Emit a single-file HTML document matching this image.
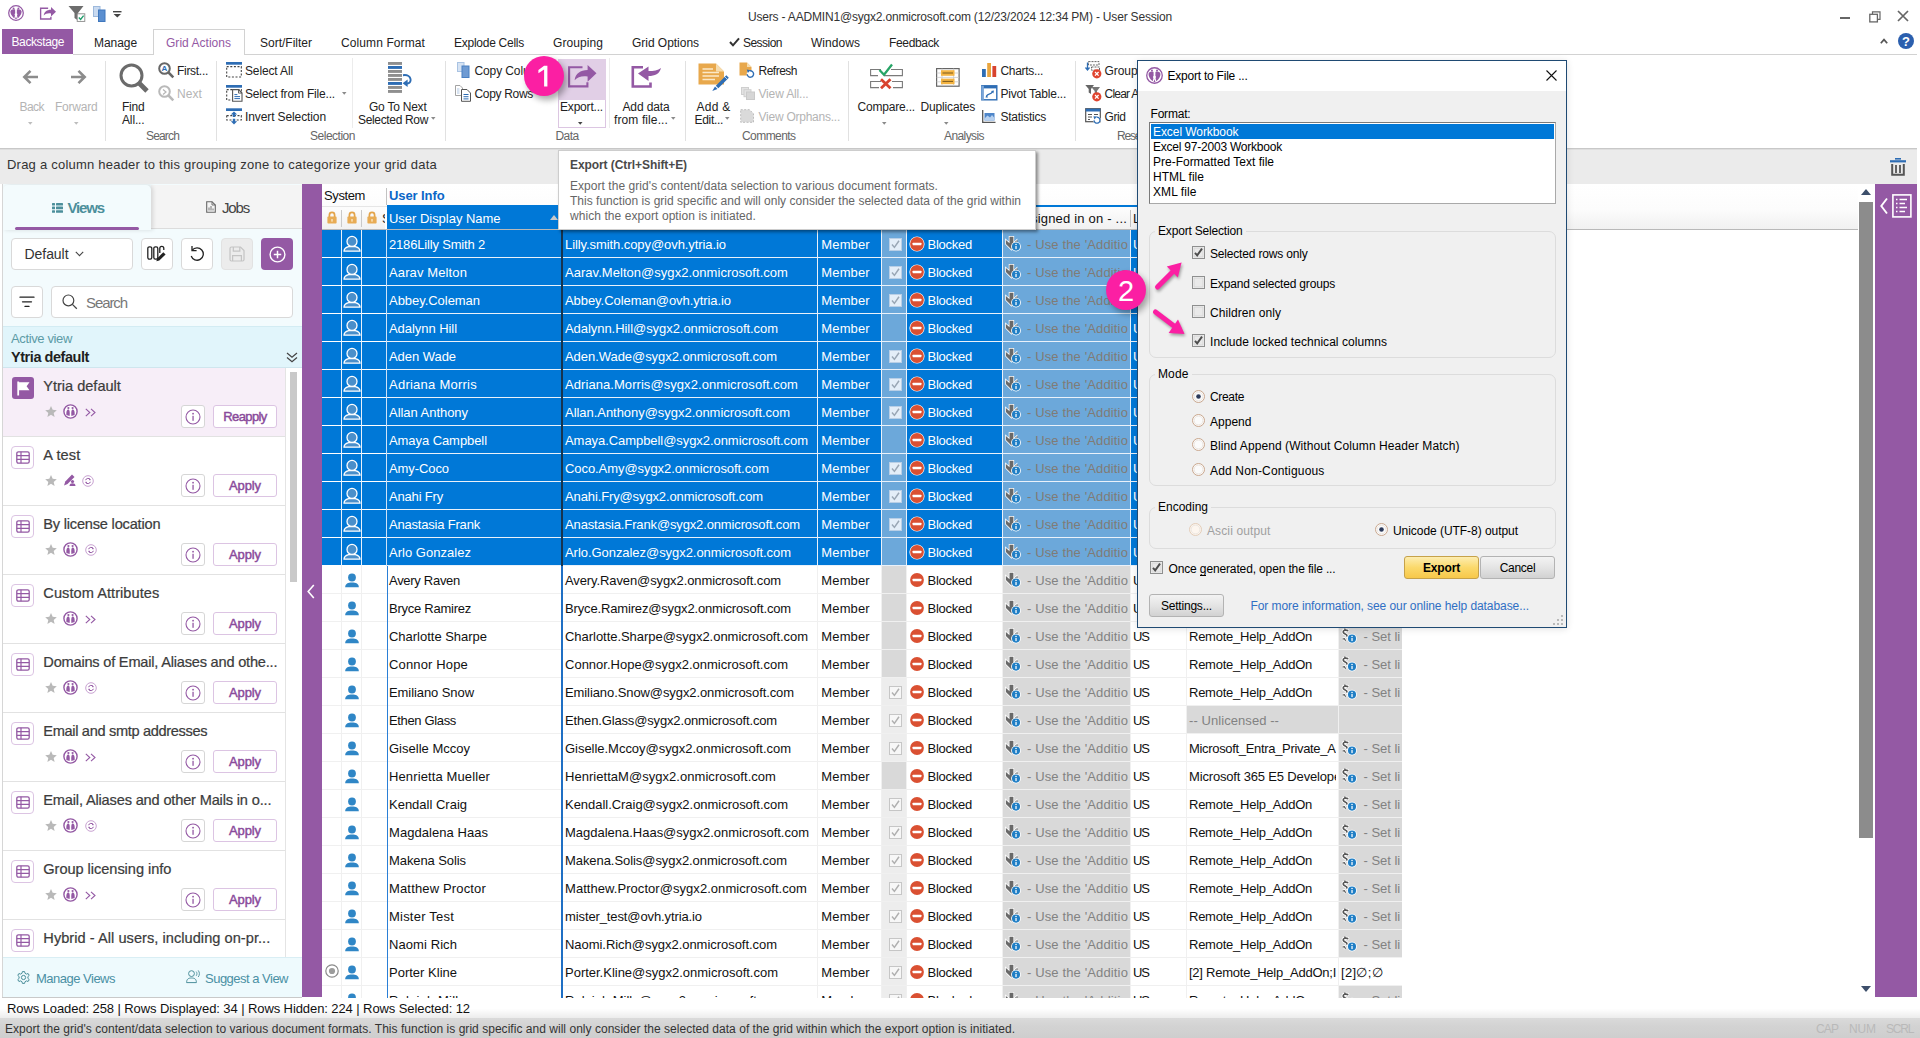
<!DOCTYPE html>
<html lang="en"><head><meta charset="utf-8"><title>Users - User Session</title>
<style>
*{box-sizing:border-box;margin:0;padding:0}
html,body{width:1920px;height:1038px;overflow:hidden;background:#fff}
body{font-family:"Liberation Sans",sans-serif;font-size:12px;color:#222;position:relative}
#root{position:absolute;left:0;top:0;width:1920px;height:1038px;overflow:hidden}
#root div,#root span,#root svg{position:absolute}
#root span{white-space:nowrap}
#root svg{overflow:visible}
.clip{overflow:hidden}
</style></head>
<body><div id="root">
<svg style="left:8px;top:5px;" width="16" height="16" viewBox="0 0 16 16"><circle cx="8" cy="8" r="7.3" fill="#fff" stroke="#9459a4" stroke-width="1.25"/><path d="M7.1 4.6C5.2 3.6 3 4.4 2.4 6.3C2.2 8.6 3.6 11 6.3 13.4L7 10.6C6.4 9.6 6.6 8.8 7.2 8.2Z" fill="#9459a4"/><path d="M8.9 4.6C10.8 3.6 13 4.4 13.6 6.3C13.8 8.6 12.4 11 9.7 13.4L9 10.6C9.6 9.6 9.4 8.8 8.8 8.2Z" fill="#9459a4"/><circle cx="5.6" cy="3.4" r="0.95" fill="#9459a4"/><circle cx="10.4" cy="3.4" r="0.95" fill="#9459a4"/><path d="M7.1 14L8 11.6L8.9 14Z" fill="#9459a4"/></svg>
<svg style="left:40.3px;top:7px;" width="16.0" height="13.2" viewBox="0 0 28.5 23.5"><path d="M14.5 2.3H1.1V21.4H19.4V17.3" fill="none" stroke="#9459a4" stroke-width="2.4"/><path d="M6.6 15.2C7.5 8.8 12.3 5.2 19.6 5.1V0L28.5 8.3L19.6 16.8V11.4C14.2 10.6 9.8 11.6 6.6 15.2Z" fill="#9459a4"/></svg>
<svg style="left:68px;top:5px;" width="18" height="17" viewBox="0 0 18 17"><path d="M0.5 1H15.5L10 8V15.5L6.5 13V8Z" fill="#6d6d6d"/><rect x="9.2" y="8.8" width="7.6" height="7.6" fill="#fff" stroke="#8a8a8a" stroke-width="0.9"/><path d="M10.8 12.6L12.6 14.4L15.6 10.6" fill="none" stroke="#1f9d6b" stroke-width="1.4"/></svg>
<svg style="left:93px;top:6px;" width="13" height="16" viewBox="0 0 13 16"><rect x="0.5" y="0.5" width="6.5" height="10" fill="#c9daf0" stroke="#9db9dc" stroke-width="1"/><rect x="5.5" y="4" width="6.5" height="11.5" fill="#5b8fd0" stroke="#3f77bd" stroke-width="1"/></svg>
<svg style="left:113px;top:11px;" width="9" height="7" viewBox="0 0 9 7"><rect x="0" y="0" width="8.5" height="1.4" fill="#444"/><path d="M0.6 3H8L4.3 6.6Z" fill="#444"/></svg>
<span style="top:8.5px;font-size:12px;line-height:16px;color:#333;left:960px;transform:translateX(-50%);letter-spacing:-0.185px;">Users - AADMIN1@sygx2.onmicrosoft.com (12/23/2024 12:34 PM) - User Session</span>
<div style="left:1840px;top:17px;width:10px;height:1.6px;background:#666;"></div>
<svg style="left:1869px;top:11px;" width="12" height="12" viewBox="0 0 12 12"><path d="M3.5 3V0.8H11V8.3H8.8" fill="none" stroke="#666" stroke-width="1.2"/><rect x="0.8" y="3.3" width="7.6" height="7.6" fill="#fff" stroke="#666" stroke-width="1.3"/></svg>
<svg style="left:1897px;top:10px;" width="12" height="12" viewBox="0 0 12 12"><path d="M1 1L11 11M11 1L1 11" stroke="#666" stroke-width="1.7" fill="none"/></svg>
<svg style="left:1880px;top:38px;" width="8" height="6" viewBox="0 0 8 6"><path d="M0.8 5.2L4 1.6L7.2 5.2" stroke="#555" stroke-width="1.7" fill="none"/></svg>
<div style="left:1898px;top:33px;width:16px;height:16px;background:#2b5fae;border-radius:50%;"></div>
<span style="top:32.8px;font-size:13px;line-height:17px;color:#fff;font-weight:700;left:1906px;transform:translateX(-50%);">?</span>
<div style="left:73px;top:54px;width:1844px;height:1px;background:#d2d2d2;"></div>
<div style="left:2px;top:29px;width:71px;height:25px;background:#9459a4;"></div>
<span style="top:33.5px;font-size:12px;line-height:16px;color:#fff;left:11.5px;letter-spacing:-0.394px;">Backstage</span>
<div style="left:153px;top:29px;width:92px;height:26px;background:#fff;border:1px solid #d2d2d2;border-bottom:none;"></div>
<span style="top:34.5px;font-size:12px;line-height:16px;color:#222;left:94px;letter-spacing:-0.062px;">Manage</span>
<span style="top:34.5px;font-size:12px;line-height:16px;color:#9459a4;left:166px;letter-spacing:0.025px;">Grid Actions</span>
<span style="top:34.5px;font-size:12px;line-height:16px;color:#222;left:260px;letter-spacing:-0.001px;">Sort/Filter</span>
<span style="top:34.5px;font-size:12px;line-height:16px;color:#222;left:341px;letter-spacing:0.101px;">Column Format</span>
<span style="top:34.5px;font-size:12px;line-height:16px;color:#222;left:454px;letter-spacing:-0.260px;">Explode Cells</span>
<span style="top:34.5px;font-size:12px;line-height:16px;color:#222;left:553px;letter-spacing:0.078px;">Grouping</span>
<span style="top:34.5px;font-size:12px;line-height:16px;color:#222;left:632px;letter-spacing:-0.030px;">Grid Options</span>
<span style="top:34.5px;font-size:12px;line-height:16px;color:#222;left:743px;letter-spacing:-0.529px;">Session</span>
<span style="top:34.5px;font-size:12px;line-height:16px;color:#222;left:811px;letter-spacing:0.045px;">Windows</span>
<span style="top:34.5px;font-size:12px;line-height:16px;color:#222;left:889px;letter-spacing:-0.338px;">Feedback</span>
<svg style="left:729px;top:37px;" width="11" height="10" viewBox="0 0 11 10"><path d="M1 5L4 8.3L10 1.3" stroke="#333" stroke-width="2" fill="none"/></svg>
<div style="left:0px;top:148px;width:1917px;height:1px;background:#c8c8c8;"></div>
<div style="left:0px;top:149px;width:1917px;height:1px;background:#dedede;"></div>
<div style="left:105px;top:61px;width:1px;height:80px;background:#e1e1e1;"></div>
<div style="left:216px;top:61px;width:1px;height:80px;background:#e1e1e1;"></div>
<div style="left:445px;top:61px;width:1px;height:80px;background:#e1e1e1;"></div>
<div style="left:685px;top:61px;width:1px;height:80px;background:#e1e1e1;"></div>
<div style="left:848px;top:61px;width:1px;height:80px;background:#e1e1e1;"></div>
<div style="left:1075px;top:61px;width:1px;height:80px;background:#e1e1e1;"></div>
<div style="left:352px;top:58px;width:1px;height:70px;background:#ececec;"></div>
<div style="left:609px;top:58px;width:1px;height:70px;background:#ececec;"></div>
<svg style="left:22px;top:69px;" width="17" height="16" viewBox="0 0 17 16"><path d="M16 8H3M8.5 1.8L2.3 8L8.5 14.2" stroke="#8c8c8c" stroke-width="2.6" fill="none"/></svg>
<svg style="left:70px;top:69px;" width="17" height="16" viewBox="0 0 17 16"><path d="M1 8H14M8.5 1.8L14.7 8L8.5 14.2" stroke="#8c8c8c" stroke-width="2.6" fill="none"/></svg>
<span style="top:99.0px;font-size:12px;line-height:16px;color:#b4b4b4;left:19.5px;letter-spacing:-0.547px;">Back</span>
<span style="top:99.0px;font-size:12px;line-height:16px;color:#b4b4b4;left:55px;letter-spacing:-0.217px;">Forward</span>
<svg style="left:27.75px;top:121.7px;" width="4.5" height="2.8" viewBox="0 0 4.5 2.8"><path d="M0 0H4.5L2.25 2.8Z" fill="#bdbdbd"/></svg>
<svg style="left:73.75px;top:121.7px;" width="4.5" height="2.8" viewBox="0 0 4.5 2.8"><path d="M0 0H4.5L2.25 2.8Z" fill="#bdbdbd"/></svg>
<svg style="left:118px;top:62px;" width="32" height="32" viewBox="0 0 32 32"><circle cx="13.5" cy="13.5" r="10.5" fill="none" stroke="#6b6b6b" stroke-width="3"/><path d="M21.5 21.5L29 29" stroke="#6b6b6b" stroke-width="4.8"/></svg>
<span style="top:99.0px;font-size:12px;line-height:16px;color:#222;left:122px;letter-spacing:-0.211px;">Find</span>
<span style="top:112.0px;font-size:12px;line-height:16px;color:#222;left:122px;letter-spacing:-0.141px;">All...</span>
<svg style="left:158px;top:62px;" width="17" height="17" viewBox="0 0 17 17"><circle cx="6.5" cy="6.5" r="5.3" fill="none" stroke="#676767" stroke-width="2"/><path d="M10.5 10.5L15.3 15.3" stroke="#676767" stroke-width="2.5"/></svg>
<span style="top:62.5px;font-size:12px;line-height:16px;color:#222;left:177px;letter-spacing:-0.291px;">First...</span>
<svg style="left:158px;top:85px;" width="17" height="17" viewBox="0 0 17 17"><circle cx="6.5" cy="6.5" r="5.3" fill="none" stroke="#b9b9b9" stroke-width="2"/><path d="M10.5 10.5L15.3 15.3" stroke="#b9b9b9" stroke-width="2.5"/></svg>
<span style="top:85.5px;font-size:12px;line-height:16px;color:#b4b4b4;left:177px;letter-spacing:0.078px;">Next</span>
<span style="top:64.6px;font-size:8px;line-height:8px;color:#2e6db4;font-weight:700;left:164.4px;transform:translateX(-50%);">A</span>
<svg style="left:162px;top:89px;" width="5" height="6" viewBox="0 0 5 6"><path d="M1 0.5L4 3L1 5.5" fill="none" stroke="#b5b5b5" stroke-width="1.2"/></svg>
<span style="top:128.0px;font-size:12px;line-height:16px;color:#666;left:146px;letter-spacing:-0.839px;">Search</span>
<svg style="left:226px;top:62px;" width="17" height="17" viewBox="0 0 17 17"><rect x="0" y="0" width="16" height="2.7" fill="#2e6db4"/><rect x="0.7" y="4.6" width="14.6" height="10.4" fill="none" stroke="#444" stroke-width="1.1" stroke-dasharray="2 1.6"/></svg>
<span style="top:62.5px;font-size:12px;line-height:16px;color:#222;left:245px;letter-spacing:-0.136px;">Select All</span>
<svg style="left:226px;top:85px;" width="17" height="17" viewBox="0 0 17 17"><rect x="0" y="0" width="16" height="2.7" fill="#2e6db4"/><rect x="0.7" y="4.6" width="14.6" height="10.4" fill="none" stroke="#444" stroke-width="1.1" stroke-dasharray="2 1.6"/></svg>
<span style="top:85.5px;font-size:12px;line-height:16px;color:#222;left:245px;letter-spacing:-0.177px;">Select from File...</span>
<svg style="left:226px;top:108px;" width="17" height="17" viewBox="0 0 17 17"><rect x="0" y="0.3" width="16" height="2.7" fill="#2e6db4"/><rect x="0.7" y="7.6" width="14.6" height="4.4" fill="#fff" stroke="#444" stroke-width="1.1" stroke-dasharray="2 1.6"/><path d="M8 3.4L11.2 6.6H9.2V9H6.8V6.6H4.8Z" fill="#2e6db4"/><path d="M8 16.4L11.2 13.2H9.2V10.8H6.8V13.2H4.8Z" fill="#2e6db4"/></svg>
<span style="top:108.5px;font-size:12px;line-height:16px;color:#222;left:245px;letter-spacing:-0.107px;">Invert Selection</span>
<svg style="left:232px;top:88.5px;" width="11" height="13" viewBox="0 0 11 13"><path d="M0.6 0.6H6.5L10 4.1V12.2H0.6Z" fill="#fff" stroke="#555" stroke-width="1.1"/><path d="M6.5 0.6V4.1H10" fill="none" stroke="#555" stroke-width="0.9"/><path d="M2.4 5.6H5.4M2.4 7.6H8M2.4 9.6H8" stroke="#2e6db4" stroke-width="1"/></svg>
<svg style="left:341.75px;top:91.7px;" width="4.5" height="2.8" viewBox="0 0 4.5 2.8"><path d="M0 0H4.5L2.25 2.8Z" fill="#8a8a8a"/></svg>
<span style="top:128.0px;font-size:12px;line-height:16px;color:#666;left:310px;letter-spacing:-0.486px;">Selection</span>
<svg style="left:388px;top:62px;" width="24" height="31" viewBox="0 0 24 31"><rect x="0" y="0.0" width="14" height="2.9" fill="#8f8f8f"/><rect x="0" y="4.0" width="14" height="2.9" fill="#2e6db4"/><rect x="0" y="8.0" width="14" height="2.9" fill="#8f8f8f"/><rect x="0" y="12.0" width="14" height="2.9" fill="#8f8f8f"/><rect x="0" y="16.0" width="14" height="2.9" fill="#8f8f8f"/><rect x="0" y="20.0" width="14" height="2.9" fill="#2e6db4"/><rect x="0" y="24.0" width="14" height="2.9" fill="#8f8f8f"/><rect x="0" y="28.0" width="14" height="2.9" fill="#8f8f8f"/><path d="M15 13.2C24.5 11.8 24.5 22.5 18.5 21.4" fill="none" stroke="#2e6db4" stroke-width="1.9"/><path d="M14.6 21.3L19.6 17.6V25Z" fill="#2e6db4"/></svg>
<span style="top:99.0px;font-size:12px;line-height:16px;color:#222;left:369px;letter-spacing:-0.231px;">Go To Next</span>
<span style="top:112.0px;font-size:12px;line-height:16px;color:#222;left:358px;letter-spacing:-0.337px;">Selected Row</span>
<svg style="left:430.75px;top:116.7px;" width="4.5" height="2.8" viewBox="0 0 4.5 2.8"><path d="M0 0H4.5L2.25 2.8Z" fill="#8a8a8a"/></svg>
<svg style="left:457px;top:62px;" width="13" height="16" viewBox="0 0 13 16"><rect x="0.5" y="0.5" width="6.5" height="9" fill="#d6e3f3" stroke="#a9c3e3" stroke-width="1"/><rect x="5" y="4" width="7" height="11.5" fill="#6f9bd3" stroke="#4a80c2" stroke-width="1"/></svg>
<svg style="left:455px;top:85px;" width="17" height="17" viewBox="0 0 17 17"><path d="M0.5 0.5H5L7.5 3V10.5H0.5Z" fill="#fff" stroke="#9a9a9a" stroke-width="0.9"/><path d="M6.5 4.5H12L15.5 8V16.3H6.5Z" fill="#fff" stroke="#555" stroke-width="1"/><path d="M8.5 9.5H13.5M8.5 11.7H13.5M8.5 13.9H13.5" stroke="#2e6db4" stroke-width="1"/><path d="M2 4H4.5M2 6H4.5M2 8H4.5" stroke="#9db9dc" stroke-width="0.8"/></svg>
<span style="top:62.5px;font-size:12px;line-height:16px;color:#222;left:474.5px;letter-spacing:-0.115px;">Copy Colu</span>
<span style="top:85.5px;font-size:12px;line-height:16px;color:#222;left:474.5px;letter-spacing:-0.318px;">Copy Rows</span>
<div style="left:558px;top:59px;width:48px;height:69px;background:#fff;border:1px solid #dcc6e2;"></div>
<div style="left:558px;top:59px;width:48px;height:41px;background:#e1cfe6;"></div>
<svg style="left:568.3px;top:64.6px;" width="28.5" height="23.5" viewBox="0 0 28.5 23.5"><path d="M14.5 2.3H1.1V21.4H19.4V17.3" fill="none" stroke="#9459a4" stroke-width="2.1"/><path d="M6.6 15.2C7.5 8.8 12.3 5.2 19.6 5.1V0L28.5 8.3L19.6 16.8V11.4C14.2 10.6 9.8 11.6 6.6 15.2Z" fill="#9459a4"/></svg>
<span style="top:99.0px;font-size:12px;line-height:16px;color:#222;left:560px;letter-spacing:-0.188px;">Export...</span>
<svg style="left:578.25px;top:121.7px;" width="4.5" height="2.8" viewBox="0 0 4.5 2.8"><path d="M0 0H4.5L2.25 2.8Z" fill="#444"/></svg>
<span style="top:128.0px;font-size:12px;line-height:16px;color:#666;left:555.5px;letter-spacing:-0.590px;">Data</span>
<svg style="left:631px;top:65px;" width="31" height="24" viewBox="0 0 31 24"><path d="M12 2.3H1.8V21.5H19.5V17.5" fill="none" stroke="#9459a4" stroke-width="2.6"/><path d="M30 3C28.5 9 24 11 17.5 11V16L7 8.6L17.5 1.5V6C22.5 6 27 5.5 30 3Z" fill="#9459a4"/></svg>
<span style="top:99.0px;font-size:12px;line-height:16px;color:#222;left:622.5px;letter-spacing:-0.131px;">Add data</span>
<span style="top:112.0px;font-size:12px;line-height:16px;color:#222;left:614px;letter-spacing:0.109px;">from file...</span>
<svg style="left:670.75px;top:116.7px;" width="4.5" height="2.8" viewBox="0 0 4.5 2.8"><path d="M0 0H4.5L2.25 2.8Z" fill="#8a8a8a"/></svg>
<svg style="left:698px;top:63px;" width="32" height="29" viewBox="0 0 32 29"><path d="M0.5 0.5H18L26 8.5V21.5H0.5Z" fill="#e8a84c"/><path d="M18 0.5V8.5H26Z" fill="#f6dcae"/><path d="M4.5 6H15M4.5 9.5H21M4.5 13H21M4.5 16.5H17" stroke="#fbe9c9" stroke-width="1.5"/><path d="M28.3 12.3L30.8 14.8L20.3 25.3L17.8 22.8Z" fill="#2e6db4"/><path d="M17 23.6L19.5 26.1L14.3 28Z" fill="#2e6db4"/><path d="M26.8 13.8L29.3 16.3" stroke="#fff" stroke-width="0.7"/></svg>
<span style="top:99.0px;font-size:12px;line-height:16px;color:#222;left:696.5px;letter-spacing:0.259px;">Add &amp;</span>
<span style="top:112.0px;font-size:12px;line-height:16px;color:#222;left:694.5px;letter-spacing:-0.312px;">Edit...</span>
<svg style="left:725.25px;top:116.7px;" width="4.5" height="2.8" viewBox="0 0 4.5 2.8"><path d="M0 0H4.5L2.25 2.8Z" fill="#8a8a8a"/></svg>
<svg style="left:739px;top:62px;" width="17" height="17" viewBox="0 0 17 17"><path d="M0.5 0.5H8L12.5 5V13.5H0.5Z" fill="#e8a84c"/><path d="M8 0.5V5H12.5Z" fill="#f6dcae"/><circle cx="11.3" cy="12" r="3.6" fill="#fff"/><path d="M8.2 12.3A3.2 3.2 0 1 0 11 8.8" fill="none" stroke="#2e6db4" stroke-width="1.4"/><path d="M7.8 7.6L11.6 8.2L8.8 11Z" fill="#2e6db4"/></svg>
<span style="top:62.5px;font-size:12px;line-height:16px;color:#222;left:758.5px;letter-spacing:-0.504px;">Refresh</span>
<svg style="left:741px;top:87px;" width="14" height="13" viewBox="0 0 14 13"><rect x="0.5" y="0.5" width="7" height="7" fill="#e3e3e3" stroke="#cfcfcf"/><rect x="3" y="2.7" width="7" height="7" fill="#e3e3e3" stroke="#cfcfcf"/><rect x="5.5" y="5" width="8" height="7.5" fill="#d6d6d6" stroke="#c9c9c9"/></svg>
<span style="top:85.5px;font-size:12px;line-height:16px;color:#b4b4b4;left:758.5px;letter-spacing:-0.165px;">View All...</span>
<svg style="left:740px;top:109px;" width="15" height="14" viewBox="0 0 15 14"><path d="M0.7 0.7H9.5L13.5 4.7V13.3H0.7Z" fill="#dadada" stroke="#bdbdbd" stroke-width="1" stroke-dasharray="2 1.5"/></svg>
<span style="top:108.5px;font-size:12px;line-height:16px;color:#b4b4b4;left:758.5px;letter-spacing:-0.244px;">View Orphans...</span>
<span style="top:128.0px;font-size:12px;line-height:16px;color:#666;left:742px;letter-spacing:-0.564px;">Comments</span>
<svg style="left:870px;top:63px;" width="33" height="26" viewBox="0 0 33 26"><path d="M11 6.5H0.6V12.6H8M21 6.5H32.4V12.6H14" fill="none" stroke="#7a7a7a" stroke-width="1.1"/><path d="M11 18.5H0.6V24.6H9M22 18.5H32.4V24.6H23" fill="none" stroke="#7a7a7a" stroke-width="1.1"/><path d="M9.5 7L14 11.8L22 1.5" fill="none" stroke="#27a567" stroke-width="2.3"/><path d="M11 16.2L20.5 25.2M20.5 16.2L11 25.2" stroke="#d8432e" stroke-width="2.8"/></svg>
<span style="top:99.0px;font-size:12px;line-height:16px;color:#222;left:857.5px;letter-spacing:-0.186px;">Compare...</span>
<svg style="left:882.25px;top:121.7px;" width="4.5" height="2.8" viewBox="0 0 4.5 2.8"><path d="M0 0H4.5L2.25 2.8Z" fill="#8a8a8a"/></svg>
<svg style="left:936px;top:68px;" width="24" height="19" viewBox="0 0 24 19"><rect x="0.6" y="0.6" width="22.5" height="17.6" fill="#fff" stroke="#666" stroke-width="1.2"/><path d="M0.6 5H23M0.6 9.4H23M0.6 13.8H23M6 0.6V18M17.6 0.6V18" stroke="#c9c9c9" stroke-width="0.8"/><rect x="5" y="2.2" width="13.5" height="5.6" fill="#f4b544"/><rect x="5" y="10.6" width="13.5" height="5.6" fill="#f4b544"/><path d="M6.5 5H17M6.5 13.4H17" stroke="#7a5a1e" stroke-width="1"/></svg>
<span style="top:99.0px;font-size:12px;line-height:16px;color:#222;left:920.5px;letter-spacing:-0.153px;">Duplicates</span>
<svg style="left:944.25px;top:121.7px;" width="4.5" height="2.8" viewBox="0 0 4.5 2.8"><path d="M0 0H4.5L2.25 2.8Z" fill="#8a8a8a"/></svg>
<svg style="left:982px;top:62px;" width="15" height="15" viewBox="0 0 15 15"><rect x="0" y="7" width="3.8" height="8" fill="#2e6db4"/><rect x="5.2" y="1" width="3.8" height="14" fill="#e9a53e"/><rect x="10.4" y="4" width="3.8" height="11" fill="#d8432e"/></svg>
<span style="top:62.5px;font-size:12px;line-height:16px;color:#222;left:1000.5px;letter-spacing:-0.318px;">Charts...</span>
<svg style="left:981px;top:85px;" width="17" height="16" viewBox="0 0 17 16"><rect x="0.8" y="0.8" width="15" height="14" fill="#fff" stroke="#2e6db4" stroke-width="1.4"/><rect x="0.8" y="0.8" width="15" height="2.6" fill="#2e6db4"/><rect x="0.3" y="0.8" width="2.6" height="14" fill="#7ba6d8"/><path d="M5.5 11.5C6.5 8 9.5 10.5 11.5 6.8" fill="none" stroke="#2e6db4" stroke-width="1.3"/><path d="M10 6L13 5.5L12.3 8.5Z" fill="#2e6db4"/><path d="M7 12.6L4.5 12.5L5.3 10Z" fill="#2e6db4"/></svg>
<span style="top:85.5px;font-size:12px;line-height:16px;color:#222;left:1000.5px;letter-spacing:-0.213px;">Pivot Table...</span>
<svg style="left:982px;top:110px;" width="14" height="13" viewBox="0 0 14 13"><path d="M0.7 0V12.3H13.5" fill="none" stroke="#555" stroke-width="1.3"/><rect x="2.5" y="3" width="10" height="7.5" fill="#4f86c9"/><path d="M2.5 8.5L5.5 5.5L8 7.5L10 5L12.5 8V10.5H2.5Z" fill="#b7d0ee"/></svg>
<span style="top:108.5px;font-size:12px;line-height:16px;color:#222;left:1000.5px;letter-spacing:-0.252px;">Statistics</span>
<span style="top:128.0px;font-size:12px;line-height:16px;color:#666;left:944px;letter-spacing:-0.586px;">Analysis</span>
<svg style="left:1085px;top:61px;" width="18" height="18" viewBox="0 0 18 18"><rect x="3.5" y="0.6" width="10.5" height="3.4" fill="none" stroke="#555" stroke-width="0.9" stroke-dasharray="2 1"/><rect x="6.5" y="6" width="8" height="3.2" fill="none" stroke="#555" stroke-width="0.9" stroke-dasharray="2 1"/><path d="M2.5 1.5V9M0.5 6.5L2.5 9L4.5 6.5" fill="none" stroke="#2e6db4" stroke-width="1.3"/><circle cx="11.8" cy="12.8" r="4.6" fill="#e0442f"/><path d="M10.0 11.0L13.600000000000001 14.600000000000001M13.600000000000001 11.0L10.0 14.600000000000001" stroke="#fff" stroke-width="1.3"/></svg>
<span style="top:62.5px;font-size:12px;line-height:16px;color:#222;left:1104.5px;letter-spacing:-0.072px;">Group</span>
<svg style="left:1085px;top:84px;" width="18" height="18" viewBox="0 0 18 18"><path d="M0.3 1H9L6 5V10L3.7 8.5V5Z" fill="#666"/><path d="M6.3 3H15L12 7V12L9.7 10.5V7Z" fill="#777"/><circle cx="11.8" cy="12.8" r="4.6" fill="#e0442f"/><path d="M10.0 11.0L13.600000000000001 14.600000000000001M13.600000000000001 11.0L10.0 14.600000000000001" stroke="#fff" stroke-width="1.3"/></svg>
<span style="top:85.5px;font-size:12px;line-height:16px;color:#222;left:1104.5px;letter-spacing:-0.766px;">Clear A</span>
<svg style="left:1085px;top:108px;" width="18" height="17" viewBox="0 0 18 17"><rect x="0.7" y="0.7" width="14.6" height="13" fill="#fff" stroke="#555" stroke-width="1.2"/><rect x="0.7" y="0.7" width="14.6" height="2.8" fill="#2e6db4"/><path d="M3 6.5H7M3 9H7M3 11.5H5M9 6.5H13" stroke="#555" stroke-width="1"/><circle cx="12" cy="12" r="3.8" fill="#fff"/><path d="M9 12.4A3 3 0 1 0 11.6 9.2" fill="none" stroke="#2e6db4" stroke-width="1.3"/><path d="M8.4 8.3L12 8.6L9.4 11.4Z" fill="#2e6db4"/></svg>
<span style="top:108.5px;font-size:12px;line-height:16px;color:#222;left:1104.5px;letter-spacing:-0.418px;">Grid</span>
<span style="top:128.0px;font-size:12px;line-height:16px;color:#666;left:1117px;letter-spacing:-1.200px;">Rese</span>
<div style="left:0px;top:150px;width:1917px;height:34px;background:#ebebeb;"></div>
<span style="top:156.0px;font-size:13px;line-height:17px;color:#333;left:7px;letter-spacing:0.224px;">Drag a column header to this grouping zone to categorize your grid data</span>
<svg style="left:1890px;top:158px;" width="16" height="18" viewBox="0 0 16 18"><rect x="0" y="2.2" width="16" height="2.2" fill="#2e6db4"/><rect x="5" y="0" width="6" height="1.6" fill="#2e6db4"/><path d="M2.2 6V16.8H13.8V6" fill="none" stroke="#555" stroke-width="2"/><path d="M6 7V15M10 7V15" stroke="#555" stroke-width="1.8"/></svg>
<div style="left:0px;top:997px;width:1920px;height:21px;background:linear-gradient(#ffffff 0%,#ffffff 55%,#ececec 100%);"></div>
<span style="top:999.5px;font-size:13px;line-height:17px;color:#111;left:7px;letter-spacing:-0.089px;">Rows Loaded: 258 | Rows Displayed: 34 | Rows Hidden: 224 | Rows Selected: 12</span>
<div style="left:0px;top:1018px;width:1920px;height:20px;background:linear-gradient(#dadada 0%,#d3d3d3 40%,#cecece 100%);"></div>
<span style="top:1020.5px;font-size:12px;line-height:16px;color:#333;left:5px;letter-spacing:0.031px;">Export the grid's content/data selection to various document formats. This function is grid specific and will only consider the selected data of the grid within which the export option is initiated.</span>
<span style="top:1020.5px;font-size:12px;line-height:16px;color:#b9b9b9;left:1816px;letter-spacing:-0.896px;">CAP</span>
<span style="top:1020.5px;font-size:12px;line-height:16px;color:#b9b9b9;left:1849px;letter-spacing:-0.109px;">NUM</span>
<span style="top:1020.5px;font-size:12px;line-height:16px;color:#b9b9b9;left:1886px;letter-spacing:-1.200px;">SCRL</span>
<div style="left:302px;top:184px;width:19.5px;height:813px;background:#9459a4;"></div>
<svg style="left:307px;top:584px;" width="8" height="15" viewBox="0 0 8 15"><path d="M6.8 1L1.2 7.5L6.8 14" fill="none" stroke="#fff" stroke-width="1.6"/></svg>
<div style="left:1875px;top:184px;width:42px;height:813px;background:#9459a4;"></div>
<svg style="left:1880px;top:197px;" width="8" height="18" viewBox="0 0 8 18"><path d="M7 1.5L1.3 9L7 16.5" fill="none" stroke="#fff" stroke-width="1.9"/></svg>
<svg style="left:1892px;top:194px;" width="20" height="24" viewBox="0 0 20 24"><rect x="0.9" y="0.9" width="18" height="22" fill="none" stroke="#fff" stroke-width="1.6"/><path d="M4 5.5H5.5M7.5 5.5H15M4 9.5H5.5M7.5 9.5H13M4 13.5H5.5M7.5 13.5H15M4 17.5H5.5M7.5 17.5H13" stroke="#fff" stroke-width="1.5"/></svg>
<div style="left:322px;top:184px;width:1536px;height:814px;overflow:hidden;background:#fff;">
<div style="left:0px;top:1px;width:1536px;height:44px;background:linear-gradient(#ffffff 0%,#fcfcfc 55%,#f1f1f1 100%);"></div>
<div style="left:0px;top:45px;width:1536px;height:1px;background:#b9b9b9;"></div>
<div style="left:0px;top:22px;width:65px;height:1px;background:#e6e6e6;"></div>
<div style="left:65px;top:21px;width:752px;height:1.6px;background:#0078d7;"></div>
<span style="top:3.0px;font-size:13px;line-height:17px;color:#111;left:2px;letter-spacing:-0.391px;">System</span>
<div style="left:64px;top:4px;width:1px;height:17px;background:#c2c2c2;"></div>
<span style="top:3.0px;font-size:13px;line-height:17px;color:#0a66c8;font-weight:700;left:67px;letter-spacing:-0.094px;">User Info</span>
<svg style="left:5px;top:27px;" width="10" height="13" viewBox="0 0 10 13"><path d="M2.4 6V4A2.6 2.6 0 0 1 7.6 4V6" fill="none" stroke="#e3a44a" stroke-width="1.7"/><rect x="0.4" y="5.6" width="9.2" height="7" rx="0.8" fill="#e8ac55"/><rect x="4.3" y="8" width="1.4" height="2.6" fill="#fbe6c2"/></svg>
<svg style="left:25px;top:27px;" width="10" height="13" viewBox="0 0 10 13"><path d="M2.4 6V4A2.6 2.6 0 0 1 7.6 4V6" fill="none" stroke="#e3a44a" stroke-width="1.7"/><rect x="0.4" y="5.6" width="9.2" height="7" rx="0.8" fill="#e8ac55"/><rect x="4.3" y="8" width="1.4" height="2.6" fill="#fbe6c2"/></svg>
<svg style="left:45px;top:27px;" width="10" height="13" viewBox="0 0 10 13"><path d="M2.4 6V4A2.6 2.6 0 0 1 7.6 4V6" fill="none" stroke="#e3a44a" stroke-width="1.7"/><rect x="0.4" y="5.6" width="9.2" height="7" rx="0.8" fill="#e8ac55"/><rect x="4.3" y="8" width="1.4" height="2.6" fill="#fbe6c2"/></svg>
<div style="left:19px;top:26px;width:1px;height:17px;background:#c9c9c9;"></div>
<div style="left:39px;top:26px;width:1px;height:17px;background:#c9c9c9;"></div>
<span style="top:26.0px;font-size:13px;line-height:17px;color:#222;left:60px;">S</span>
<div style="left:65px;top:23px;width:172px;height:22px;background:#0078d7;"></div>
<div style="left:63px;top:23px;width:2px;height:22px;background:#fff;"></div>
<span style="top:26.0px;font-size:13px;line-height:17px;color:#fff;left:67px;letter-spacing:-0.028px;">User Display Name</span>
<svg style="left:228px;top:31px;" width="8" height="5" viewBox="0 0 8 5"><path d="M0 5L4 0L8 5Z" fill="#c9c9c9"/></svg>
<span style="top:26.0px;font-size:13px;line-height:17px;color:#111;left:709px;letter-spacing:0.194px;">signed in on - ...</span>
<div style="left:808px;top:26px;width:1px;height:17px;background:#c2c2c2;"></div>
<span style="top:26.0px;font-size:13px;line-height:17px;color:#111;left:811px;">L</span>
<div style="left:0px;top:46px;width:1080px;height:27px;background:#0078d7;"></div>
<div style="left:65px;top:73px;width:1015px;height:1px;background:#e9f1fa;"></div>
<div style="left:560px;top:46px;width:25px;height:27px;background:#6ca8da;"></div>
<div style="left:681px;top:46px;width:128px;height:27px;background:#6ca8da;"></div>
<div style="left:1017px;top:46px;width:63px;height:27px;background:#6ca8da;"></div>
<div style="left:19px;top:46px;width:1px;height:28px;background:#e9f1fa;"></div>
<div style="left:39px;top:46px;width:1px;height:28px;background:#e9f1fa;"></div>
<div style="left:495px;top:46px;width:1px;height:28px;background:#e9f1fa;"></div>
<div style="left:559px;top:46px;width:1px;height:28px;background:#e9f1fa;"></div>
<div style="left:584px;top:46px;width:1px;height:28px;background:#e9f1fa;"></div>
<div style="left:680px;top:46px;width:1px;height:28px;background:#e9f1fa;"></div>
<div style="left:808px;top:46px;width:1px;height:28px;background:#e9f1fa;"></div>
<div style="left:864px;top:46px;width:1px;height:28px;background:#e9f1fa;"></div>
<div style="left:1016px;top:46px;width:1px;height:28px;background:#e9f1fa;"></div>
<svg style="left:21px;top:51.19999999999999px;" width="18" height="18" viewBox="0 0 18 18"><path d="M1 16.2C1 13.6 3 12.3 5.6 11.6H12.4C15 12.3 17 13.6 17 16.2Z" fill="#4a8fca" stroke="#fff" stroke-width="1.3"/><circle cx="9" cy="6.4" r="5" fill="#4a8fca" stroke="#fff" stroke-width="1.3"/></svg>
<span style="top:52.2px;font-size:13px;line-height:17px;color:#fff;left:67px;letter-spacing:-0.176px;">2186Lilly Smith 2</span>
<span style="top:52.2px;font-size:13px;line-height:17px;color:#fff;left:243px;letter-spacing:-0.077px;">Lilly.smith.copy@ovh.ytria.io</span>
<span style="top:52.2px;font-size:13px;line-height:17px;color:#fff;left:499.29999999999995px;letter-spacing:0.135px;">Member</span>
<svg style="left:566.5px;top:53.89999999999998px;" width="13" height="13" viewBox="0 0 13 13"><rect x="0.5" y="0.5" width="12" height="12" fill="#e4eef8" stroke="#b9cfe6"/><path d="M3 6.6L5.4 9.4L10 2.8" fill="none" stroke="#9aa7b5" stroke-width="1.5"/></svg>
<svg style="left:587px;top:52.19999999999999px;" width="16" height="16" viewBox="0 0 16 16"><circle cx="8" cy="8" r="7.6" fill="#fff"/><circle cx="8" cy="8" r="6.9" fill="#da5032"/><rect x="3.6" y="6.8" width="8.8" height="2.4" rx="0.4" fill="#fff"/></svg>
<span style="top:52.2px;font-size:13px;line-height:17px;color:#fff;left:605.5px;letter-spacing:-0.250px;">Blocked</span>
<svg style="left:682px;top:50.5px;" width="18" height="18" viewBox="0 0 18 18"><path d="M5.5 1.8H9.4V8.2L12.6 5.3V9.6L7.5 14.6L1.9 9V4.9L5.5 8.2Z" fill="#696969" stroke="#fff" stroke-width="1.5" paint-order="stroke"/><circle cx="13.2" cy="6" r="0.6" fill="#222"/><circle cx="12" cy="11.6" r="4.9" fill="#fff"/><circle cx="12" cy="11.6" r="4.05" fill="#1f7ec5"/><rect x="11.4" y="11" width="1.25" height="3.1" fill="#fff"/><circle cx="12.02" cy="9.5" r="0.8" fill="#fff"/></svg>
<div style="left:681px;top:46px;width:127px;height:27px;overflow:hidden;">
<span style="top:6.2px;font-size:13px;line-height:17px;color:#807b76;left:24px;letter-spacing:0.134px;">- Use the 'Additio</span>
</div>
<span style="top:52.2px;font-size:13px;line-height:17px;color:#fff;left:811px;letter-spacing:-1.031px;">US</span>
<div style="left:865px;top:46px;width:149px;height:27px;overflow:hidden;">
<span style="top:6.2px;font-size:13px;line-height:17px;color:#fff;left:2px;letter-spacing:-0.247px;">Remote_Help_AddOn</span>
</div>
<svg style="left:1017.5999999999999px;top:50.5px;" width="18" height="18" viewBox="0 0 18 18"><path d="M7.6 3.6C5.6 2.6 3.2 3.2 3.2 5C3.2 7.4 7.3 6.6 7 9" fill="none" stroke="#fff" stroke-width="3.4" stroke-linecap="round"/><path d="M7.6 3.6C5.6 2.6 3.2 3.2 3.2 5C3.2 7.4 7.3 6.6 7 9" fill="none" stroke="#575757" stroke-width="1.7" stroke-linecap="round"/><path d="M4.6 1.4L5.2 3" stroke="#575757" stroke-width="1.3"/><path d="M2.6 12L4.4 11.6L5.6 13.8" fill="none" stroke="#fff" stroke-width="2.6"/><path d="M2.6 12L4.4 11.6L5.6 13.8" fill="none" stroke="#575757" stroke-width="1.2"/><circle cx="12" cy="11.6" r="4.9" fill="#fff"/><circle cx="12" cy="11.6" r="4.05" fill="#1f7ec5"/><rect x="11.4" y="11" width="1.25" height="3.1" fill="#fff"/><circle cx="12.02" cy="9.5" r="0.8" fill="#fff"/></svg>
<div style="left:1017px;top:46px;width:62px;height:27px;overflow:hidden;">
<span style="top:6.2px;font-size:13px;line-height:17px;color:#807b76;left:24.5px;letter-spacing:-0.018px;">- Set li</span>
</div>
<div style="left:0px;top:74px;width:1080px;height:27px;background:#0078d7;"></div>
<div style="left:65px;top:101px;width:1015px;height:1px;background:#e9f1fa;"></div>
<div style="left:560px;top:74px;width:25px;height:27px;background:#6ca8da;"></div>
<div style="left:681px;top:74px;width:128px;height:27px;background:#6ca8da;"></div>
<div style="left:1017px;top:74px;width:63px;height:27px;background:#6ca8da;"></div>
<div style="left:19px;top:74px;width:1px;height:28px;background:#e9f1fa;"></div>
<div style="left:39px;top:74px;width:1px;height:28px;background:#e9f1fa;"></div>
<div style="left:495px;top:74px;width:1px;height:28px;background:#e9f1fa;"></div>
<div style="left:559px;top:74px;width:1px;height:28px;background:#e9f1fa;"></div>
<div style="left:584px;top:74px;width:1px;height:28px;background:#e9f1fa;"></div>
<div style="left:680px;top:74px;width:1px;height:28px;background:#e9f1fa;"></div>
<div style="left:808px;top:74px;width:1px;height:28px;background:#e9f1fa;"></div>
<div style="left:864px;top:74px;width:1px;height:28px;background:#e9f1fa;"></div>
<div style="left:1016px;top:74px;width:1px;height:28px;background:#e9f1fa;"></div>
<svg style="left:21px;top:79.19999999999999px;" width="18" height="18" viewBox="0 0 18 18"><path d="M1 16.2C1 13.6 3 12.3 5.6 11.6H12.4C15 12.3 17 13.6 17 16.2Z" fill="#4a8fca" stroke="#fff" stroke-width="1.3"/><circle cx="9" cy="6.4" r="5" fill="#4a8fca" stroke="#fff" stroke-width="1.3"/></svg>
<span style="top:80.2px;font-size:13px;line-height:17px;color:#fff;left:67px;letter-spacing:0.117px;">Aarav Melton</span>
<span style="top:80.2px;font-size:13px;line-height:17px;color:#fff;left:243px;letter-spacing:0.036px;">Aarav.Melton@sygx2.onmicrosoft.com</span>
<span style="top:80.2px;font-size:13px;line-height:17px;color:#fff;left:499.29999999999995px;letter-spacing:0.135px;">Member</span>
<svg style="left:566.5px;top:81.89999999999998px;" width="13" height="13" viewBox="0 0 13 13"><rect x="0.5" y="0.5" width="12" height="12" fill="#e4eef8" stroke="#b9cfe6"/><path d="M3 6.6L5.4 9.4L10 2.8" fill="none" stroke="#9aa7b5" stroke-width="1.5"/></svg>
<svg style="left:587px;top:80.19999999999999px;" width="16" height="16" viewBox="0 0 16 16"><circle cx="8" cy="8" r="7.6" fill="#fff"/><circle cx="8" cy="8" r="6.9" fill="#da5032"/><rect x="3.6" y="6.8" width="8.8" height="2.4" rx="0.4" fill="#fff"/></svg>
<span style="top:80.2px;font-size:13px;line-height:17px;color:#fff;left:605.5px;letter-spacing:-0.250px;">Blocked</span>
<svg style="left:682px;top:78.5px;" width="18" height="18" viewBox="0 0 18 18"><path d="M5.5 1.8H9.4V8.2L12.6 5.3V9.6L7.5 14.6L1.9 9V4.9L5.5 8.2Z" fill="#696969" stroke="#fff" stroke-width="1.5" paint-order="stroke"/><circle cx="13.2" cy="6" r="0.6" fill="#222"/><circle cx="12" cy="11.6" r="4.9" fill="#fff"/><circle cx="12" cy="11.6" r="4.05" fill="#1f7ec5"/><rect x="11.4" y="11" width="1.25" height="3.1" fill="#fff"/><circle cx="12.02" cy="9.5" r="0.8" fill="#fff"/></svg>
<div style="left:681px;top:74px;width:127px;height:27px;overflow:hidden;">
<span style="top:6.2px;font-size:13px;line-height:17px;color:#807b76;left:24px;letter-spacing:0.134px;">- Use the 'Additio</span>
</div>
<span style="top:80.2px;font-size:13px;line-height:17px;color:#fff;left:811px;letter-spacing:-1.031px;">US</span>
<div style="left:865px;top:74px;width:149px;height:27px;overflow:hidden;">
<span style="top:6.2px;font-size:13px;line-height:17px;color:#fff;left:2px;letter-spacing:-0.247px;">Remote_Help_AddOn</span>
</div>
<svg style="left:1017.5999999999999px;top:78.5px;" width="18" height="18" viewBox="0 0 18 18"><path d="M7.6 3.6C5.6 2.6 3.2 3.2 3.2 5C3.2 7.4 7.3 6.6 7 9" fill="none" stroke="#fff" stroke-width="3.4" stroke-linecap="round"/><path d="M7.6 3.6C5.6 2.6 3.2 3.2 3.2 5C3.2 7.4 7.3 6.6 7 9" fill="none" stroke="#575757" stroke-width="1.7" stroke-linecap="round"/><path d="M4.6 1.4L5.2 3" stroke="#575757" stroke-width="1.3"/><path d="M2.6 12L4.4 11.6L5.6 13.8" fill="none" stroke="#fff" stroke-width="2.6"/><path d="M2.6 12L4.4 11.6L5.6 13.8" fill="none" stroke="#575757" stroke-width="1.2"/><circle cx="12" cy="11.6" r="4.9" fill="#fff"/><circle cx="12" cy="11.6" r="4.05" fill="#1f7ec5"/><rect x="11.4" y="11" width="1.25" height="3.1" fill="#fff"/><circle cx="12.02" cy="9.5" r="0.8" fill="#fff"/></svg>
<div style="left:1017px;top:74px;width:62px;height:27px;overflow:hidden;">
<span style="top:6.2px;font-size:13px;line-height:17px;color:#807b76;left:24.5px;letter-spacing:-0.018px;">- Set li</span>
</div>
<div style="left:0px;top:102px;width:1080px;height:27px;background:#0078d7;"></div>
<div style="left:65px;top:129px;width:1015px;height:1px;background:#e9f1fa;"></div>
<div style="left:560px;top:102px;width:25px;height:27px;background:#6ca8da;"></div>
<div style="left:681px;top:102px;width:128px;height:27px;background:#6ca8da;"></div>
<div style="left:1017px;top:102px;width:63px;height:27px;background:#6ca8da;"></div>
<div style="left:19px;top:102px;width:1px;height:28px;background:#e9f1fa;"></div>
<div style="left:39px;top:102px;width:1px;height:28px;background:#e9f1fa;"></div>
<div style="left:495px;top:102px;width:1px;height:28px;background:#e9f1fa;"></div>
<div style="left:559px;top:102px;width:1px;height:28px;background:#e9f1fa;"></div>
<div style="left:584px;top:102px;width:1px;height:28px;background:#e9f1fa;"></div>
<div style="left:680px;top:102px;width:1px;height:28px;background:#e9f1fa;"></div>
<div style="left:808px;top:102px;width:1px;height:28px;background:#e9f1fa;"></div>
<div style="left:864px;top:102px;width:1px;height:28px;background:#e9f1fa;"></div>
<div style="left:1016px;top:102px;width:1px;height:28px;background:#e9f1fa;"></div>
<svg style="left:21px;top:107.19999999999999px;" width="18" height="18" viewBox="0 0 18 18"><path d="M1 16.2C1 13.6 3 12.3 5.6 11.6H12.4C15 12.3 17 13.6 17 16.2Z" fill="#4a8fca" stroke="#fff" stroke-width="1.3"/><circle cx="9" cy="6.4" r="5" fill="#4a8fca" stroke="#fff" stroke-width="1.3"/></svg>
<span style="top:108.2px;font-size:13px;line-height:17px;color:#fff;left:67px;letter-spacing:-0.042px;">Abbey.Coleman</span>
<span style="top:108.2px;font-size:13px;line-height:17px;color:#fff;left:243px;letter-spacing:-0.061px;">Abbey.Coleman@ovh.ytria.io</span>
<span style="top:108.2px;font-size:13px;line-height:17px;color:#fff;left:499.29999999999995px;letter-spacing:0.135px;">Member</span>
<svg style="left:566.5px;top:109.89999999999998px;" width="13" height="13" viewBox="0 0 13 13"><rect x="0.5" y="0.5" width="12" height="12" fill="#e4eef8" stroke="#b9cfe6"/><path d="M3 6.6L5.4 9.4L10 2.8" fill="none" stroke="#9aa7b5" stroke-width="1.5"/></svg>
<svg style="left:587px;top:108.19999999999999px;" width="16" height="16" viewBox="0 0 16 16"><circle cx="8" cy="8" r="7.6" fill="#fff"/><circle cx="8" cy="8" r="6.9" fill="#da5032"/><rect x="3.6" y="6.8" width="8.8" height="2.4" rx="0.4" fill="#fff"/></svg>
<span style="top:108.2px;font-size:13px;line-height:17px;color:#fff;left:605.5px;letter-spacing:-0.250px;">Blocked</span>
<svg style="left:682px;top:106.5px;" width="18" height="18" viewBox="0 0 18 18"><path d="M5.5 1.8H9.4V8.2L12.6 5.3V9.6L7.5 14.6L1.9 9V4.9L5.5 8.2Z" fill="#696969" stroke="#fff" stroke-width="1.5" paint-order="stroke"/><circle cx="13.2" cy="6" r="0.6" fill="#222"/><circle cx="12" cy="11.6" r="4.9" fill="#fff"/><circle cx="12" cy="11.6" r="4.05" fill="#1f7ec5"/><rect x="11.4" y="11" width="1.25" height="3.1" fill="#fff"/><circle cx="12.02" cy="9.5" r="0.8" fill="#fff"/></svg>
<div style="left:681px;top:102px;width:127px;height:27px;overflow:hidden;">
<span style="top:6.2px;font-size:13px;line-height:17px;color:#807b76;left:24px;letter-spacing:0.134px;">- Use the 'Additio</span>
</div>
<span style="top:108.2px;font-size:13px;line-height:17px;color:#fff;left:811px;letter-spacing:-1.031px;">US</span>
<div style="left:865px;top:102px;width:149px;height:27px;overflow:hidden;">
<span style="top:6.2px;font-size:13px;line-height:17px;color:#fff;left:2px;letter-spacing:-0.247px;">Remote_Help_AddOn</span>
</div>
<svg style="left:1017.5999999999999px;top:106.5px;" width="18" height="18" viewBox="0 0 18 18"><path d="M7.6 3.6C5.6 2.6 3.2 3.2 3.2 5C3.2 7.4 7.3 6.6 7 9" fill="none" stroke="#fff" stroke-width="3.4" stroke-linecap="round"/><path d="M7.6 3.6C5.6 2.6 3.2 3.2 3.2 5C3.2 7.4 7.3 6.6 7 9" fill="none" stroke="#575757" stroke-width="1.7" stroke-linecap="round"/><path d="M4.6 1.4L5.2 3" stroke="#575757" stroke-width="1.3"/><path d="M2.6 12L4.4 11.6L5.6 13.8" fill="none" stroke="#fff" stroke-width="2.6"/><path d="M2.6 12L4.4 11.6L5.6 13.8" fill="none" stroke="#575757" stroke-width="1.2"/><circle cx="12" cy="11.6" r="4.9" fill="#fff"/><circle cx="12" cy="11.6" r="4.05" fill="#1f7ec5"/><rect x="11.4" y="11" width="1.25" height="3.1" fill="#fff"/><circle cx="12.02" cy="9.5" r="0.8" fill="#fff"/></svg>
<div style="left:1017px;top:102px;width:62px;height:27px;overflow:hidden;">
<span style="top:6.2px;font-size:13px;line-height:17px;color:#807b76;left:24.5px;letter-spacing:-0.018px;">- Set li</span>
</div>
<div style="left:0px;top:130px;width:1080px;height:27px;background:#0078d7;"></div>
<div style="left:65px;top:157px;width:1015px;height:1px;background:#e9f1fa;"></div>
<div style="left:560px;top:130px;width:25px;height:27px;background:#6ca8da;"></div>
<div style="left:681px;top:130px;width:128px;height:27px;background:#6ca8da;"></div>
<div style="left:1017px;top:130px;width:63px;height:27px;background:#6ca8da;"></div>
<div style="left:19px;top:130px;width:1px;height:28px;background:#e9f1fa;"></div>
<div style="left:39px;top:130px;width:1px;height:28px;background:#e9f1fa;"></div>
<div style="left:495px;top:130px;width:1px;height:28px;background:#e9f1fa;"></div>
<div style="left:559px;top:130px;width:1px;height:28px;background:#e9f1fa;"></div>
<div style="left:584px;top:130px;width:1px;height:28px;background:#e9f1fa;"></div>
<div style="left:680px;top:130px;width:1px;height:28px;background:#e9f1fa;"></div>
<div style="left:808px;top:130px;width:1px;height:28px;background:#e9f1fa;"></div>
<div style="left:864px;top:130px;width:1px;height:28px;background:#e9f1fa;"></div>
<div style="left:1016px;top:130px;width:1px;height:28px;background:#e9f1fa;"></div>
<svg style="left:21px;top:135.2px;" width="18" height="18" viewBox="0 0 18 18"><path d="M1 16.2C1 13.6 3 12.3 5.6 11.6H12.4C15 12.3 17 13.6 17 16.2Z" fill="#4a8fca" stroke="#fff" stroke-width="1.3"/><circle cx="9" cy="6.4" r="5" fill="#4a8fca" stroke="#fff" stroke-width="1.3"/></svg>
<span style="top:136.2px;font-size:13px;line-height:17px;color:#fff;left:67px;letter-spacing:-0.055px;">Adalynn Hill</span>
<span style="top:136.2px;font-size:13px;line-height:17px;color:#fff;left:243px;letter-spacing:-0.052px;">Adalynn.Hill@sygx2.onmicrosoft.com</span>
<span style="top:136.2px;font-size:13px;line-height:17px;color:#fff;left:499.29999999999995px;letter-spacing:0.135px;">Member</span>
<svg style="left:587px;top:136.2px;" width="16" height="16" viewBox="0 0 16 16"><circle cx="8" cy="8" r="7.6" fill="#fff"/><circle cx="8" cy="8" r="6.9" fill="#da5032"/><rect x="3.6" y="6.8" width="8.8" height="2.4" rx="0.4" fill="#fff"/></svg>
<span style="top:136.2px;font-size:13px;line-height:17px;color:#fff;left:605.5px;letter-spacing:-0.250px;">Blocked</span>
<svg style="left:682px;top:134.5px;" width="18" height="18" viewBox="0 0 18 18"><path d="M5.5 1.8H9.4V8.2L12.6 5.3V9.6L7.5 14.6L1.9 9V4.9L5.5 8.2Z" fill="#696969" stroke="#fff" stroke-width="1.5" paint-order="stroke"/><circle cx="13.2" cy="6" r="0.6" fill="#222"/><circle cx="12" cy="11.6" r="4.9" fill="#fff"/><circle cx="12" cy="11.6" r="4.05" fill="#1f7ec5"/><rect x="11.4" y="11" width="1.25" height="3.1" fill="#fff"/><circle cx="12.02" cy="9.5" r="0.8" fill="#fff"/></svg>
<div style="left:681px;top:130px;width:127px;height:27px;overflow:hidden;">
<span style="top:6.2px;font-size:13px;line-height:17px;color:#807b76;left:24px;letter-spacing:0.134px;">- Use the 'Additio</span>
</div>
<span style="top:136.2px;font-size:13px;line-height:17px;color:#fff;left:811px;letter-spacing:-1.031px;">US</span>
<div style="left:865px;top:130px;width:149px;height:27px;overflow:hidden;">
<span style="top:6.2px;font-size:13px;line-height:17px;color:#fff;left:2px;letter-spacing:-0.247px;">Remote_Help_AddOn</span>
</div>
<svg style="left:1017.5999999999999px;top:134.5px;" width="18" height="18" viewBox="0 0 18 18"><path d="M7.6 3.6C5.6 2.6 3.2 3.2 3.2 5C3.2 7.4 7.3 6.6 7 9" fill="none" stroke="#fff" stroke-width="3.4" stroke-linecap="round"/><path d="M7.6 3.6C5.6 2.6 3.2 3.2 3.2 5C3.2 7.4 7.3 6.6 7 9" fill="none" stroke="#575757" stroke-width="1.7" stroke-linecap="round"/><path d="M4.6 1.4L5.2 3" stroke="#575757" stroke-width="1.3"/><path d="M2.6 12L4.4 11.6L5.6 13.8" fill="none" stroke="#fff" stroke-width="2.6"/><path d="M2.6 12L4.4 11.6L5.6 13.8" fill="none" stroke="#575757" stroke-width="1.2"/><circle cx="12" cy="11.6" r="4.9" fill="#fff"/><circle cx="12" cy="11.6" r="4.05" fill="#1f7ec5"/><rect x="11.4" y="11" width="1.25" height="3.1" fill="#fff"/><circle cx="12.02" cy="9.5" r="0.8" fill="#fff"/></svg>
<div style="left:1017px;top:130px;width:62px;height:27px;overflow:hidden;">
<span style="top:6.2px;font-size:13px;line-height:17px;color:#807b76;left:24.5px;letter-spacing:-0.018px;">- Set li</span>
</div>
<div style="left:0px;top:158px;width:1080px;height:27px;background:#0078d7;"></div>
<div style="left:65px;top:185px;width:1015px;height:1px;background:#e9f1fa;"></div>
<div style="left:560px;top:158px;width:25px;height:27px;background:#6ca8da;"></div>
<div style="left:681px;top:158px;width:128px;height:27px;background:#6ca8da;"></div>
<div style="left:1017px;top:158px;width:63px;height:27px;background:#6ca8da;"></div>
<div style="left:19px;top:158px;width:1px;height:28px;background:#e9f1fa;"></div>
<div style="left:39px;top:158px;width:1px;height:28px;background:#e9f1fa;"></div>
<div style="left:495px;top:158px;width:1px;height:28px;background:#e9f1fa;"></div>
<div style="left:559px;top:158px;width:1px;height:28px;background:#e9f1fa;"></div>
<div style="left:584px;top:158px;width:1px;height:28px;background:#e9f1fa;"></div>
<div style="left:680px;top:158px;width:1px;height:28px;background:#e9f1fa;"></div>
<div style="left:808px;top:158px;width:1px;height:28px;background:#e9f1fa;"></div>
<div style="left:864px;top:158px;width:1px;height:28px;background:#e9f1fa;"></div>
<div style="left:1016px;top:158px;width:1px;height:28px;background:#e9f1fa;"></div>
<svg style="left:21px;top:163.2px;" width="18" height="18" viewBox="0 0 18 18"><path d="M1 16.2C1 13.6 3 12.3 5.6 11.6H12.4C15 12.3 17 13.6 17 16.2Z" fill="#4a8fca" stroke="#fff" stroke-width="1.3"/><circle cx="9" cy="6.4" r="5" fill="#4a8fca" stroke="#fff" stroke-width="1.3"/></svg>
<span style="top:164.2px;font-size:13px;line-height:17px;color:#fff;left:67px;letter-spacing:-0.050px;">Aden Wade</span>
<span style="top:164.2px;font-size:13px;line-height:17px;color:#fff;left:243px;letter-spacing:-0.051px;">Aden.Wade@sygx2.onmicrosoft.com</span>
<span style="top:164.2px;font-size:13px;line-height:17px;color:#fff;left:499.29999999999995px;letter-spacing:0.135px;">Member</span>
<svg style="left:566.5px;top:165.89999999999998px;" width="13" height="13" viewBox="0 0 13 13"><rect x="0.5" y="0.5" width="12" height="12" fill="#e4eef8" stroke="#b9cfe6"/><path d="M3 6.6L5.4 9.4L10 2.8" fill="none" stroke="#9aa7b5" stroke-width="1.5"/></svg>
<svg style="left:587px;top:164.2px;" width="16" height="16" viewBox="0 0 16 16"><circle cx="8" cy="8" r="7.6" fill="#fff"/><circle cx="8" cy="8" r="6.9" fill="#da5032"/><rect x="3.6" y="6.8" width="8.8" height="2.4" rx="0.4" fill="#fff"/></svg>
<span style="top:164.2px;font-size:13px;line-height:17px;color:#fff;left:605.5px;letter-spacing:-0.250px;">Blocked</span>
<svg style="left:682px;top:162.5px;" width="18" height="18" viewBox="0 0 18 18"><path d="M5.5 1.8H9.4V8.2L12.6 5.3V9.6L7.5 14.6L1.9 9V4.9L5.5 8.2Z" fill="#696969" stroke="#fff" stroke-width="1.5" paint-order="stroke"/><circle cx="13.2" cy="6" r="0.6" fill="#222"/><circle cx="12" cy="11.6" r="4.9" fill="#fff"/><circle cx="12" cy="11.6" r="4.05" fill="#1f7ec5"/><rect x="11.4" y="11" width="1.25" height="3.1" fill="#fff"/><circle cx="12.02" cy="9.5" r="0.8" fill="#fff"/></svg>
<div style="left:681px;top:158px;width:127px;height:27px;overflow:hidden;">
<span style="top:6.2px;font-size:13px;line-height:17px;color:#807b76;left:24px;letter-spacing:0.134px;">- Use the 'Additio</span>
</div>
<span style="top:164.2px;font-size:13px;line-height:17px;color:#fff;left:811px;letter-spacing:-1.031px;">US</span>
<div style="left:865px;top:158px;width:149px;height:27px;overflow:hidden;">
<span style="top:6.2px;font-size:13px;line-height:17px;color:#fff;left:2px;letter-spacing:-0.247px;">Remote_Help_AddOn</span>
</div>
<svg style="left:1017.5999999999999px;top:162.5px;" width="18" height="18" viewBox="0 0 18 18"><path d="M7.6 3.6C5.6 2.6 3.2 3.2 3.2 5C3.2 7.4 7.3 6.6 7 9" fill="none" stroke="#fff" stroke-width="3.4" stroke-linecap="round"/><path d="M7.6 3.6C5.6 2.6 3.2 3.2 3.2 5C3.2 7.4 7.3 6.6 7 9" fill="none" stroke="#575757" stroke-width="1.7" stroke-linecap="round"/><path d="M4.6 1.4L5.2 3" stroke="#575757" stroke-width="1.3"/><path d="M2.6 12L4.4 11.6L5.6 13.8" fill="none" stroke="#fff" stroke-width="2.6"/><path d="M2.6 12L4.4 11.6L5.6 13.8" fill="none" stroke="#575757" stroke-width="1.2"/><circle cx="12" cy="11.6" r="4.9" fill="#fff"/><circle cx="12" cy="11.6" r="4.05" fill="#1f7ec5"/><rect x="11.4" y="11" width="1.25" height="3.1" fill="#fff"/><circle cx="12.02" cy="9.5" r="0.8" fill="#fff"/></svg>
<div style="left:1017px;top:158px;width:62px;height:27px;overflow:hidden;">
<span style="top:6.2px;font-size:13px;line-height:17px;color:#807b76;left:24.5px;letter-spacing:-0.018px;">- Set li</span>
</div>
<div style="left:0px;top:186px;width:1080px;height:27px;background:#0078d7;"></div>
<div style="left:65px;top:213px;width:1015px;height:1px;background:#e9f1fa;"></div>
<div style="left:560px;top:186px;width:25px;height:27px;background:#6ca8da;"></div>
<div style="left:681px;top:186px;width:128px;height:27px;background:#6ca8da;"></div>
<div style="left:1017px;top:186px;width:63px;height:27px;background:#6ca8da;"></div>
<div style="left:19px;top:186px;width:1px;height:28px;background:#e9f1fa;"></div>
<div style="left:39px;top:186px;width:1px;height:28px;background:#e9f1fa;"></div>
<div style="left:495px;top:186px;width:1px;height:28px;background:#e9f1fa;"></div>
<div style="left:559px;top:186px;width:1px;height:28px;background:#e9f1fa;"></div>
<div style="left:584px;top:186px;width:1px;height:28px;background:#e9f1fa;"></div>
<div style="left:680px;top:186px;width:1px;height:28px;background:#e9f1fa;"></div>
<div style="left:808px;top:186px;width:1px;height:28px;background:#e9f1fa;"></div>
<div style="left:864px;top:186px;width:1px;height:28px;background:#e9f1fa;"></div>
<div style="left:1016px;top:186px;width:1px;height:28px;background:#e9f1fa;"></div>
<svg style="left:21px;top:191.2px;" width="18" height="18" viewBox="0 0 18 18"><path d="M1 16.2C1 13.6 3 12.3 5.6 11.6H12.4C15 12.3 17 13.6 17 16.2Z" fill="#4a8fca" stroke="#fff" stroke-width="1.3"/><circle cx="9" cy="6.4" r="5" fill="#4a8fca" stroke="#fff" stroke-width="1.3"/></svg>
<span style="top:192.2px;font-size:13px;line-height:17px;color:#fff;left:67px;letter-spacing:0.248px;">Adriana Morris</span>
<span style="top:192.2px;font-size:13px;line-height:17px;color:#fff;left:243px;letter-spacing:0.065px;">Adriana.Morris@sygx2.onmicrosoft.com</span>
<span style="top:192.2px;font-size:13px;line-height:17px;color:#fff;left:499.29999999999995px;letter-spacing:0.135px;">Member</span>
<svg style="left:566.5px;top:193.89999999999998px;" width="13" height="13" viewBox="0 0 13 13"><rect x="0.5" y="0.5" width="12" height="12" fill="#e4eef8" stroke="#b9cfe6"/><path d="M3 6.6L5.4 9.4L10 2.8" fill="none" stroke="#9aa7b5" stroke-width="1.5"/></svg>
<svg style="left:587px;top:192.2px;" width="16" height="16" viewBox="0 0 16 16"><circle cx="8" cy="8" r="7.6" fill="#fff"/><circle cx="8" cy="8" r="6.9" fill="#da5032"/><rect x="3.6" y="6.8" width="8.8" height="2.4" rx="0.4" fill="#fff"/></svg>
<span style="top:192.2px;font-size:13px;line-height:17px;color:#fff;left:605.5px;letter-spacing:-0.250px;">Blocked</span>
<svg style="left:682px;top:190.5px;" width="18" height="18" viewBox="0 0 18 18"><path d="M5.5 1.8H9.4V8.2L12.6 5.3V9.6L7.5 14.6L1.9 9V4.9L5.5 8.2Z" fill="#696969" stroke="#fff" stroke-width="1.5" paint-order="stroke"/><circle cx="13.2" cy="6" r="0.6" fill="#222"/><circle cx="12" cy="11.6" r="4.9" fill="#fff"/><circle cx="12" cy="11.6" r="4.05" fill="#1f7ec5"/><rect x="11.4" y="11" width="1.25" height="3.1" fill="#fff"/><circle cx="12.02" cy="9.5" r="0.8" fill="#fff"/></svg>
<div style="left:681px;top:186px;width:127px;height:27px;overflow:hidden;">
<span style="top:6.2px;font-size:13px;line-height:17px;color:#807b76;left:24px;letter-spacing:0.134px;">- Use the 'Additio</span>
</div>
<span style="top:192.2px;font-size:13px;line-height:17px;color:#fff;left:811px;letter-spacing:-1.031px;">US</span>
<div style="left:865px;top:186px;width:149px;height:27px;overflow:hidden;">
<span style="top:6.2px;font-size:13px;line-height:17px;color:#fff;left:2px;letter-spacing:-0.247px;">Remote_Help_AddOn</span>
</div>
<svg style="left:1017.5999999999999px;top:190.5px;" width="18" height="18" viewBox="0 0 18 18"><path d="M7.6 3.6C5.6 2.6 3.2 3.2 3.2 5C3.2 7.4 7.3 6.6 7 9" fill="none" stroke="#fff" stroke-width="3.4" stroke-linecap="round"/><path d="M7.6 3.6C5.6 2.6 3.2 3.2 3.2 5C3.2 7.4 7.3 6.6 7 9" fill="none" stroke="#575757" stroke-width="1.7" stroke-linecap="round"/><path d="M4.6 1.4L5.2 3" stroke="#575757" stroke-width="1.3"/><path d="M2.6 12L4.4 11.6L5.6 13.8" fill="none" stroke="#fff" stroke-width="2.6"/><path d="M2.6 12L4.4 11.6L5.6 13.8" fill="none" stroke="#575757" stroke-width="1.2"/><circle cx="12" cy="11.6" r="4.9" fill="#fff"/><circle cx="12" cy="11.6" r="4.05" fill="#1f7ec5"/><rect x="11.4" y="11" width="1.25" height="3.1" fill="#fff"/><circle cx="12.02" cy="9.5" r="0.8" fill="#fff"/></svg>
<div style="left:1017px;top:186px;width:62px;height:27px;overflow:hidden;">
<span style="top:6.2px;font-size:13px;line-height:17px;color:#807b76;left:24.5px;letter-spacing:-0.018px;">- Set li</span>
</div>
<div style="left:0px;top:214px;width:1080px;height:27px;background:#0078d7;"></div>
<div style="left:65px;top:241px;width:1015px;height:1px;background:#e9f1fa;"></div>
<div style="left:560px;top:214px;width:25px;height:27px;background:#6ca8da;"></div>
<div style="left:681px;top:214px;width:128px;height:27px;background:#6ca8da;"></div>
<div style="left:1017px;top:214px;width:63px;height:27px;background:#6ca8da;"></div>
<div style="left:19px;top:214px;width:1px;height:28px;background:#e9f1fa;"></div>
<div style="left:39px;top:214px;width:1px;height:28px;background:#e9f1fa;"></div>
<div style="left:495px;top:214px;width:1px;height:28px;background:#e9f1fa;"></div>
<div style="left:559px;top:214px;width:1px;height:28px;background:#e9f1fa;"></div>
<div style="left:584px;top:214px;width:1px;height:28px;background:#e9f1fa;"></div>
<div style="left:680px;top:214px;width:1px;height:28px;background:#e9f1fa;"></div>
<div style="left:808px;top:214px;width:1px;height:28px;background:#e9f1fa;"></div>
<div style="left:864px;top:214px;width:1px;height:28px;background:#e9f1fa;"></div>
<div style="left:1016px;top:214px;width:1px;height:28px;background:#e9f1fa;"></div>
<svg style="left:21px;top:219.2px;" width="18" height="18" viewBox="0 0 18 18"><path d="M1 16.2C1 13.6 3 12.3 5.6 11.6H12.4C15 12.3 17 13.6 17 16.2Z" fill="#4a8fca" stroke="#fff" stroke-width="1.3"/><circle cx="9" cy="6.4" r="5" fill="#4a8fca" stroke="#fff" stroke-width="1.3"/></svg>
<span style="top:220.2px;font-size:13px;line-height:17px;color:#fff;left:67px;letter-spacing:-0.040px;">Allan Anthony</span>
<span style="top:220.2px;font-size:13px;line-height:17px;color:#fff;left:243px;letter-spacing:-0.039px;">Allan.Anthony@sygx2.onmicrosoft.com</span>
<span style="top:220.2px;font-size:13px;line-height:17px;color:#fff;left:499.29999999999995px;letter-spacing:0.135px;">Member</span>
<svg style="left:566.5px;top:221.89999999999998px;" width="13" height="13" viewBox="0 0 13 13"><rect x="0.5" y="0.5" width="12" height="12" fill="#e4eef8" stroke="#b9cfe6"/><path d="M3 6.6L5.4 9.4L10 2.8" fill="none" stroke="#9aa7b5" stroke-width="1.5"/></svg>
<svg style="left:587px;top:220.2px;" width="16" height="16" viewBox="0 0 16 16"><circle cx="8" cy="8" r="7.6" fill="#fff"/><circle cx="8" cy="8" r="6.9" fill="#da5032"/><rect x="3.6" y="6.8" width="8.8" height="2.4" rx="0.4" fill="#fff"/></svg>
<span style="top:220.2px;font-size:13px;line-height:17px;color:#fff;left:605.5px;letter-spacing:-0.250px;">Blocked</span>
<svg style="left:682px;top:218.5px;" width="18" height="18" viewBox="0 0 18 18"><path d="M5.5 1.8H9.4V8.2L12.6 5.3V9.6L7.5 14.6L1.9 9V4.9L5.5 8.2Z" fill="#696969" stroke="#fff" stroke-width="1.5" paint-order="stroke"/><circle cx="13.2" cy="6" r="0.6" fill="#222"/><circle cx="12" cy="11.6" r="4.9" fill="#fff"/><circle cx="12" cy="11.6" r="4.05" fill="#1f7ec5"/><rect x="11.4" y="11" width="1.25" height="3.1" fill="#fff"/><circle cx="12.02" cy="9.5" r="0.8" fill="#fff"/></svg>
<div style="left:681px;top:214px;width:127px;height:27px;overflow:hidden;">
<span style="top:6.2px;font-size:13px;line-height:17px;color:#807b76;left:24px;letter-spacing:0.134px;">- Use the 'Additio</span>
</div>
<span style="top:220.2px;font-size:13px;line-height:17px;color:#fff;left:811px;letter-spacing:-1.031px;">US</span>
<div style="left:865px;top:214px;width:149px;height:27px;overflow:hidden;">
<span style="top:6.2px;font-size:13px;line-height:17px;color:#fff;left:2px;letter-spacing:-0.247px;">Remote_Help_AddOn</span>
</div>
<svg style="left:1017.5999999999999px;top:218.5px;" width="18" height="18" viewBox="0 0 18 18"><path d="M7.6 3.6C5.6 2.6 3.2 3.2 3.2 5C3.2 7.4 7.3 6.6 7 9" fill="none" stroke="#fff" stroke-width="3.4" stroke-linecap="round"/><path d="M7.6 3.6C5.6 2.6 3.2 3.2 3.2 5C3.2 7.4 7.3 6.6 7 9" fill="none" stroke="#575757" stroke-width="1.7" stroke-linecap="round"/><path d="M4.6 1.4L5.2 3" stroke="#575757" stroke-width="1.3"/><path d="M2.6 12L4.4 11.6L5.6 13.8" fill="none" stroke="#fff" stroke-width="2.6"/><path d="M2.6 12L4.4 11.6L5.6 13.8" fill="none" stroke="#575757" stroke-width="1.2"/><circle cx="12" cy="11.6" r="4.9" fill="#fff"/><circle cx="12" cy="11.6" r="4.05" fill="#1f7ec5"/><rect x="11.4" y="11" width="1.25" height="3.1" fill="#fff"/><circle cx="12.02" cy="9.5" r="0.8" fill="#fff"/></svg>
<div style="left:1017px;top:214px;width:62px;height:27px;overflow:hidden;">
<span style="top:6.2px;font-size:13px;line-height:17px;color:#807b76;left:24.5px;letter-spacing:-0.018px;">- Set li</span>
</div>
<div style="left:0px;top:242px;width:1080px;height:27px;background:#0078d7;"></div>
<div style="left:65px;top:269px;width:1015px;height:1px;background:#e9f1fa;"></div>
<div style="left:560px;top:242px;width:25px;height:27px;background:#6ca8da;"></div>
<div style="left:681px;top:242px;width:128px;height:27px;background:#6ca8da;"></div>
<div style="left:1017px;top:242px;width:63px;height:27px;background:#6ca8da;"></div>
<div style="left:19px;top:242px;width:1px;height:28px;background:#e9f1fa;"></div>
<div style="left:39px;top:242px;width:1px;height:28px;background:#e9f1fa;"></div>
<div style="left:495px;top:242px;width:1px;height:28px;background:#e9f1fa;"></div>
<div style="left:559px;top:242px;width:1px;height:28px;background:#e9f1fa;"></div>
<div style="left:584px;top:242px;width:1px;height:28px;background:#e9f1fa;"></div>
<div style="left:680px;top:242px;width:1px;height:28px;background:#e9f1fa;"></div>
<div style="left:808px;top:242px;width:1px;height:28px;background:#e9f1fa;"></div>
<div style="left:864px;top:242px;width:1px;height:28px;background:#e9f1fa;"></div>
<div style="left:1016px;top:242px;width:1px;height:28px;background:#e9f1fa;"></div>
<svg style="left:21px;top:247.2px;" width="18" height="18" viewBox="0 0 18 18"><path d="M1 16.2C1 13.6 3 12.3 5.6 11.6H12.4C15 12.3 17 13.6 17 16.2Z" fill="#4a8fca" stroke="#fff" stroke-width="1.3"/><circle cx="9" cy="6.4" r="5" fill="#4a8fca" stroke="#fff" stroke-width="1.3"/></svg>
<span style="top:248.2px;font-size:13px;line-height:17px;color:#fff;left:67px;letter-spacing:-0.071px;">Amaya Campbell</span>
<span style="top:248.2px;font-size:13px;line-height:17px;color:#fff;left:243px;letter-spacing:-0.059px;">Amaya.Campbell@sygx2.onmicrosoft.com</span>
<span style="top:248.2px;font-size:13px;line-height:17px;color:#fff;left:499.29999999999995px;letter-spacing:0.135px;">Member</span>
<svg style="left:587px;top:248.2px;" width="16" height="16" viewBox="0 0 16 16"><circle cx="8" cy="8" r="7.6" fill="#fff"/><circle cx="8" cy="8" r="6.9" fill="#da5032"/><rect x="3.6" y="6.8" width="8.8" height="2.4" rx="0.4" fill="#fff"/></svg>
<span style="top:248.2px;font-size:13px;line-height:17px;color:#fff;left:605.5px;letter-spacing:-0.250px;">Blocked</span>
<svg style="left:682px;top:246.5px;" width="18" height="18" viewBox="0 0 18 18"><path d="M5.5 1.8H9.4V8.2L12.6 5.3V9.6L7.5 14.6L1.9 9V4.9L5.5 8.2Z" fill="#696969" stroke="#fff" stroke-width="1.5" paint-order="stroke"/><circle cx="13.2" cy="6" r="0.6" fill="#222"/><circle cx="12" cy="11.6" r="4.9" fill="#fff"/><circle cx="12" cy="11.6" r="4.05" fill="#1f7ec5"/><rect x="11.4" y="11" width="1.25" height="3.1" fill="#fff"/><circle cx="12.02" cy="9.5" r="0.8" fill="#fff"/></svg>
<div style="left:681px;top:242px;width:127px;height:27px;overflow:hidden;">
<span style="top:6.2px;font-size:13px;line-height:17px;color:#807b76;left:24px;letter-spacing:0.134px;">- Use the 'Additio</span>
</div>
<span style="top:248.2px;font-size:13px;line-height:17px;color:#fff;left:811px;letter-spacing:-1.031px;">US</span>
<div style="left:865px;top:242px;width:149px;height:27px;overflow:hidden;">
<span style="top:6.2px;font-size:13px;line-height:17px;color:#fff;left:2px;letter-spacing:-0.247px;">Remote_Help_AddOn</span>
</div>
<svg style="left:1017.5999999999999px;top:246.5px;" width="18" height="18" viewBox="0 0 18 18"><path d="M7.6 3.6C5.6 2.6 3.2 3.2 3.2 5C3.2 7.4 7.3 6.6 7 9" fill="none" stroke="#fff" stroke-width="3.4" stroke-linecap="round"/><path d="M7.6 3.6C5.6 2.6 3.2 3.2 3.2 5C3.2 7.4 7.3 6.6 7 9" fill="none" stroke="#575757" stroke-width="1.7" stroke-linecap="round"/><path d="M4.6 1.4L5.2 3" stroke="#575757" stroke-width="1.3"/><path d="M2.6 12L4.4 11.6L5.6 13.8" fill="none" stroke="#fff" stroke-width="2.6"/><path d="M2.6 12L4.4 11.6L5.6 13.8" fill="none" stroke="#575757" stroke-width="1.2"/><circle cx="12" cy="11.6" r="4.9" fill="#fff"/><circle cx="12" cy="11.6" r="4.05" fill="#1f7ec5"/><rect x="11.4" y="11" width="1.25" height="3.1" fill="#fff"/><circle cx="12.02" cy="9.5" r="0.8" fill="#fff"/></svg>
<div style="left:1017px;top:242px;width:62px;height:27px;overflow:hidden;">
<span style="top:6.2px;font-size:13px;line-height:17px;color:#807b76;left:24.5px;letter-spacing:-0.018px;">- Set li</span>
</div>
<div style="left:0px;top:270px;width:1080px;height:27px;background:#0078d7;"></div>
<div style="left:65px;top:297px;width:1015px;height:1px;background:#e9f1fa;"></div>
<div style="left:560px;top:270px;width:25px;height:27px;background:#6ca8da;"></div>
<div style="left:681px;top:270px;width:128px;height:27px;background:#6ca8da;"></div>
<div style="left:1017px;top:270px;width:63px;height:27px;background:#6ca8da;"></div>
<div style="left:19px;top:270px;width:1px;height:28px;background:#e9f1fa;"></div>
<div style="left:39px;top:270px;width:1px;height:28px;background:#e9f1fa;"></div>
<div style="left:495px;top:270px;width:1px;height:28px;background:#e9f1fa;"></div>
<div style="left:559px;top:270px;width:1px;height:28px;background:#e9f1fa;"></div>
<div style="left:584px;top:270px;width:1px;height:28px;background:#e9f1fa;"></div>
<div style="left:680px;top:270px;width:1px;height:28px;background:#e9f1fa;"></div>
<div style="left:808px;top:270px;width:1px;height:28px;background:#e9f1fa;"></div>
<div style="left:864px;top:270px;width:1px;height:28px;background:#e9f1fa;"></div>
<div style="left:1016px;top:270px;width:1px;height:28px;background:#e9f1fa;"></div>
<svg style="left:21px;top:275.2px;" width="18" height="18" viewBox="0 0 18 18"><path d="M1 16.2C1 13.6 3 12.3 5.6 11.6H12.4C15 12.3 17 13.6 17 16.2Z" fill="#4a8fca" stroke="#fff" stroke-width="1.3"/><circle cx="9" cy="6.4" r="5" fill="#4a8fca" stroke="#fff" stroke-width="1.3"/></svg>
<span style="top:276.2px;font-size:13px;line-height:17px;color:#fff;left:67px;letter-spacing:-0.086px;">Amy-Coco</span>
<span style="top:276.2px;font-size:13px;line-height:17px;color:#fff;left:243px;letter-spacing:-0.070px;">Coco.Amy@sygx2.onmicrosoft.com</span>
<span style="top:276.2px;font-size:13px;line-height:17px;color:#fff;left:499.29999999999995px;letter-spacing:0.135px;">Member</span>
<svg style="left:566.5px;top:277.9px;" width="13" height="13" viewBox="0 0 13 13"><rect x="0.5" y="0.5" width="12" height="12" fill="#e4eef8" stroke="#b9cfe6"/><path d="M3 6.6L5.4 9.4L10 2.8" fill="none" stroke="#9aa7b5" stroke-width="1.5"/></svg>
<svg style="left:587px;top:276.2px;" width="16" height="16" viewBox="0 0 16 16"><circle cx="8" cy="8" r="7.6" fill="#fff"/><circle cx="8" cy="8" r="6.9" fill="#da5032"/><rect x="3.6" y="6.8" width="8.8" height="2.4" rx="0.4" fill="#fff"/></svg>
<span style="top:276.2px;font-size:13px;line-height:17px;color:#fff;left:605.5px;letter-spacing:-0.250px;">Blocked</span>
<svg style="left:682px;top:274.5px;" width="18" height="18" viewBox="0 0 18 18"><path d="M5.5 1.8H9.4V8.2L12.6 5.3V9.6L7.5 14.6L1.9 9V4.9L5.5 8.2Z" fill="#696969" stroke="#fff" stroke-width="1.5" paint-order="stroke"/><circle cx="13.2" cy="6" r="0.6" fill="#222"/><circle cx="12" cy="11.6" r="4.9" fill="#fff"/><circle cx="12" cy="11.6" r="4.05" fill="#1f7ec5"/><rect x="11.4" y="11" width="1.25" height="3.1" fill="#fff"/><circle cx="12.02" cy="9.5" r="0.8" fill="#fff"/></svg>
<div style="left:681px;top:270px;width:127px;height:27px;overflow:hidden;">
<span style="top:6.2px;font-size:13px;line-height:17px;color:#807b76;left:24px;letter-spacing:0.134px;">- Use the 'Additio</span>
</div>
<span style="top:276.2px;font-size:13px;line-height:17px;color:#fff;left:811px;letter-spacing:-1.031px;">US</span>
<div style="left:865px;top:270px;width:149px;height:27px;overflow:hidden;">
<span style="top:6.2px;font-size:13px;line-height:17px;color:#fff;left:2px;letter-spacing:-0.247px;">Remote_Help_AddOn</span>
</div>
<svg style="left:1017.5999999999999px;top:274.5px;" width="18" height="18" viewBox="0 0 18 18"><path d="M7.6 3.6C5.6 2.6 3.2 3.2 3.2 5C3.2 7.4 7.3 6.6 7 9" fill="none" stroke="#fff" stroke-width="3.4" stroke-linecap="round"/><path d="M7.6 3.6C5.6 2.6 3.2 3.2 3.2 5C3.2 7.4 7.3 6.6 7 9" fill="none" stroke="#575757" stroke-width="1.7" stroke-linecap="round"/><path d="M4.6 1.4L5.2 3" stroke="#575757" stroke-width="1.3"/><path d="M2.6 12L4.4 11.6L5.6 13.8" fill="none" stroke="#fff" stroke-width="2.6"/><path d="M2.6 12L4.4 11.6L5.6 13.8" fill="none" stroke="#575757" stroke-width="1.2"/><circle cx="12" cy="11.6" r="4.9" fill="#fff"/><circle cx="12" cy="11.6" r="4.05" fill="#1f7ec5"/><rect x="11.4" y="11" width="1.25" height="3.1" fill="#fff"/><circle cx="12.02" cy="9.5" r="0.8" fill="#fff"/></svg>
<div style="left:1017px;top:270px;width:62px;height:27px;overflow:hidden;">
<span style="top:6.2px;font-size:13px;line-height:17px;color:#807b76;left:24.5px;letter-spacing:-0.018px;">- Set li</span>
</div>
<div style="left:0px;top:298px;width:1080px;height:27px;background:#0078d7;"></div>
<div style="left:65px;top:325px;width:1015px;height:1px;background:#e9f1fa;"></div>
<div style="left:560px;top:298px;width:25px;height:27px;background:#6ca8da;"></div>
<div style="left:681px;top:298px;width:128px;height:27px;background:#6ca8da;"></div>
<div style="left:1017px;top:298px;width:63px;height:27px;background:#6ca8da;"></div>
<div style="left:19px;top:298px;width:1px;height:28px;background:#e9f1fa;"></div>
<div style="left:39px;top:298px;width:1px;height:28px;background:#e9f1fa;"></div>
<div style="left:495px;top:298px;width:1px;height:28px;background:#e9f1fa;"></div>
<div style="left:559px;top:298px;width:1px;height:28px;background:#e9f1fa;"></div>
<div style="left:584px;top:298px;width:1px;height:28px;background:#e9f1fa;"></div>
<div style="left:680px;top:298px;width:1px;height:28px;background:#e9f1fa;"></div>
<div style="left:808px;top:298px;width:1px;height:28px;background:#e9f1fa;"></div>
<div style="left:864px;top:298px;width:1px;height:28px;background:#e9f1fa;"></div>
<div style="left:1016px;top:298px;width:1px;height:28px;background:#e9f1fa;"></div>
<svg style="left:21px;top:303.2px;" width="18" height="18" viewBox="0 0 18 18"><path d="M1 16.2C1 13.6 3 12.3 5.6 11.6H12.4C15 12.3 17 13.6 17 16.2Z" fill="#4a8fca" stroke="#fff" stroke-width="1.3"/><circle cx="9" cy="6.4" r="5" fill="#4a8fca" stroke="#fff" stroke-width="1.3"/></svg>
<span style="top:304.2px;font-size:13px;line-height:17px;color:#fff;left:67px;letter-spacing:-0.182px;">Anahi Fry</span>
<span style="top:304.2px;font-size:13px;line-height:17px;color:#fff;left:243px;letter-spacing:-0.121px;">Anahi.Fry@sygx2.onmicrosoft.com</span>
<span style="top:304.2px;font-size:13px;line-height:17px;color:#fff;left:499.29999999999995px;letter-spacing:0.135px;">Member</span>
<svg style="left:566.5px;top:305.9px;" width="13" height="13" viewBox="0 0 13 13"><rect x="0.5" y="0.5" width="12" height="12" fill="#e4eef8" stroke="#b9cfe6"/><path d="M3 6.6L5.4 9.4L10 2.8" fill="none" stroke="#9aa7b5" stroke-width="1.5"/></svg>
<svg style="left:587px;top:304.2px;" width="16" height="16" viewBox="0 0 16 16"><circle cx="8" cy="8" r="7.6" fill="#fff"/><circle cx="8" cy="8" r="6.9" fill="#da5032"/><rect x="3.6" y="6.8" width="8.8" height="2.4" rx="0.4" fill="#fff"/></svg>
<span style="top:304.2px;font-size:13px;line-height:17px;color:#fff;left:605.5px;letter-spacing:-0.250px;">Blocked</span>
<svg style="left:682px;top:302.5px;" width="18" height="18" viewBox="0 0 18 18"><path d="M5.5 1.8H9.4V8.2L12.6 5.3V9.6L7.5 14.6L1.9 9V4.9L5.5 8.2Z" fill="#696969" stroke="#fff" stroke-width="1.5" paint-order="stroke"/><circle cx="13.2" cy="6" r="0.6" fill="#222"/><circle cx="12" cy="11.6" r="4.9" fill="#fff"/><circle cx="12" cy="11.6" r="4.05" fill="#1f7ec5"/><rect x="11.4" y="11" width="1.25" height="3.1" fill="#fff"/><circle cx="12.02" cy="9.5" r="0.8" fill="#fff"/></svg>
<div style="left:681px;top:298px;width:127px;height:27px;overflow:hidden;">
<span style="top:6.2px;font-size:13px;line-height:17px;color:#807b76;left:24px;letter-spacing:0.134px;">- Use the 'Additio</span>
</div>
<span style="top:304.2px;font-size:13px;line-height:17px;color:#fff;left:811px;letter-spacing:-1.031px;">US</span>
<div style="left:865px;top:298px;width:149px;height:27px;overflow:hidden;">
<span style="top:6.2px;font-size:13px;line-height:17px;color:#fff;left:2px;letter-spacing:-0.247px;">Remote_Help_AddOn</span>
</div>
<svg style="left:1017.5999999999999px;top:302.5px;" width="18" height="18" viewBox="0 0 18 18"><path d="M7.6 3.6C5.6 2.6 3.2 3.2 3.2 5C3.2 7.4 7.3 6.6 7 9" fill="none" stroke="#fff" stroke-width="3.4" stroke-linecap="round"/><path d="M7.6 3.6C5.6 2.6 3.2 3.2 3.2 5C3.2 7.4 7.3 6.6 7 9" fill="none" stroke="#575757" stroke-width="1.7" stroke-linecap="round"/><path d="M4.6 1.4L5.2 3" stroke="#575757" stroke-width="1.3"/><path d="M2.6 12L4.4 11.6L5.6 13.8" fill="none" stroke="#fff" stroke-width="2.6"/><path d="M2.6 12L4.4 11.6L5.6 13.8" fill="none" stroke="#575757" stroke-width="1.2"/><circle cx="12" cy="11.6" r="4.9" fill="#fff"/><circle cx="12" cy="11.6" r="4.05" fill="#1f7ec5"/><rect x="11.4" y="11" width="1.25" height="3.1" fill="#fff"/><circle cx="12.02" cy="9.5" r="0.8" fill="#fff"/></svg>
<div style="left:1017px;top:298px;width:62px;height:27px;overflow:hidden;">
<span style="top:6.2px;font-size:13px;line-height:17px;color:#807b76;left:24.5px;letter-spacing:-0.018px;">- Set li</span>
</div>
<div style="left:0px;top:326px;width:1080px;height:27px;background:#0078d7;"></div>
<div style="left:65px;top:353px;width:1015px;height:1px;background:#e9f1fa;"></div>
<div style="left:560px;top:326px;width:25px;height:27px;background:#6ca8da;"></div>
<div style="left:681px;top:326px;width:128px;height:27px;background:#6ca8da;"></div>
<div style="left:1017px;top:326px;width:63px;height:27px;background:#6ca8da;"></div>
<div style="left:19px;top:326px;width:1px;height:28px;background:#e9f1fa;"></div>
<div style="left:39px;top:326px;width:1px;height:28px;background:#e9f1fa;"></div>
<div style="left:495px;top:326px;width:1px;height:28px;background:#e9f1fa;"></div>
<div style="left:559px;top:326px;width:1px;height:28px;background:#e9f1fa;"></div>
<div style="left:584px;top:326px;width:1px;height:28px;background:#e9f1fa;"></div>
<div style="left:680px;top:326px;width:1px;height:28px;background:#e9f1fa;"></div>
<div style="left:808px;top:326px;width:1px;height:28px;background:#e9f1fa;"></div>
<div style="left:864px;top:326px;width:1px;height:28px;background:#e9f1fa;"></div>
<div style="left:1016px;top:326px;width:1px;height:28px;background:#e9f1fa;"></div>
<svg style="left:21px;top:331.20000000000005px;" width="18" height="18" viewBox="0 0 18 18"><path d="M1 16.2C1 13.6 3 12.3 5.6 11.6H12.4C15 12.3 17 13.6 17 16.2Z" fill="#4a8fca" stroke="#fff" stroke-width="1.3"/><circle cx="9" cy="6.4" r="5" fill="#4a8fca" stroke="#fff" stroke-width="1.3"/></svg>
<span style="top:332.2px;font-size:13px;line-height:17px;color:#fff;left:67px;letter-spacing:-0.196px;">Anastasia Frank</span>
<span style="top:332.2px;font-size:13px;line-height:17px;color:#fff;left:243px;letter-spacing:-0.137px;">Anastasia.Frank@sygx2.onmicrosoft.com</span>
<span style="top:332.2px;font-size:13px;line-height:17px;color:#fff;left:499.29999999999995px;letter-spacing:0.135px;">Member</span>
<svg style="left:566.5px;top:333.9000000000001px;" width="13" height="13" viewBox="0 0 13 13"><rect x="0.5" y="0.5" width="12" height="12" fill="#e4eef8" stroke="#b9cfe6"/><path d="M3 6.6L5.4 9.4L10 2.8" fill="none" stroke="#9aa7b5" stroke-width="1.5"/></svg>
<svg style="left:587px;top:332.20000000000005px;" width="16" height="16" viewBox="0 0 16 16"><circle cx="8" cy="8" r="7.6" fill="#fff"/><circle cx="8" cy="8" r="6.9" fill="#da5032"/><rect x="3.6" y="6.8" width="8.8" height="2.4" rx="0.4" fill="#fff"/></svg>
<span style="top:332.2px;font-size:13px;line-height:17px;color:#fff;left:605.5px;letter-spacing:-0.250px;">Blocked</span>
<svg style="left:682px;top:330.5px;" width="18" height="18" viewBox="0 0 18 18"><path d="M5.5 1.8H9.4V8.2L12.6 5.3V9.6L7.5 14.6L1.9 9V4.9L5.5 8.2Z" fill="#696969" stroke="#fff" stroke-width="1.5" paint-order="stroke"/><circle cx="13.2" cy="6" r="0.6" fill="#222"/><circle cx="12" cy="11.6" r="4.9" fill="#fff"/><circle cx="12" cy="11.6" r="4.05" fill="#1f7ec5"/><rect x="11.4" y="11" width="1.25" height="3.1" fill="#fff"/><circle cx="12.02" cy="9.5" r="0.8" fill="#fff"/></svg>
<div style="left:681px;top:326px;width:127px;height:27px;overflow:hidden;">
<span style="top:6.2px;font-size:13px;line-height:17px;color:#807b76;left:24px;letter-spacing:0.134px;">- Use the 'Additio</span>
</div>
<span style="top:332.2px;font-size:13px;line-height:17px;color:#fff;left:811px;letter-spacing:-1.031px;">US</span>
<div style="left:865px;top:326px;width:149px;height:27px;overflow:hidden;">
<span style="top:6.2px;font-size:13px;line-height:17px;color:#fff;left:2px;letter-spacing:-0.247px;">Remote_Help_AddOn</span>
</div>
<svg style="left:1017.5999999999999px;top:330.5px;" width="18" height="18" viewBox="0 0 18 18"><path d="M7.6 3.6C5.6 2.6 3.2 3.2 3.2 5C3.2 7.4 7.3 6.6 7 9" fill="none" stroke="#fff" stroke-width="3.4" stroke-linecap="round"/><path d="M7.6 3.6C5.6 2.6 3.2 3.2 3.2 5C3.2 7.4 7.3 6.6 7 9" fill="none" stroke="#575757" stroke-width="1.7" stroke-linecap="round"/><path d="M4.6 1.4L5.2 3" stroke="#575757" stroke-width="1.3"/><path d="M2.6 12L4.4 11.6L5.6 13.8" fill="none" stroke="#fff" stroke-width="2.6"/><path d="M2.6 12L4.4 11.6L5.6 13.8" fill="none" stroke="#575757" stroke-width="1.2"/><circle cx="12" cy="11.6" r="4.9" fill="#fff"/><circle cx="12" cy="11.6" r="4.05" fill="#1f7ec5"/><rect x="11.4" y="11" width="1.25" height="3.1" fill="#fff"/><circle cx="12.02" cy="9.5" r="0.8" fill="#fff"/></svg>
<div style="left:1017px;top:326px;width:62px;height:27px;overflow:hidden;">
<span style="top:6.2px;font-size:13px;line-height:17px;color:#807b76;left:24.5px;letter-spacing:-0.018px;">- Set li</span>
</div>
<div style="left:0px;top:354px;width:1080px;height:27px;background:#0078d7;"></div>
<div style="left:65px;top:381px;width:1015px;height:1px;background:#e9f1fa;"></div>
<div style="left:560px;top:354px;width:25px;height:27px;background:#6ca8da;"></div>
<div style="left:681px;top:354px;width:128px;height:27px;background:#6ca8da;"></div>
<div style="left:1017px;top:354px;width:63px;height:27px;background:#6ca8da;"></div>
<div style="left:19px;top:354px;width:1px;height:28px;background:#e9f1fa;"></div>
<div style="left:39px;top:354px;width:1px;height:28px;background:#e9f1fa;"></div>
<div style="left:495px;top:354px;width:1px;height:28px;background:#e9f1fa;"></div>
<div style="left:559px;top:354px;width:1px;height:28px;background:#e9f1fa;"></div>
<div style="left:584px;top:354px;width:1px;height:28px;background:#e9f1fa;"></div>
<div style="left:680px;top:354px;width:1px;height:28px;background:#e9f1fa;"></div>
<div style="left:808px;top:354px;width:1px;height:28px;background:#e9f1fa;"></div>
<div style="left:864px;top:354px;width:1px;height:28px;background:#e9f1fa;"></div>
<div style="left:1016px;top:354px;width:1px;height:28px;background:#e9f1fa;"></div>
<svg style="left:21px;top:359.20000000000005px;" width="18" height="18" viewBox="0 0 18 18"><path d="M1 16.2C1 13.6 3 12.3 5.6 11.6H12.4C15 12.3 17 13.6 17 16.2Z" fill="#4a8fca" stroke="#fff" stroke-width="1.3"/><circle cx="9" cy="6.4" r="5" fill="#4a8fca" stroke="#fff" stroke-width="1.3"/></svg>
<span style="top:360.2px;font-size:13px;line-height:17px;color:#fff;left:67px;letter-spacing:0.026px;">Arlo Gonzalez</span>
<span style="top:360.2px;font-size:13px;line-height:17px;color:#fff;left:243px;letter-spacing:-0.051px;">Arlo.Gonzalez@sygx2.onmicrosoft.com</span>
<span style="top:360.2px;font-size:13px;line-height:17px;color:#fff;left:499.29999999999995px;letter-spacing:0.135px;">Member</span>
<svg style="left:587px;top:360.20000000000005px;" width="16" height="16" viewBox="0 0 16 16"><circle cx="8" cy="8" r="7.6" fill="#fff"/><circle cx="8" cy="8" r="6.9" fill="#da5032"/><rect x="3.6" y="6.8" width="8.8" height="2.4" rx="0.4" fill="#fff"/></svg>
<span style="top:360.2px;font-size:13px;line-height:17px;color:#fff;left:605.5px;letter-spacing:-0.250px;">Blocked</span>
<svg style="left:682px;top:358.5px;" width="18" height="18" viewBox="0 0 18 18"><path d="M5.5 1.8H9.4V8.2L12.6 5.3V9.6L7.5 14.6L1.9 9V4.9L5.5 8.2Z" fill="#696969" stroke="#fff" stroke-width="1.5" paint-order="stroke"/><circle cx="13.2" cy="6" r="0.6" fill="#222"/><circle cx="12" cy="11.6" r="4.9" fill="#fff"/><circle cx="12" cy="11.6" r="4.05" fill="#1f7ec5"/><rect x="11.4" y="11" width="1.25" height="3.1" fill="#fff"/><circle cx="12.02" cy="9.5" r="0.8" fill="#fff"/></svg>
<div style="left:681px;top:354px;width:127px;height:27px;overflow:hidden;">
<span style="top:6.2px;font-size:13px;line-height:17px;color:#807b76;left:24px;letter-spacing:0.134px;">- Use the 'Additio</span>
</div>
<span style="top:360.2px;font-size:13px;line-height:17px;color:#fff;left:811px;letter-spacing:-1.031px;">US</span>
<div style="left:865px;top:354px;width:149px;height:27px;overflow:hidden;">
<span style="top:6.2px;font-size:13px;line-height:17px;color:#fff;left:2px;letter-spacing:-0.247px;">Remote_Help_AddOn</span>
</div>
<svg style="left:1017.5999999999999px;top:358.5px;" width="18" height="18" viewBox="0 0 18 18"><path d="M7.6 3.6C5.6 2.6 3.2 3.2 3.2 5C3.2 7.4 7.3 6.6 7 9" fill="none" stroke="#fff" stroke-width="3.4" stroke-linecap="round"/><path d="M7.6 3.6C5.6 2.6 3.2 3.2 3.2 5C3.2 7.4 7.3 6.6 7 9" fill="none" stroke="#575757" stroke-width="1.7" stroke-linecap="round"/><path d="M4.6 1.4L5.2 3" stroke="#575757" stroke-width="1.3"/><path d="M2.6 12L4.4 11.6L5.6 13.8" fill="none" stroke="#fff" stroke-width="2.6"/><path d="M2.6 12L4.4 11.6L5.6 13.8" fill="none" stroke="#575757" stroke-width="1.2"/><circle cx="12" cy="11.6" r="4.9" fill="#fff"/><circle cx="12" cy="11.6" r="4.05" fill="#1f7ec5"/><rect x="11.4" y="11" width="1.25" height="3.1" fill="#fff"/><circle cx="12.02" cy="9.5" r="0.8" fill="#fff"/></svg>
<div style="left:1017px;top:354px;width:62px;height:27px;overflow:hidden;">
<span style="top:6.2px;font-size:13px;line-height:17px;color:#807b76;left:24.5px;letter-spacing:-0.018px;">- Set li</span>
</div>
<div style="left:0px;top:409px;width:1080px;height:1px;background:#f0f0f0;"></div>
<div style="left:560px;top:382px;width:25px;height:27px;background:#d9d9d9;"></div>
<div style="left:681px;top:382px;width:128px;height:27px;background:#d9d9d9;"></div>
<div style="left:1017px;top:382px;width:63px;height:27px;background:#d9d9d9;"></div>
<div style="left:19px;top:382px;width:1px;height:28px;background:#f0f0f0;"></div>
<div style="left:39px;top:382px;width:1px;height:28px;background:#f0f0f0;"></div>
<div style="left:495px;top:382px;width:1px;height:28px;background:#f0f0f0;"></div>
<div style="left:559px;top:382px;width:1px;height:28px;background:#f0f0f0;"></div>
<div style="left:584px;top:382px;width:1px;height:28px;background:#f0f0f0;"></div>
<div style="left:680px;top:382px;width:1px;height:28px;background:#f0f0f0;"></div>
<div style="left:808px;top:382px;width:1px;height:28px;background:#f0f0f0;"></div>
<div style="left:864px;top:382px;width:1px;height:28px;background:#f0f0f0;"></div>
<div style="left:1016px;top:382px;width:1px;height:28px;background:#f0f0f0;"></div>
<svg style="left:21px;top:387.20000000000005px;" width="18" height="18" viewBox="0 0 18 18"><path d="M2.2 16.2C2.2 12.8 5 11.4 9 11.4C13 11.4 15.8 12.8 15.8 16.2Z" fill="#2f86c6"/><circle cx="9" cy="6.5" r="3.9" fill="#2f86c6"/></svg>
<span style="top:388.2px;font-size:13px;line-height:17px;color:#111;left:67px;letter-spacing:-0.290px;">Avery Raven</span>
<span style="top:388.2px;font-size:13px;line-height:17px;color:#111;left:243px;letter-spacing:-0.102px;">Avery.Raven@sygx2.onmicrosoft.com</span>
<span style="top:388.2px;font-size:13px;line-height:17px;color:#111;left:499.29999999999995px;letter-spacing:0.135px;">Member</span>
<svg style="left:587px;top:388.20000000000005px;" width="16" height="16" viewBox="0 0 16 16"><circle cx="8" cy="8" r="6.9" fill="#da5032"/><rect x="3.6" y="6.8" width="8.8" height="2.4" rx="0.4" fill="#fff"/></svg>
<span style="top:388.2px;font-size:13px;line-height:17px;color:#111;left:605.5px;letter-spacing:-0.250px;">Blocked</span>
<svg style="left:682px;top:386.5px;" width="18" height="18" viewBox="0 0 18 18"><path d="M5.5 1.8H9.4V8.2L12.6 5.3V9.6L7.5 14.6L1.9 9V4.9L5.5 8.2Z" fill="#696969" stroke="#fff" stroke-width="1.5" paint-order="stroke"/><circle cx="13.2" cy="6" r="0.6" fill="#222"/><circle cx="12" cy="11.6" r="4.9" fill="#fff"/><circle cx="12" cy="11.6" r="4.05" fill="#1f7ec5"/><rect x="11.4" y="11" width="1.25" height="3.1" fill="#fff"/><circle cx="12.02" cy="9.5" r="0.8" fill="#fff"/></svg>
<div style="left:681px;top:382px;width:127px;height:27px;overflow:hidden;">
<span style="top:6.2px;font-size:13px;line-height:17px;color:#828282;left:24px;letter-spacing:0.134px;">- Use the 'Additio</span>
</div>
<span style="top:388.2px;font-size:13px;line-height:17px;color:#111;left:811px;letter-spacing:-1.031px;">US</span>
<div style="left:865px;top:382px;width:149px;height:27px;overflow:hidden;">
<span style="top:6.2px;font-size:13px;line-height:17px;color:#111;left:2px;letter-spacing:-0.247px;">Remote_Help_AddOn</span>
</div>
<svg style="left:1017.5999999999999px;top:386.5px;" width="18" height="18" viewBox="0 0 18 18"><path d="M7.6 3.6C5.6 2.6 3.2 3.2 3.2 5C3.2 7.4 7.3 6.6 7 9" fill="none" stroke="#fff" stroke-width="3.4" stroke-linecap="round"/><path d="M7.6 3.6C5.6 2.6 3.2 3.2 3.2 5C3.2 7.4 7.3 6.6 7 9" fill="none" stroke="#575757" stroke-width="1.7" stroke-linecap="round"/><path d="M4.6 1.4L5.2 3" stroke="#575757" stroke-width="1.3"/><path d="M2.6 12L4.4 11.6L5.6 13.8" fill="none" stroke="#fff" stroke-width="2.6"/><path d="M2.6 12L4.4 11.6L5.6 13.8" fill="none" stroke="#575757" stroke-width="1.2"/><circle cx="12" cy="11.6" r="4.9" fill="#fff"/><circle cx="12" cy="11.6" r="4.05" fill="#1f7ec5"/><rect x="11.4" y="11" width="1.25" height="3.1" fill="#fff"/><circle cx="12.02" cy="9.5" r="0.8" fill="#fff"/></svg>
<div style="left:1017px;top:382px;width:62px;height:27px;overflow:hidden;">
<span style="top:6.2px;font-size:13px;line-height:17px;color:#828282;left:24.5px;letter-spacing:-0.018px;">- Set li</span>
</div>
<div style="left:0px;top:437px;width:1080px;height:1px;background:#f0f0f0;"></div>
<div style="left:560px;top:410px;width:25px;height:27px;background:#d9d9d9;"></div>
<div style="left:681px;top:410px;width:128px;height:27px;background:#d9d9d9;"></div>
<div style="left:1017px;top:410px;width:63px;height:27px;background:#d9d9d9;"></div>
<div style="left:19px;top:410px;width:1px;height:28px;background:#f0f0f0;"></div>
<div style="left:39px;top:410px;width:1px;height:28px;background:#f0f0f0;"></div>
<div style="left:495px;top:410px;width:1px;height:28px;background:#f0f0f0;"></div>
<div style="left:559px;top:410px;width:1px;height:28px;background:#f0f0f0;"></div>
<div style="left:584px;top:410px;width:1px;height:28px;background:#f0f0f0;"></div>
<div style="left:680px;top:410px;width:1px;height:28px;background:#f0f0f0;"></div>
<div style="left:808px;top:410px;width:1px;height:28px;background:#f0f0f0;"></div>
<div style="left:864px;top:410px;width:1px;height:28px;background:#f0f0f0;"></div>
<div style="left:1016px;top:410px;width:1px;height:28px;background:#f0f0f0;"></div>
<svg style="left:21px;top:415.20000000000005px;" width="18" height="18" viewBox="0 0 18 18"><path d="M2.2 16.2C2.2 12.8 5 11.4 9 11.4C13 11.4 15.8 12.8 15.8 16.2Z" fill="#2f86c6"/><circle cx="9" cy="6.5" r="3.9" fill="#2f86c6"/></svg>
<span style="top:416.2px;font-size:13px;line-height:17px;color:#111;left:67px;letter-spacing:-0.250px;">Bryce Ramirez</span>
<span style="top:416.2px;font-size:13px;line-height:17px;color:#111;left:243px;letter-spacing:-0.154px;">Bryce.Ramirez@sygx2.onmicrosoft.com</span>
<span style="top:416.2px;font-size:13px;line-height:17px;color:#111;left:499.29999999999995px;letter-spacing:0.135px;">Member</span>
<svg style="left:587px;top:416.20000000000005px;" width="16" height="16" viewBox="0 0 16 16"><circle cx="8" cy="8" r="6.9" fill="#da5032"/><rect x="3.6" y="6.8" width="8.8" height="2.4" rx="0.4" fill="#fff"/></svg>
<span style="top:416.2px;font-size:13px;line-height:17px;color:#111;left:605.5px;letter-spacing:-0.250px;">Blocked</span>
<svg style="left:682px;top:414.5px;" width="18" height="18" viewBox="0 0 18 18"><path d="M5.5 1.8H9.4V8.2L12.6 5.3V9.6L7.5 14.6L1.9 9V4.9L5.5 8.2Z" fill="#696969" stroke="#fff" stroke-width="1.5" paint-order="stroke"/><circle cx="13.2" cy="6" r="0.6" fill="#222"/><circle cx="12" cy="11.6" r="4.9" fill="#fff"/><circle cx="12" cy="11.6" r="4.05" fill="#1f7ec5"/><rect x="11.4" y="11" width="1.25" height="3.1" fill="#fff"/><circle cx="12.02" cy="9.5" r="0.8" fill="#fff"/></svg>
<div style="left:681px;top:410px;width:127px;height:27px;overflow:hidden;">
<span style="top:6.2px;font-size:13px;line-height:17px;color:#828282;left:24px;letter-spacing:0.134px;">- Use the 'Additio</span>
</div>
<span style="top:416.2px;font-size:13px;line-height:17px;color:#111;left:811px;letter-spacing:-1.031px;">US</span>
<div style="left:865px;top:410px;width:149px;height:27px;overflow:hidden;">
<span style="top:6.2px;font-size:13px;line-height:17px;color:#111;left:2px;letter-spacing:-0.247px;">Remote_Help_AddOn</span>
</div>
<svg style="left:1017.5999999999999px;top:414.5px;" width="18" height="18" viewBox="0 0 18 18"><path d="M7.6 3.6C5.6 2.6 3.2 3.2 3.2 5C3.2 7.4 7.3 6.6 7 9" fill="none" stroke="#fff" stroke-width="3.4" stroke-linecap="round"/><path d="M7.6 3.6C5.6 2.6 3.2 3.2 3.2 5C3.2 7.4 7.3 6.6 7 9" fill="none" stroke="#575757" stroke-width="1.7" stroke-linecap="round"/><path d="M4.6 1.4L5.2 3" stroke="#575757" stroke-width="1.3"/><path d="M2.6 12L4.4 11.6L5.6 13.8" fill="none" stroke="#fff" stroke-width="2.6"/><path d="M2.6 12L4.4 11.6L5.6 13.8" fill="none" stroke="#575757" stroke-width="1.2"/><circle cx="12" cy="11.6" r="4.9" fill="#fff"/><circle cx="12" cy="11.6" r="4.05" fill="#1f7ec5"/><rect x="11.4" y="11" width="1.25" height="3.1" fill="#fff"/><circle cx="12.02" cy="9.5" r="0.8" fill="#fff"/></svg>
<div style="left:1017px;top:410px;width:62px;height:27px;overflow:hidden;">
<span style="top:6.2px;font-size:13px;line-height:17px;color:#828282;left:24.5px;letter-spacing:-0.018px;">- Set li</span>
</div>
<div style="left:0px;top:465px;width:1080px;height:1px;background:#f0f0f0;"></div>
<div style="left:560px;top:438px;width:25px;height:27px;background:#d9d9d9;"></div>
<div style="left:681px;top:438px;width:128px;height:27px;background:#d9d9d9;"></div>
<div style="left:1017px;top:438px;width:63px;height:27px;background:#d9d9d9;"></div>
<div style="left:19px;top:438px;width:1px;height:28px;background:#f0f0f0;"></div>
<div style="left:39px;top:438px;width:1px;height:28px;background:#f0f0f0;"></div>
<div style="left:495px;top:438px;width:1px;height:28px;background:#f0f0f0;"></div>
<div style="left:559px;top:438px;width:1px;height:28px;background:#f0f0f0;"></div>
<div style="left:584px;top:438px;width:1px;height:28px;background:#f0f0f0;"></div>
<div style="left:680px;top:438px;width:1px;height:28px;background:#f0f0f0;"></div>
<div style="left:808px;top:438px;width:1px;height:28px;background:#f0f0f0;"></div>
<div style="left:864px;top:438px;width:1px;height:28px;background:#f0f0f0;"></div>
<div style="left:1016px;top:438px;width:1px;height:28px;background:#f0f0f0;"></div>
<svg style="left:21px;top:443.20000000000005px;" width="18" height="18" viewBox="0 0 18 18"><path d="M2.2 16.2C2.2 12.8 5 11.4 9 11.4C13 11.4 15.8 12.8 15.8 16.2Z" fill="#2f86c6"/><circle cx="9" cy="6.5" r="3.9" fill="#2f86c6"/></svg>
<span style="top:444.2px;font-size:13px;line-height:17px;color:#111;left:67px;letter-spacing:-0.018px;">Charlotte Sharpe</span>
<span style="top:444.2px;font-size:13px;line-height:17px;color:#111;left:243px;letter-spacing:-0.037px;">Charlotte.Sharpe@sygx2.onmicrosoft.com</span>
<span style="top:444.2px;font-size:13px;line-height:17px;color:#111;left:499.29999999999995px;letter-spacing:0.135px;">Member</span>
<svg style="left:587px;top:444.20000000000005px;" width="16" height="16" viewBox="0 0 16 16"><circle cx="8" cy="8" r="6.9" fill="#da5032"/><rect x="3.6" y="6.8" width="8.8" height="2.4" rx="0.4" fill="#fff"/></svg>
<span style="top:444.2px;font-size:13px;line-height:17px;color:#111;left:605.5px;letter-spacing:-0.250px;">Blocked</span>
<svg style="left:682px;top:442.5px;" width="18" height="18" viewBox="0 0 18 18"><path d="M5.5 1.8H9.4V8.2L12.6 5.3V9.6L7.5 14.6L1.9 9V4.9L5.5 8.2Z" fill="#696969" stroke="#fff" stroke-width="1.5" paint-order="stroke"/><circle cx="13.2" cy="6" r="0.6" fill="#222"/><circle cx="12" cy="11.6" r="4.9" fill="#fff"/><circle cx="12" cy="11.6" r="4.05" fill="#1f7ec5"/><rect x="11.4" y="11" width="1.25" height="3.1" fill="#fff"/><circle cx="12.02" cy="9.5" r="0.8" fill="#fff"/></svg>
<div style="left:681px;top:438px;width:127px;height:27px;overflow:hidden;">
<span style="top:6.2px;font-size:13px;line-height:17px;color:#828282;left:24px;letter-spacing:0.134px;">- Use the 'Additio</span>
</div>
<span style="top:444.2px;font-size:13px;line-height:17px;color:#111;left:811px;letter-spacing:-1.031px;">US</span>
<div style="left:865px;top:438px;width:149px;height:27px;overflow:hidden;">
<span style="top:6.2px;font-size:13px;line-height:17px;color:#111;left:2px;letter-spacing:-0.247px;">Remote_Help_AddOn</span>
</div>
<svg style="left:1017.5999999999999px;top:442.5px;" width="18" height="18" viewBox="0 0 18 18"><path d="M7.6 3.6C5.6 2.6 3.2 3.2 3.2 5C3.2 7.4 7.3 6.6 7 9" fill="none" stroke="#fff" stroke-width="3.4" stroke-linecap="round"/><path d="M7.6 3.6C5.6 2.6 3.2 3.2 3.2 5C3.2 7.4 7.3 6.6 7 9" fill="none" stroke="#575757" stroke-width="1.7" stroke-linecap="round"/><path d="M4.6 1.4L5.2 3" stroke="#575757" stroke-width="1.3"/><path d="M2.6 12L4.4 11.6L5.6 13.8" fill="none" stroke="#fff" stroke-width="2.6"/><path d="M2.6 12L4.4 11.6L5.6 13.8" fill="none" stroke="#575757" stroke-width="1.2"/><circle cx="12" cy="11.6" r="4.9" fill="#fff"/><circle cx="12" cy="11.6" r="4.05" fill="#1f7ec5"/><rect x="11.4" y="11" width="1.25" height="3.1" fill="#fff"/><circle cx="12.02" cy="9.5" r="0.8" fill="#fff"/></svg>
<div style="left:1017px;top:438px;width:62px;height:27px;overflow:hidden;">
<span style="top:6.2px;font-size:13px;line-height:17px;color:#828282;left:24.5px;letter-spacing:-0.018px;">- Set li</span>
</div>
<div style="left:0px;top:493px;width:1080px;height:1px;background:#f0f0f0;"></div>
<div style="left:560px;top:466px;width:25px;height:27px;background:#d9d9d9;"></div>
<div style="left:681px;top:466px;width:128px;height:27px;background:#d9d9d9;"></div>
<div style="left:1017px;top:466px;width:63px;height:27px;background:#d9d9d9;"></div>
<div style="left:19px;top:466px;width:1px;height:28px;background:#f0f0f0;"></div>
<div style="left:39px;top:466px;width:1px;height:28px;background:#f0f0f0;"></div>
<div style="left:495px;top:466px;width:1px;height:28px;background:#f0f0f0;"></div>
<div style="left:559px;top:466px;width:1px;height:28px;background:#f0f0f0;"></div>
<div style="left:584px;top:466px;width:1px;height:28px;background:#f0f0f0;"></div>
<div style="left:680px;top:466px;width:1px;height:28px;background:#f0f0f0;"></div>
<div style="left:808px;top:466px;width:1px;height:28px;background:#f0f0f0;"></div>
<div style="left:864px;top:466px;width:1px;height:28px;background:#f0f0f0;"></div>
<div style="left:1016px;top:466px;width:1px;height:28px;background:#f0f0f0;"></div>
<svg style="left:21px;top:471.20000000000005px;" width="18" height="18" viewBox="0 0 18 18"><path d="M2.2 16.2C2.2 12.8 5 11.4 9 11.4C13 11.4 15.8 12.8 15.8 16.2Z" fill="#2f86c6"/><circle cx="9" cy="6.5" r="3.9" fill="#2f86c6"/></svg>
<span style="top:472.2px;font-size:13px;line-height:17px;color:#111;left:67px;letter-spacing:0.152px;">Connor Hope</span>
<span style="top:472.2px;font-size:13px;line-height:17px;color:#111;left:243px;letter-spacing:0.008px;">Connor.Hope@sygx2.onmicrosoft.com</span>
<span style="top:472.2px;font-size:13px;line-height:17px;color:#111;left:499.29999999999995px;letter-spacing:0.135px;">Member</span>
<svg style="left:587px;top:472.20000000000005px;" width="16" height="16" viewBox="0 0 16 16"><circle cx="8" cy="8" r="6.9" fill="#da5032"/><rect x="3.6" y="6.8" width="8.8" height="2.4" rx="0.4" fill="#fff"/></svg>
<span style="top:472.2px;font-size:13px;line-height:17px;color:#111;left:605.5px;letter-spacing:-0.250px;">Blocked</span>
<svg style="left:682px;top:470.5px;" width="18" height="18" viewBox="0 0 18 18"><path d="M5.5 1.8H9.4V8.2L12.6 5.3V9.6L7.5 14.6L1.9 9V4.9L5.5 8.2Z" fill="#696969" stroke="#fff" stroke-width="1.5" paint-order="stroke"/><circle cx="13.2" cy="6" r="0.6" fill="#222"/><circle cx="12" cy="11.6" r="4.9" fill="#fff"/><circle cx="12" cy="11.6" r="4.05" fill="#1f7ec5"/><rect x="11.4" y="11" width="1.25" height="3.1" fill="#fff"/><circle cx="12.02" cy="9.5" r="0.8" fill="#fff"/></svg>
<div style="left:681px;top:466px;width:127px;height:27px;overflow:hidden;">
<span style="top:6.2px;font-size:13px;line-height:17px;color:#828282;left:24px;letter-spacing:0.134px;">- Use the 'Additio</span>
</div>
<span style="top:472.2px;font-size:13px;line-height:17px;color:#111;left:811px;letter-spacing:-1.031px;">US</span>
<div style="left:865px;top:466px;width:149px;height:27px;overflow:hidden;">
<span style="top:6.2px;font-size:13px;line-height:17px;color:#111;left:2px;letter-spacing:-0.247px;">Remote_Help_AddOn</span>
</div>
<svg style="left:1017.5999999999999px;top:470.5px;" width="18" height="18" viewBox="0 0 18 18"><path d="M7.6 3.6C5.6 2.6 3.2 3.2 3.2 5C3.2 7.4 7.3 6.6 7 9" fill="none" stroke="#fff" stroke-width="3.4" stroke-linecap="round"/><path d="M7.6 3.6C5.6 2.6 3.2 3.2 3.2 5C3.2 7.4 7.3 6.6 7 9" fill="none" stroke="#575757" stroke-width="1.7" stroke-linecap="round"/><path d="M4.6 1.4L5.2 3" stroke="#575757" stroke-width="1.3"/><path d="M2.6 12L4.4 11.6L5.6 13.8" fill="none" stroke="#fff" stroke-width="2.6"/><path d="M2.6 12L4.4 11.6L5.6 13.8" fill="none" stroke="#575757" stroke-width="1.2"/><circle cx="12" cy="11.6" r="4.9" fill="#fff"/><circle cx="12" cy="11.6" r="4.05" fill="#1f7ec5"/><rect x="11.4" y="11" width="1.25" height="3.1" fill="#fff"/><circle cx="12.02" cy="9.5" r="0.8" fill="#fff"/></svg>
<div style="left:1017px;top:466px;width:62px;height:27px;overflow:hidden;">
<span style="top:6.2px;font-size:13px;line-height:17px;color:#828282;left:24.5px;letter-spacing:-0.018px;">- Set li</span>
</div>
<div style="left:0px;top:521px;width:1080px;height:1px;background:#f0f0f0;"></div>
<div style="left:560px;top:494px;width:25px;height:27px;background:#ededed;"></div>
<div style="left:681px;top:494px;width:128px;height:27px;background:#d9d9d9;"></div>
<div style="left:1017px;top:494px;width:63px;height:27px;background:#d9d9d9;"></div>
<div style="left:19px;top:494px;width:1px;height:28px;background:#f0f0f0;"></div>
<div style="left:39px;top:494px;width:1px;height:28px;background:#f0f0f0;"></div>
<div style="left:495px;top:494px;width:1px;height:28px;background:#f0f0f0;"></div>
<div style="left:559px;top:494px;width:1px;height:28px;background:#f0f0f0;"></div>
<div style="left:584px;top:494px;width:1px;height:28px;background:#f0f0f0;"></div>
<div style="left:680px;top:494px;width:1px;height:28px;background:#f0f0f0;"></div>
<div style="left:808px;top:494px;width:1px;height:28px;background:#f0f0f0;"></div>
<div style="left:864px;top:494px;width:1px;height:28px;background:#f0f0f0;"></div>
<div style="left:1016px;top:494px;width:1px;height:28px;background:#f0f0f0;"></div>
<svg style="left:21px;top:499.20000000000005px;" width="18" height="18" viewBox="0 0 18 18"><path d="M2.2 16.2C2.2 12.8 5 11.4 9 11.4C13 11.4 15.8 12.8 15.8 16.2Z" fill="#2f86c6"/><circle cx="9" cy="6.5" r="3.9" fill="#2f86c6"/></svg>
<span style="top:500.2px;font-size:13px;line-height:17px;color:#111;left:67px;letter-spacing:-0.077px;">Emiliano Snow</span>
<span style="top:500.2px;font-size:13px;line-height:17px;color:#111;left:243px;letter-spacing:-0.089px;">Emiliano.Snow@sygx2.onmicrosoft.com</span>
<span style="top:500.2px;font-size:13px;line-height:17px;color:#111;left:499.29999999999995px;letter-spacing:0.135px;">Member</span>
<svg style="left:566.5px;top:501.9000000000001px;" width="13" height="13" viewBox="0 0 13 13"><rect x="0.5" y="0.5" width="12" height="12" fill="#f7f7f7" stroke="#c6c6c6"/><path d="M3 6.6L5.4 9.4L10 2.8" fill="none" stroke="#b0b0b0" stroke-width="1.5"/></svg>
<svg style="left:587px;top:500.20000000000005px;" width="16" height="16" viewBox="0 0 16 16"><circle cx="8" cy="8" r="6.9" fill="#da5032"/><rect x="3.6" y="6.8" width="8.8" height="2.4" rx="0.4" fill="#fff"/></svg>
<span style="top:500.2px;font-size:13px;line-height:17px;color:#111;left:605.5px;letter-spacing:-0.250px;">Blocked</span>
<svg style="left:682px;top:498.5px;" width="18" height="18" viewBox="0 0 18 18"><path d="M5.5 1.8H9.4V8.2L12.6 5.3V9.6L7.5 14.6L1.9 9V4.9L5.5 8.2Z" fill="#696969" stroke="#fff" stroke-width="1.5" paint-order="stroke"/><circle cx="13.2" cy="6" r="0.6" fill="#222"/><circle cx="12" cy="11.6" r="4.9" fill="#fff"/><circle cx="12" cy="11.6" r="4.05" fill="#1f7ec5"/><rect x="11.4" y="11" width="1.25" height="3.1" fill="#fff"/><circle cx="12.02" cy="9.5" r="0.8" fill="#fff"/></svg>
<div style="left:681px;top:494px;width:127px;height:27px;overflow:hidden;">
<span style="top:6.2px;font-size:13px;line-height:17px;color:#828282;left:24px;letter-spacing:0.134px;">- Use the 'Additio</span>
</div>
<span style="top:500.2px;font-size:13px;line-height:17px;color:#111;left:811px;letter-spacing:-1.031px;">US</span>
<div style="left:865px;top:494px;width:149px;height:27px;overflow:hidden;">
<span style="top:6.2px;font-size:13px;line-height:17px;color:#111;left:2px;letter-spacing:-0.247px;">Remote_Help_AddOn</span>
</div>
<svg style="left:1017.5999999999999px;top:498.5px;" width="18" height="18" viewBox="0 0 18 18"><path d="M7.6 3.6C5.6 2.6 3.2 3.2 3.2 5C3.2 7.4 7.3 6.6 7 9" fill="none" stroke="#fff" stroke-width="3.4" stroke-linecap="round"/><path d="M7.6 3.6C5.6 2.6 3.2 3.2 3.2 5C3.2 7.4 7.3 6.6 7 9" fill="none" stroke="#575757" stroke-width="1.7" stroke-linecap="round"/><path d="M4.6 1.4L5.2 3" stroke="#575757" stroke-width="1.3"/><path d="M2.6 12L4.4 11.6L5.6 13.8" fill="none" stroke="#fff" stroke-width="2.6"/><path d="M2.6 12L4.4 11.6L5.6 13.8" fill="none" stroke="#575757" stroke-width="1.2"/><circle cx="12" cy="11.6" r="4.9" fill="#fff"/><circle cx="12" cy="11.6" r="4.05" fill="#1f7ec5"/><rect x="11.4" y="11" width="1.25" height="3.1" fill="#fff"/><circle cx="12.02" cy="9.5" r="0.8" fill="#fff"/></svg>
<div style="left:1017px;top:494px;width:62px;height:27px;overflow:hidden;">
<span style="top:6.2px;font-size:13px;line-height:17px;color:#828282;left:24.5px;letter-spacing:-0.018px;">- Set li</span>
</div>
<div style="left:0px;top:549px;width:1080px;height:1px;background:#f0f0f0;"></div>
<div style="left:560px;top:522px;width:25px;height:27px;background:#ededed;"></div>
<div style="left:681px;top:522px;width:128px;height:27px;background:#d9d9d9;"></div>
<div style="left:865px;top:522px;width:215px;height:27px;background:#d9d9d9;"></div>
<div style="left:19px;top:522px;width:1px;height:28px;background:#f0f0f0;"></div>
<div style="left:39px;top:522px;width:1px;height:28px;background:#f0f0f0;"></div>
<div style="left:495px;top:522px;width:1px;height:28px;background:#f0f0f0;"></div>
<div style="left:559px;top:522px;width:1px;height:28px;background:#f0f0f0;"></div>
<div style="left:584px;top:522px;width:1px;height:28px;background:#f0f0f0;"></div>
<div style="left:680px;top:522px;width:1px;height:28px;background:#f0f0f0;"></div>
<div style="left:808px;top:522px;width:1px;height:28px;background:#f0f0f0;"></div>
<div style="left:864px;top:522px;width:1px;height:28px;background:#f0f0f0;"></div>
<div style="left:1016px;top:522px;width:1px;height:28px;background:#f0f0f0;"></div>
<svg style="left:21px;top:527.2px;" width="18" height="18" viewBox="0 0 18 18"><path d="M2.2 16.2C2.2 12.8 5 11.4 9 11.4C13 11.4 15.8 12.8 15.8 16.2Z" fill="#2f86c6"/><circle cx="9" cy="6.5" r="3.9" fill="#2f86c6"/></svg>
<span style="top:528.2px;font-size:13px;line-height:17px;color:#111;left:67px;letter-spacing:-0.348px;">Ethen Glass</span>
<span style="top:528.2px;font-size:13px;line-height:17px;color:#111;left:243px;letter-spacing:-0.150px;">Ethen.Glass@sygx2.onmicrosoft.com</span>
<span style="top:528.2px;font-size:13px;line-height:17px;color:#111;left:499.29999999999995px;letter-spacing:0.135px;">Member</span>
<svg style="left:566.5px;top:529.9000000000001px;" width="13" height="13" viewBox="0 0 13 13"><rect x="0.5" y="0.5" width="12" height="12" fill="#f7f7f7" stroke="#c6c6c6"/><path d="M3 6.6L5.4 9.4L10 2.8" fill="none" stroke="#b0b0b0" stroke-width="1.5"/></svg>
<svg style="left:587px;top:528.2px;" width="16" height="16" viewBox="0 0 16 16"><circle cx="8" cy="8" r="6.9" fill="#da5032"/><rect x="3.6" y="6.8" width="8.8" height="2.4" rx="0.4" fill="#fff"/></svg>
<span style="top:528.2px;font-size:13px;line-height:17px;color:#111;left:605.5px;letter-spacing:-0.250px;">Blocked</span>
<svg style="left:682px;top:526.5px;" width="18" height="18" viewBox="0 0 18 18"><path d="M5.5 1.8H9.4V8.2L12.6 5.3V9.6L7.5 14.6L1.9 9V4.9L5.5 8.2Z" fill="#696969" stroke="#fff" stroke-width="1.5" paint-order="stroke"/><circle cx="13.2" cy="6" r="0.6" fill="#222"/><circle cx="12" cy="11.6" r="4.9" fill="#fff"/><circle cx="12" cy="11.6" r="4.05" fill="#1f7ec5"/><rect x="11.4" y="11" width="1.25" height="3.1" fill="#fff"/><circle cx="12.02" cy="9.5" r="0.8" fill="#fff"/></svg>
<div style="left:681px;top:522px;width:127px;height:27px;overflow:hidden;">
<span style="top:6.2px;font-size:13px;line-height:17px;color:#828282;left:24px;letter-spacing:0.134px;">- Use the 'Additio</span>
</div>
<span style="top:528.2px;font-size:13px;line-height:17px;color:#111;left:811px;letter-spacing:-1.031px;">US</span>
<div style="left:865px;top:522px;width:149px;height:27px;overflow:hidden;">
<span style="top:6.2px;font-size:13px;line-height:17px;color:#828282;left:2px;letter-spacing:0.071px;">-- Unlicensed --</span>
</div>
<div style="left:0px;top:577px;width:1080px;height:1px;background:#f0f0f0;"></div>
<div style="left:560px;top:550px;width:25px;height:27px;background:#ededed;"></div>
<div style="left:681px;top:550px;width:128px;height:27px;background:#d9d9d9;"></div>
<div style="left:1017px;top:550px;width:63px;height:27px;background:#d9d9d9;"></div>
<div style="left:19px;top:550px;width:1px;height:28px;background:#f0f0f0;"></div>
<div style="left:39px;top:550px;width:1px;height:28px;background:#f0f0f0;"></div>
<div style="left:495px;top:550px;width:1px;height:28px;background:#f0f0f0;"></div>
<div style="left:559px;top:550px;width:1px;height:28px;background:#f0f0f0;"></div>
<div style="left:584px;top:550px;width:1px;height:28px;background:#f0f0f0;"></div>
<div style="left:680px;top:550px;width:1px;height:28px;background:#f0f0f0;"></div>
<div style="left:808px;top:550px;width:1px;height:28px;background:#f0f0f0;"></div>
<div style="left:864px;top:550px;width:1px;height:28px;background:#f0f0f0;"></div>
<div style="left:1016px;top:550px;width:1px;height:28px;background:#f0f0f0;"></div>
<svg style="left:21px;top:555.2px;" width="18" height="18" viewBox="0 0 18 18"><path d="M2.2 16.2C2.2 12.8 5 11.4 9 11.4C13 11.4 15.8 12.8 15.8 16.2Z" fill="#2f86c6"/><circle cx="9" cy="6.5" r="3.9" fill="#2f86c6"/></svg>
<span style="top:556.2px;font-size:13px;line-height:17px;color:#111;left:67px;letter-spacing:0.006px;">Giselle Mccoy</span>
<span style="top:556.2px;font-size:13px;line-height:17px;color:#111;left:243px;letter-spacing:-0.030px;">Giselle.Mccoy@sygx2.onmicrosoft.com</span>
<span style="top:556.2px;font-size:13px;line-height:17px;color:#111;left:499.29999999999995px;letter-spacing:0.135px;">Member</span>
<svg style="left:566.5px;top:557.9000000000001px;" width="13" height="13" viewBox="0 0 13 13"><rect x="0.5" y="0.5" width="12" height="12" fill="#f7f7f7" stroke="#c6c6c6"/><path d="M3 6.6L5.4 9.4L10 2.8" fill="none" stroke="#b0b0b0" stroke-width="1.5"/></svg>
<svg style="left:587px;top:556.2px;" width="16" height="16" viewBox="0 0 16 16"><circle cx="8" cy="8" r="6.9" fill="#da5032"/><rect x="3.6" y="6.8" width="8.8" height="2.4" rx="0.4" fill="#fff"/></svg>
<span style="top:556.2px;font-size:13px;line-height:17px;color:#111;left:605.5px;letter-spacing:-0.250px;">Blocked</span>
<svg style="left:682px;top:554.5px;" width="18" height="18" viewBox="0 0 18 18"><path d="M5.5 1.8H9.4V8.2L12.6 5.3V9.6L7.5 14.6L1.9 9V4.9L5.5 8.2Z" fill="#696969" stroke="#fff" stroke-width="1.5" paint-order="stroke"/><circle cx="13.2" cy="6" r="0.6" fill="#222"/><circle cx="12" cy="11.6" r="4.9" fill="#fff"/><circle cx="12" cy="11.6" r="4.05" fill="#1f7ec5"/><rect x="11.4" y="11" width="1.25" height="3.1" fill="#fff"/><circle cx="12.02" cy="9.5" r="0.8" fill="#fff"/></svg>
<div style="left:681px;top:550px;width:127px;height:27px;overflow:hidden;">
<span style="top:6.2px;font-size:13px;line-height:17px;color:#828282;left:24px;letter-spacing:0.134px;">- Use the 'Additio</span>
</div>
<span style="top:556.2px;font-size:13px;line-height:17px;color:#111;left:811px;letter-spacing:-1.031px;">US</span>
<div style="left:865px;top:550px;width:149px;height:27px;overflow:hidden;">
<span style="top:6.2px;font-size:13px;line-height:17px;color:#111;left:2px;letter-spacing:-0.325px;">Microsoft_Entra_Private_A</span>
</div>
<svg style="left:1017.5999999999999px;top:554.5px;" width="18" height="18" viewBox="0 0 18 18"><path d="M7.6 3.6C5.6 2.6 3.2 3.2 3.2 5C3.2 7.4 7.3 6.6 7 9" fill="none" stroke="#fff" stroke-width="3.4" stroke-linecap="round"/><path d="M7.6 3.6C5.6 2.6 3.2 3.2 3.2 5C3.2 7.4 7.3 6.6 7 9" fill="none" stroke="#575757" stroke-width="1.7" stroke-linecap="round"/><path d="M4.6 1.4L5.2 3" stroke="#575757" stroke-width="1.3"/><path d="M2.6 12L4.4 11.6L5.6 13.8" fill="none" stroke="#fff" stroke-width="2.6"/><path d="M2.6 12L4.4 11.6L5.6 13.8" fill="none" stroke="#575757" stroke-width="1.2"/><circle cx="12" cy="11.6" r="4.9" fill="#fff"/><circle cx="12" cy="11.6" r="4.05" fill="#1f7ec5"/><rect x="11.4" y="11" width="1.25" height="3.1" fill="#fff"/><circle cx="12.02" cy="9.5" r="0.8" fill="#fff"/></svg>
<div style="left:1017px;top:550px;width:62px;height:27px;overflow:hidden;">
<span style="top:6.2px;font-size:13px;line-height:17px;color:#828282;left:24.5px;letter-spacing:-0.018px;">- Set li</span>
</div>
<div style="left:0px;top:605px;width:1080px;height:1px;background:#f0f0f0;"></div>
<div style="left:560px;top:578px;width:25px;height:27px;background:#d9d9d9;"></div>
<div style="left:681px;top:578px;width:128px;height:27px;background:#d9d9d9;"></div>
<div style="left:1017px;top:578px;width:63px;height:27px;background:#d9d9d9;"></div>
<div style="left:19px;top:578px;width:1px;height:28px;background:#f0f0f0;"></div>
<div style="left:39px;top:578px;width:1px;height:28px;background:#f0f0f0;"></div>
<div style="left:495px;top:578px;width:1px;height:28px;background:#f0f0f0;"></div>
<div style="left:559px;top:578px;width:1px;height:28px;background:#f0f0f0;"></div>
<div style="left:584px;top:578px;width:1px;height:28px;background:#f0f0f0;"></div>
<div style="left:680px;top:578px;width:1px;height:28px;background:#f0f0f0;"></div>
<div style="left:808px;top:578px;width:1px;height:28px;background:#f0f0f0;"></div>
<div style="left:864px;top:578px;width:1px;height:28px;background:#f0f0f0;"></div>
<div style="left:1016px;top:578px;width:1px;height:28px;background:#f0f0f0;"></div>
<svg style="left:21px;top:583.2px;" width="18" height="18" viewBox="0 0 18 18"><path d="M2.2 16.2C2.2 12.8 5 11.4 9 11.4C13 11.4 15.8 12.8 15.8 16.2Z" fill="#2f86c6"/><circle cx="9" cy="6.5" r="3.9" fill="#2f86c6"/></svg>
<span style="top:584.2px;font-size:13px;line-height:17px;color:#111;left:67px;letter-spacing:0.118px;">Henrietta Mueller</span>
<span style="top:584.2px;font-size:13px;line-height:17px;color:#111;left:243px;letter-spacing:0.040px;">HenriettaM@sygx2.onmicrosoft.com</span>
<span style="top:584.2px;font-size:13px;line-height:17px;color:#111;left:499.29999999999995px;letter-spacing:0.135px;">Member</span>
<svg style="left:587px;top:584.2px;" width="16" height="16" viewBox="0 0 16 16"><circle cx="8" cy="8" r="6.9" fill="#da5032"/><rect x="3.6" y="6.8" width="8.8" height="2.4" rx="0.4" fill="#fff"/></svg>
<span style="top:584.2px;font-size:13px;line-height:17px;color:#111;left:605.5px;letter-spacing:-0.250px;">Blocked</span>
<svg style="left:682px;top:582.5px;" width="18" height="18" viewBox="0 0 18 18"><path d="M5.5 1.8H9.4V8.2L12.6 5.3V9.6L7.5 14.6L1.9 9V4.9L5.5 8.2Z" fill="#696969" stroke="#fff" stroke-width="1.5" paint-order="stroke"/><circle cx="13.2" cy="6" r="0.6" fill="#222"/><circle cx="12" cy="11.6" r="4.9" fill="#fff"/><circle cx="12" cy="11.6" r="4.05" fill="#1f7ec5"/><rect x="11.4" y="11" width="1.25" height="3.1" fill="#fff"/><circle cx="12.02" cy="9.5" r="0.8" fill="#fff"/></svg>
<div style="left:681px;top:578px;width:127px;height:27px;overflow:hidden;">
<span style="top:6.2px;font-size:13px;line-height:17px;color:#828282;left:24px;letter-spacing:0.134px;">- Use the 'Additio</span>
</div>
<span style="top:584.2px;font-size:13px;line-height:17px;color:#111;left:811px;letter-spacing:-1.031px;">US</span>
<div style="left:865px;top:578px;width:149px;height:27px;overflow:hidden;">
<span style="top:6.2px;font-size:13px;line-height:17px;color:#111;left:2px;letter-spacing:-0.164px;">Microsoft 365 E5 Develope</span>
</div>
<svg style="left:1017.5999999999999px;top:582.5px;" width="18" height="18" viewBox="0 0 18 18"><path d="M7.6 3.6C5.6 2.6 3.2 3.2 3.2 5C3.2 7.4 7.3 6.6 7 9" fill="none" stroke="#fff" stroke-width="3.4" stroke-linecap="round"/><path d="M7.6 3.6C5.6 2.6 3.2 3.2 3.2 5C3.2 7.4 7.3 6.6 7 9" fill="none" stroke="#575757" stroke-width="1.7" stroke-linecap="round"/><path d="M4.6 1.4L5.2 3" stroke="#575757" stroke-width="1.3"/><path d="M2.6 12L4.4 11.6L5.6 13.8" fill="none" stroke="#fff" stroke-width="2.6"/><path d="M2.6 12L4.4 11.6L5.6 13.8" fill="none" stroke="#575757" stroke-width="1.2"/><circle cx="12" cy="11.6" r="4.9" fill="#fff"/><circle cx="12" cy="11.6" r="4.05" fill="#1f7ec5"/><rect x="11.4" y="11" width="1.25" height="3.1" fill="#fff"/><circle cx="12.02" cy="9.5" r="0.8" fill="#fff"/></svg>
<div style="left:1017px;top:578px;width:62px;height:27px;overflow:hidden;">
<span style="top:6.2px;font-size:13px;line-height:17px;color:#828282;left:24.5px;letter-spacing:-0.018px;">- Set li</span>
</div>
<div style="left:0px;top:633px;width:1080px;height:1px;background:#f0f0f0;"></div>
<div style="left:560px;top:606px;width:25px;height:27px;background:#ededed;"></div>
<div style="left:681px;top:606px;width:128px;height:27px;background:#d9d9d9;"></div>
<div style="left:1017px;top:606px;width:63px;height:27px;background:#d9d9d9;"></div>
<div style="left:19px;top:606px;width:1px;height:28px;background:#f0f0f0;"></div>
<div style="left:39px;top:606px;width:1px;height:28px;background:#f0f0f0;"></div>
<div style="left:495px;top:606px;width:1px;height:28px;background:#f0f0f0;"></div>
<div style="left:559px;top:606px;width:1px;height:28px;background:#f0f0f0;"></div>
<div style="left:584px;top:606px;width:1px;height:28px;background:#f0f0f0;"></div>
<div style="left:680px;top:606px;width:1px;height:28px;background:#f0f0f0;"></div>
<div style="left:808px;top:606px;width:1px;height:28px;background:#f0f0f0;"></div>
<div style="left:864px;top:606px;width:1px;height:28px;background:#f0f0f0;"></div>
<div style="left:1016px;top:606px;width:1px;height:28px;background:#f0f0f0;"></div>
<svg style="left:21px;top:611.2px;" width="18" height="18" viewBox="0 0 18 18"><path d="M2.2 16.2C2.2 12.8 5 11.4 9 11.4C13 11.4 15.8 12.8 15.8 16.2Z" fill="#2f86c6"/><circle cx="9" cy="6.5" r="3.9" fill="#2f86c6"/></svg>
<span style="top:612.2px;font-size:13px;line-height:17px;color:#111;left:67px;letter-spacing:-0.004px;">Kendall Craig</span>
<span style="top:612.2px;font-size:13px;line-height:17px;color:#111;left:243px;letter-spacing:-0.034px;">Kendall.Craig@sygx2.onmicrosoft.com</span>
<span style="top:612.2px;font-size:13px;line-height:17px;color:#111;left:499.29999999999995px;letter-spacing:0.135px;">Member</span>
<svg style="left:566.5px;top:613.9000000000001px;" width="13" height="13" viewBox="0 0 13 13"><rect x="0.5" y="0.5" width="12" height="12" fill="#f7f7f7" stroke="#c6c6c6"/><path d="M3 6.6L5.4 9.4L10 2.8" fill="none" stroke="#b0b0b0" stroke-width="1.5"/></svg>
<svg style="left:587px;top:612.2px;" width="16" height="16" viewBox="0 0 16 16"><circle cx="8" cy="8" r="6.9" fill="#da5032"/><rect x="3.6" y="6.8" width="8.8" height="2.4" rx="0.4" fill="#fff"/></svg>
<span style="top:612.2px;font-size:13px;line-height:17px;color:#111;left:605.5px;letter-spacing:-0.250px;">Blocked</span>
<svg style="left:682px;top:610.5px;" width="18" height="18" viewBox="0 0 18 18"><path d="M5.5 1.8H9.4V8.2L12.6 5.3V9.6L7.5 14.6L1.9 9V4.9L5.5 8.2Z" fill="#696969" stroke="#fff" stroke-width="1.5" paint-order="stroke"/><circle cx="13.2" cy="6" r="0.6" fill="#222"/><circle cx="12" cy="11.6" r="4.9" fill="#fff"/><circle cx="12" cy="11.6" r="4.05" fill="#1f7ec5"/><rect x="11.4" y="11" width="1.25" height="3.1" fill="#fff"/><circle cx="12.02" cy="9.5" r="0.8" fill="#fff"/></svg>
<div style="left:681px;top:606px;width:127px;height:27px;overflow:hidden;">
<span style="top:6.2px;font-size:13px;line-height:17px;color:#828282;left:24px;letter-spacing:0.134px;">- Use the 'Additio</span>
</div>
<span style="top:612.2px;font-size:13px;line-height:17px;color:#111;left:811px;letter-spacing:-1.031px;">US</span>
<div style="left:865px;top:606px;width:149px;height:27px;overflow:hidden;">
<span style="top:6.2px;font-size:13px;line-height:17px;color:#111;left:2px;letter-spacing:-0.247px;">Remote_Help_AddOn</span>
</div>
<svg style="left:1017.5999999999999px;top:610.5px;" width="18" height="18" viewBox="0 0 18 18"><path d="M7.6 3.6C5.6 2.6 3.2 3.2 3.2 5C3.2 7.4 7.3 6.6 7 9" fill="none" stroke="#fff" stroke-width="3.4" stroke-linecap="round"/><path d="M7.6 3.6C5.6 2.6 3.2 3.2 3.2 5C3.2 7.4 7.3 6.6 7 9" fill="none" stroke="#575757" stroke-width="1.7" stroke-linecap="round"/><path d="M4.6 1.4L5.2 3" stroke="#575757" stroke-width="1.3"/><path d="M2.6 12L4.4 11.6L5.6 13.8" fill="none" stroke="#fff" stroke-width="2.6"/><path d="M2.6 12L4.4 11.6L5.6 13.8" fill="none" stroke="#575757" stroke-width="1.2"/><circle cx="12" cy="11.6" r="4.9" fill="#fff"/><circle cx="12" cy="11.6" r="4.05" fill="#1f7ec5"/><rect x="11.4" y="11" width="1.25" height="3.1" fill="#fff"/><circle cx="12.02" cy="9.5" r="0.8" fill="#fff"/></svg>
<div style="left:1017px;top:606px;width:62px;height:27px;overflow:hidden;">
<span style="top:6.2px;font-size:13px;line-height:17px;color:#828282;left:24.5px;letter-spacing:-0.018px;">- Set li</span>
</div>
<div style="left:0px;top:661px;width:1080px;height:1px;background:#f0f0f0;"></div>
<div style="left:560px;top:634px;width:25px;height:27px;background:#ededed;"></div>
<div style="left:681px;top:634px;width:128px;height:27px;background:#d9d9d9;"></div>
<div style="left:1017px;top:634px;width:63px;height:27px;background:#d9d9d9;"></div>
<div style="left:19px;top:634px;width:1px;height:28px;background:#f0f0f0;"></div>
<div style="left:39px;top:634px;width:1px;height:28px;background:#f0f0f0;"></div>
<div style="left:495px;top:634px;width:1px;height:28px;background:#f0f0f0;"></div>
<div style="left:559px;top:634px;width:1px;height:28px;background:#f0f0f0;"></div>
<div style="left:584px;top:634px;width:1px;height:28px;background:#f0f0f0;"></div>
<div style="left:680px;top:634px;width:1px;height:28px;background:#f0f0f0;"></div>
<div style="left:808px;top:634px;width:1px;height:28px;background:#f0f0f0;"></div>
<div style="left:864px;top:634px;width:1px;height:28px;background:#f0f0f0;"></div>
<div style="left:1016px;top:634px;width:1px;height:28px;background:#f0f0f0;"></div>
<svg style="left:21px;top:639.2px;" width="18" height="18" viewBox="0 0 18 18"><path d="M2.2 16.2C2.2 12.8 5 11.4 9 11.4C13 11.4 15.8 12.8 15.8 16.2Z" fill="#2f86c6"/><circle cx="9" cy="6.5" r="3.9" fill="#2f86c6"/></svg>
<span style="top:640.2px;font-size:13px;line-height:17px;color:#111;left:67px;letter-spacing:0.050px;">Magdalena Haas</span>
<span style="top:640.2px;font-size:13px;line-height:17px;color:#111;left:243px;letter-spacing:-0.012px;">Magdalena.Haas@sygx2.onmicrosoft.com</span>
<span style="top:640.2px;font-size:13px;line-height:17px;color:#111;left:499.29999999999995px;letter-spacing:0.135px;">Member</span>
<svg style="left:566.5px;top:641.9000000000001px;" width="13" height="13" viewBox="0 0 13 13"><rect x="0.5" y="0.5" width="12" height="12" fill="#f7f7f7" stroke="#c6c6c6"/><path d="M3 6.6L5.4 9.4L10 2.8" fill="none" stroke="#b0b0b0" stroke-width="1.5"/></svg>
<svg style="left:587px;top:640.2px;" width="16" height="16" viewBox="0 0 16 16"><circle cx="8" cy="8" r="6.9" fill="#da5032"/><rect x="3.6" y="6.8" width="8.8" height="2.4" rx="0.4" fill="#fff"/></svg>
<span style="top:640.2px;font-size:13px;line-height:17px;color:#111;left:605.5px;letter-spacing:-0.250px;">Blocked</span>
<svg style="left:682px;top:638.5px;" width="18" height="18" viewBox="0 0 18 18"><path d="M5.5 1.8H9.4V8.2L12.6 5.3V9.6L7.5 14.6L1.9 9V4.9L5.5 8.2Z" fill="#696969" stroke="#fff" stroke-width="1.5" paint-order="stroke"/><circle cx="13.2" cy="6" r="0.6" fill="#222"/><circle cx="12" cy="11.6" r="4.9" fill="#fff"/><circle cx="12" cy="11.6" r="4.05" fill="#1f7ec5"/><rect x="11.4" y="11" width="1.25" height="3.1" fill="#fff"/><circle cx="12.02" cy="9.5" r="0.8" fill="#fff"/></svg>
<div style="left:681px;top:634px;width:127px;height:27px;overflow:hidden;">
<span style="top:6.2px;font-size:13px;line-height:17px;color:#828282;left:24px;letter-spacing:0.134px;">- Use the 'Additio</span>
</div>
<span style="top:640.2px;font-size:13px;line-height:17px;color:#111;left:811px;letter-spacing:-1.031px;">US</span>
<div style="left:865px;top:634px;width:149px;height:27px;overflow:hidden;">
<span style="top:6.2px;font-size:13px;line-height:17px;color:#111;left:2px;letter-spacing:-0.247px;">Remote_Help_AddOn</span>
</div>
<svg style="left:1017.5999999999999px;top:638.5px;" width="18" height="18" viewBox="0 0 18 18"><path d="M7.6 3.6C5.6 2.6 3.2 3.2 3.2 5C3.2 7.4 7.3 6.6 7 9" fill="none" stroke="#fff" stroke-width="3.4" stroke-linecap="round"/><path d="M7.6 3.6C5.6 2.6 3.2 3.2 3.2 5C3.2 7.4 7.3 6.6 7 9" fill="none" stroke="#575757" stroke-width="1.7" stroke-linecap="round"/><path d="M4.6 1.4L5.2 3" stroke="#575757" stroke-width="1.3"/><path d="M2.6 12L4.4 11.6L5.6 13.8" fill="none" stroke="#fff" stroke-width="2.6"/><path d="M2.6 12L4.4 11.6L5.6 13.8" fill="none" stroke="#575757" stroke-width="1.2"/><circle cx="12" cy="11.6" r="4.9" fill="#fff"/><circle cx="12" cy="11.6" r="4.05" fill="#1f7ec5"/><rect x="11.4" y="11" width="1.25" height="3.1" fill="#fff"/><circle cx="12.02" cy="9.5" r="0.8" fill="#fff"/></svg>
<div style="left:1017px;top:634px;width:62px;height:27px;overflow:hidden;">
<span style="top:6.2px;font-size:13px;line-height:17px;color:#828282;left:24.5px;letter-spacing:-0.018px;">- Set li</span>
</div>
<div style="left:0px;top:689px;width:1080px;height:1px;background:#f0f0f0;"></div>
<div style="left:560px;top:662px;width:25px;height:27px;background:#ededed;"></div>
<div style="left:681px;top:662px;width:128px;height:27px;background:#d9d9d9;"></div>
<div style="left:1017px;top:662px;width:63px;height:27px;background:#d9d9d9;"></div>
<div style="left:19px;top:662px;width:1px;height:28px;background:#f0f0f0;"></div>
<div style="left:39px;top:662px;width:1px;height:28px;background:#f0f0f0;"></div>
<div style="left:495px;top:662px;width:1px;height:28px;background:#f0f0f0;"></div>
<div style="left:559px;top:662px;width:1px;height:28px;background:#f0f0f0;"></div>
<div style="left:584px;top:662px;width:1px;height:28px;background:#f0f0f0;"></div>
<div style="left:680px;top:662px;width:1px;height:28px;background:#f0f0f0;"></div>
<div style="left:808px;top:662px;width:1px;height:28px;background:#f0f0f0;"></div>
<div style="left:864px;top:662px;width:1px;height:28px;background:#f0f0f0;"></div>
<div style="left:1016px;top:662px;width:1px;height:28px;background:#f0f0f0;"></div>
<svg style="left:21px;top:667.2px;" width="18" height="18" viewBox="0 0 18 18"><path d="M2.2 16.2C2.2 12.8 5 11.4 9 11.4C13 11.4 15.8 12.8 15.8 16.2Z" fill="#2f86c6"/><circle cx="9" cy="6.5" r="3.9" fill="#2f86c6"/></svg>
<span style="top:668.2px;font-size:13px;line-height:17px;color:#111;left:67px;letter-spacing:-0.087px;">Makena Solis</span>
<span style="top:668.2px;font-size:13px;line-height:17px;color:#111;left:243px;letter-spacing:-0.064px;">Makena.Solis@sygx2.onmicrosoft.com</span>
<span style="top:668.2px;font-size:13px;line-height:17px;color:#111;left:499.29999999999995px;letter-spacing:0.135px;">Member</span>
<svg style="left:566.5px;top:669.9000000000001px;" width="13" height="13" viewBox="0 0 13 13"><rect x="0.5" y="0.5" width="12" height="12" fill="#f7f7f7" stroke="#c6c6c6"/><path d="M3 6.6L5.4 9.4L10 2.8" fill="none" stroke="#b0b0b0" stroke-width="1.5"/></svg>
<svg style="left:587px;top:668.2px;" width="16" height="16" viewBox="0 0 16 16"><circle cx="8" cy="8" r="6.9" fill="#da5032"/><rect x="3.6" y="6.8" width="8.8" height="2.4" rx="0.4" fill="#fff"/></svg>
<span style="top:668.2px;font-size:13px;line-height:17px;color:#111;left:605.5px;letter-spacing:-0.250px;">Blocked</span>
<svg style="left:682px;top:666.5px;" width="18" height="18" viewBox="0 0 18 18"><path d="M5.5 1.8H9.4V8.2L12.6 5.3V9.6L7.5 14.6L1.9 9V4.9L5.5 8.2Z" fill="#696969" stroke="#fff" stroke-width="1.5" paint-order="stroke"/><circle cx="13.2" cy="6" r="0.6" fill="#222"/><circle cx="12" cy="11.6" r="4.9" fill="#fff"/><circle cx="12" cy="11.6" r="4.05" fill="#1f7ec5"/><rect x="11.4" y="11" width="1.25" height="3.1" fill="#fff"/><circle cx="12.02" cy="9.5" r="0.8" fill="#fff"/></svg>
<div style="left:681px;top:662px;width:127px;height:27px;overflow:hidden;">
<span style="top:6.2px;font-size:13px;line-height:17px;color:#828282;left:24px;letter-spacing:0.134px;">- Use the 'Additio</span>
</div>
<span style="top:668.2px;font-size:13px;line-height:17px;color:#111;left:811px;letter-spacing:-1.031px;">US</span>
<div style="left:865px;top:662px;width:149px;height:27px;overflow:hidden;">
<span style="top:6.2px;font-size:13px;line-height:17px;color:#111;left:2px;letter-spacing:-0.247px;">Remote_Help_AddOn</span>
</div>
<svg style="left:1017.5999999999999px;top:666.5px;" width="18" height="18" viewBox="0 0 18 18"><path d="M7.6 3.6C5.6 2.6 3.2 3.2 3.2 5C3.2 7.4 7.3 6.6 7 9" fill="none" stroke="#fff" stroke-width="3.4" stroke-linecap="round"/><path d="M7.6 3.6C5.6 2.6 3.2 3.2 3.2 5C3.2 7.4 7.3 6.6 7 9" fill="none" stroke="#575757" stroke-width="1.7" stroke-linecap="round"/><path d="M4.6 1.4L5.2 3" stroke="#575757" stroke-width="1.3"/><path d="M2.6 12L4.4 11.6L5.6 13.8" fill="none" stroke="#fff" stroke-width="2.6"/><path d="M2.6 12L4.4 11.6L5.6 13.8" fill="none" stroke="#575757" stroke-width="1.2"/><circle cx="12" cy="11.6" r="4.9" fill="#fff"/><circle cx="12" cy="11.6" r="4.05" fill="#1f7ec5"/><rect x="11.4" y="11" width="1.25" height="3.1" fill="#fff"/><circle cx="12.02" cy="9.5" r="0.8" fill="#fff"/></svg>
<div style="left:1017px;top:662px;width:62px;height:27px;overflow:hidden;">
<span style="top:6.2px;font-size:13px;line-height:17px;color:#828282;left:24.5px;letter-spacing:-0.018px;">- Set li</span>
</div>
<div style="left:0px;top:717px;width:1080px;height:1px;background:#f0f0f0;"></div>
<div style="left:560px;top:690px;width:25px;height:27px;background:#ededed;"></div>
<div style="left:681px;top:690px;width:128px;height:27px;background:#d9d9d9;"></div>
<div style="left:1017px;top:690px;width:63px;height:27px;background:#d9d9d9;"></div>
<div style="left:19px;top:690px;width:1px;height:28px;background:#f0f0f0;"></div>
<div style="left:39px;top:690px;width:1px;height:28px;background:#f0f0f0;"></div>
<div style="left:495px;top:690px;width:1px;height:28px;background:#f0f0f0;"></div>
<div style="left:559px;top:690px;width:1px;height:28px;background:#f0f0f0;"></div>
<div style="left:584px;top:690px;width:1px;height:28px;background:#f0f0f0;"></div>
<div style="left:680px;top:690px;width:1px;height:28px;background:#f0f0f0;"></div>
<div style="left:808px;top:690px;width:1px;height:28px;background:#f0f0f0;"></div>
<div style="left:864px;top:690px;width:1px;height:28px;background:#f0f0f0;"></div>
<div style="left:1016px;top:690px;width:1px;height:28px;background:#f0f0f0;"></div>
<svg style="left:21px;top:695.2px;" width="18" height="18" viewBox="0 0 18 18"><path d="M2.2 16.2C2.2 12.8 5 11.4 9 11.4C13 11.4 15.8 12.8 15.8 16.2Z" fill="#2f86c6"/><circle cx="9" cy="6.5" r="3.9" fill="#2f86c6"/></svg>
<span style="top:696.2px;font-size:13px;line-height:17px;color:#111;left:67px;letter-spacing:0.156px;">Matthew Proctor</span>
<span style="top:696.2px;font-size:13px;line-height:17px;color:#111;left:243px;letter-spacing:0.052px;">Matthew.Proctor@sygx2.onmicrosoft.com</span>
<span style="top:696.2px;font-size:13px;line-height:17px;color:#111;left:499.29999999999995px;letter-spacing:0.135px;">Member</span>
<svg style="left:566.5px;top:697.9000000000001px;" width="13" height="13" viewBox="0 0 13 13"><rect x="0.5" y="0.5" width="12" height="12" fill="#f7f7f7" stroke="#c6c6c6"/><path d="M3 6.6L5.4 9.4L10 2.8" fill="none" stroke="#b0b0b0" stroke-width="1.5"/></svg>
<svg style="left:587px;top:696.2px;" width="16" height="16" viewBox="0 0 16 16"><circle cx="8" cy="8" r="6.9" fill="#da5032"/><rect x="3.6" y="6.8" width="8.8" height="2.4" rx="0.4" fill="#fff"/></svg>
<span style="top:696.2px;font-size:13px;line-height:17px;color:#111;left:605.5px;letter-spacing:-0.250px;">Blocked</span>
<svg style="left:682px;top:694.5px;" width="18" height="18" viewBox="0 0 18 18"><path d="M5.5 1.8H9.4V8.2L12.6 5.3V9.6L7.5 14.6L1.9 9V4.9L5.5 8.2Z" fill="#696969" stroke="#fff" stroke-width="1.5" paint-order="stroke"/><circle cx="13.2" cy="6" r="0.6" fill="#222"/><circle cx="12" cy="11.6" r="4.9" fill="#fff"/><circle cx="12" cy="11.6" r="4.05" fill="#1f7ec5"/><rect x="11.4" y="11" width="1.25" height="3.1" fill="#fff"/><circle cx="12.02" cy="9.5" r="0.8" fill="#fff"/></svg>
<div style="left:681px;top:690px;width:127px;height:27px;overflow:hidden;">
<span style="top:6.2px;font-size:13px;line-height:17px;color:#828282;left:24px;letter-spacing:0.134px;">- Use the 'Additio</span>
</div>
<span style="top:696.2px;font-size:13px;line-height:17px;color:#111;left:811px;letter-spacing:-1.031px;">US</span>
<div style="left:865px;top:690px;width:149px;height:27px;overflow:hidden;">
<span style="top:6.2px;font-size:13px;line-height:17px;color:#111;left:2px;letter-spacing:-0.247px;">Remote_Help_AddOn</span>
</div>
<svg style="left:1017.5999999999999px;top:694.5px;" width="18" height="18" viewBox="0 0 18 18"><path d="M7.6 3.6C5.6 2.6 3.2 3.2 3.2 5C3.2 7.4 7.3 6.6 7 9" fill="none" stroke="#fff" stroke-width="3.4" stroke-linecap="round"/><path d="M7.6 3.6C5.6 2.6 3.2 3.2 3.2 5C3.2 7.4 7.3 6.6 7 9" fill="none" stroke="#575757" stroke-width="1.7" stroke-linecap="round"/><path d="M4.6 1.4L5.2 3" stroke="#575757" stroke-width="1.3"/><path d="M2.6 12L4.4 11.6L5.6 13.8" fill="none" stroke="#fff" stroke-width="2.6"/><path d="M2.6 12L4.4 11.6L5.6 13.8" fill="none" stroke="#575757" stroke-width="1.2"/><circle cx="12" cy="11.6" r="4.9" fill="#fff"/><circle cx="12" cy="11.6" r="4.05" fill="#1f7ec5"/><rect x="11.4" y="11" width="1.25" height="3.1" fill="#fff"/><circle cx="12.02" cy="9.5" r="0.8" fill="#fff"/></svg>
<div style="left:1017px;top:690px;width:62px;height:27px;overflow:hidden;">
<span style="top:6.2px;font-size:13px;line-height:17px;color:#828282;left:24.5px;letter-spacing:-0.018px;">- Set li</span>
</div>
<div style="left:0px;top:745px;width:1080px;height:1px;background:#f0f0f0;"></div>
<div style="left:560px;top:718px;width:25px;height:27px;background:#ededed;"></div>
<div style="left:681px;top:718px;width:128px;height:27px;background:#d9d9d9;"></div>
<div style="left:1017px;top:718px;width:63px;height:27px;background:#d9d9d9;"></div>
<div style="left:19px;top:718px;width:1px;height:28px;background:#f0f0f0;"></div>
<div style="left:39px;top:718px;width:1px;height:28px;background:#f0f0f0;"></div>
<div style="left:495px;top:718px;width:1px;height:28px;background:#f0f0f0;"></div>
<div style="left:559px;top:718px;width:1px;height:28px;background:#f0f0f0;"></div>
<div style="left:584px;top:718px;width:1px;height:28px;background:#f0f0f0;"></div>
<div style="left:680px;top:718px;width:1px;height:28px;background:#f0f0f0;"></div>
<div style="left:808px;top:718px;width:1px;height:28px;background:#f0f0f0;"></div>
<div style="left:864px;top:718px;width:1px;height:28px;background:#f0f0f0;"></div>
<div style="left:1016px;top:718px;width:1px;height:28px;background:#f0f0f0;"></div>
<svg style="left:21px;top:723.2px;" width="18" height="18" viewBox="0 0 18 18"><path d="M2.2 16.2C2.2 12.8 5 11.4 9 11.4C13 11.4 15.8 12.8 15.8 16.2Z" fill="#2f86c6"/><circle cx="9" cy="6.5" r="3.9" fill="#2f86c6"/></svg>
<span style="top:724.2px;font-size:13px;line-height:17px;color:#111;left:67px;letter-spacing:0.217px;">Mister Test</span>
<span style="top:724.2px;font-size:13px;line-height:17px;color:#111;left:243px;letter-spacing:-0.110px;">mister_test@ovh.ytria.io</span>
<span style="top:724.2px;font-size:13px;line-height:17px;color:#111;left:499.29999999999995px;letter-spacing:0.135px;">Member</span>
<svg style="left:566.5px;top:725.9000000000001px;" width="13" height="13" viewBox="0 0 13 13"><rect x="0.5" y="0.5" width="12" height="12" fill="#f7f7f7" stroke="#c6c6c6"/><path d="M3 6.6L5.4 9.4L10 2.8" fill="none" stroke="#b0b0b0" stroke-width="1.5"/></svg>
<svg style="left:587px;top:724.2px;" width="16" height="16" viewBox="0 0 16 16"><circle cx="8" cy="8" r="6.9" fill="#da5032"/><rect x="3.6" y="6.8" width="8.8" height="2.4" rx="0.4" fill="#fff"/></svg>
<span style="top:724.2px;font-size:13px;line-height:17px;color:#111;left:605.5px;letter-spacing:-0.250px;">Blocked</span>
<svg style="left:682px;top:722.5px;" width="18" height="18" viewBox="0 0 18 18"><path d="M5.5 1.8H9.4V8.2L12.6 5.3V9.6L7.5 14.6L1.9 9V4.9L5.5 8.2Z" fill="#696969" stroke="#fff" stroke-width="1.5" paint-order="stroke"/><circle cx="13.2" cy="6" r="0.6" fill="#222"/><circle cx="12" cy="11.6" r="4.9" fill="#fff"/><circle cx="12" cy="11.6" r="4.05" fill="#1f7ec5"/><rect x="11.4" y="11" width="1.25" height="3.1" fill="#fff"/><circle cx="12.02" cy="9.5" r="0.8" fill="#fff"/></svg>
<div style="left:681px;top:718px;width:127px;height:27px;overflow:hidden;">
<span style="top:6.2px;font-size:13px;line-height:17px;color:#828282;left:24px;letter-spacing:0.134px;">- Use the 'Additio</span>
</div>
<span style="top:724.2px;font-size:13px;line-height:17px;color:#111;left:811px;letter-spacing:-1.031px;">US</span>
<div style="left:865px;top:718px;width:149px;height:27px;overflow:hidden;">
<span style="top:6.2px;font-size:13px;line-height:17px;color:#111;left:2px;letter-spacing:-0.247px;">Remote_Help_AddOn</span>
</div>
<svg style="left:1017.5999999999999px;top:722.5px;" width="18" height="18" viewBox="0 0 18 18"><path d="M7.6 3.6C5.6 2.6 3.2 3.2 3.2 5C3.2 7.4 7.3 6.6 7 9" fill="none" stroke="#fff" stroke-width="3.4" stroke-linecap="round"/><path d="M7.6 3.6C5.6 2.6 3.2 3.2 3.2 5C3.2 7.4 7.3 6.6 7 9" fill="none" stroke="#575757" stroke-width="1.7" stroke-linecap="round"/><path d="M4.6 1.4L5.2 3" stroke="#575757" stroke-width="1.3"/><path d="M2.6 12L4.4 11.6L5.6 13.8" fill="none" stroke="#fff" stroke-width="2.6"/><path d="M2.6 12L4.4 11.6L5.6 13.8" fill="none" stroke="#575757" stroke-width="1.2"/><circle cx="12" cy="11.6" r="4.9" fill="#fff"/><circle cx="12" cy="11.6" r="4.05" fill="#1f7ec5"/><rect x="11.4" y="11" width="1.25" height="3.1" fill="#fff"/><circle cx="12.02" cy="9.5" r="0.8" fill="#fff"/></svg>
<div style="left:1017px;top:718px;width:62px;height:27px;overflow:hidden;">
<span style="top:6.2px;font-size:13px;line-height:17px;color:#828282;left:24.5px;letter-spacing:-0.018px;">- Set li</span>
</div>
<div style="left:0px;top:773px;width:1080px;height:1px;background:#f0f0f0;"></div>
<div style="left:560px;top:746px;width:25px;height:27px;background:#ededed;"></div>
<div style="left:681px;top:746px;width:128px;height:27px;background:#d9d9d9;"></div>
<div style="left:1017px;top:746px;width:63px;height:27px;background:#d9d9d9;"></div>
<div style="left:19px;top:746px;width:1px;height:28px;background:#f0f0f0;"></div>
<div style="left:39px;top:746px;width:1px;height:28px;background:#f0f0f0;"></div>
<div style="left:495px;top:746px;width:1px;height:28px;background:#f0f0f0;"></div>
<div style="left:559px;top:746px;width:1px;height:28px;background:#f0f0f0;"></div>
<div style="left:584px;top:746px;width:1px;height:28px;background:#f0f0f0;"></div>
<div style="left:680px;top:746px;width:1px;height:28px;background:#f0f0f0;"></div>
<div style="left:808px;top:746px;width:1px;height:28px;background:#f0f0f0;"></div>
<div style="left:864px;top:746px;width:1px;height:28px;background:#f0f0f0;"></div>
<div style="left:1016px;top:746px;width:1px;height:28px;background:#f0f0f0;"></div>
<svg style="left:21px;top:751.2px;" width="18" height="18" viewBox="0 0 18 18"><path d="M2.2 16.2C2.2 12.8 5 11.4 9 11.4C13 11.4 15.8 12.8 15.8 16.2Z" fill="#2f86c6"/><circle cx="9" cy="6.5" r="3.9" fill="#2f86c6"/></svg>
<span style="top:752.2px;font-size:13px;line-height:17px;color:#111;left:67px;letter-spacing:0.081px;">Naomi Rich</span>
<span style="top:752.2px;font-size:13px;line-height:17px;color:#111;left:243px;letter-spacing:-0.042px;">Naomi.Rich@sygx2.onmicrosoft.com</span>
<span style="top:752.2px;font-size:13px;line-height:17px;color:#111;left:499.29999999999995px;letter-spacing:0.135px;">Member</span>
<svg style="left:566.5px;top:753.9000000000001px;" width="13" height="13" viewBox="0 0 13 13"><rect x="0.5" y="0.5" width="12" height="12" fill="#f7f7f7" stroke="#c6c6c6"/><path d="M3 6.6L5.4 9.4L10 2.8" fill="none" stroke="#b0b0b0" stroke-width="1.5"/></svg>
<svg style="left:587px;top:752.2px;" width="16" height="16" viewBox="0 0 16 16"><circle cx="8" cy="8" r="6.9" fill="#da5032"/><rect x="3.6" y="6.8" width="8.8" height="2.4" rx="0.4" fill="#fff"/></svg>
<span style="top:752.2px;font-size:13px;line-height:17px;color:#111;left:605.5px;letter-spacing:-0.250px;">Blocked</span>
<svg style="left:682px;top:750.5px;" width="18" height="18" viewBox="0 0 18 18"><path d="M5.5 1.8H9.4V8.2L12.6 5.3V9.6L7.5 14.6L1.9 9V4.9L5.5 8.2Z" fill="#696969" stroke="#fff" stroke-width="1.5" paint-order="stroke"/><circle cx="13.2" cy="6" r="0.6" fill="#222"/><circle cx="12" cy="11.6" r="4.9" fill="#fff"/><circle cx="12" cy="11.6" r="4.05" fill="#1f7ec5"/><rect x="11.4" y="11" width="1.25" height="3.1" fill="#fff"/><circle cx="12.02" cy="9.5" r="0.8" fill="#fff"/></svg>
<div style="left:681px;top:746px;width:127px;height:27px;overflow:hidden;">
<span style="top:6.2px;font-size:13px;line-height:17px;color:#828282;left:24px;letter-spacing:0.134px;">- Use the 'Additio</span>
</div>
<span style="top:752.2px;font-size:13px;line-height:17px;color:#111;left:811px;letter-spacing:-1.031px;">US</span>
<div style="left:865px;top:746px;width:149px;height:27px;overflow:hidden;">
<span style="top:6.2px;font-size:13px;line-height:17px;color:#111;left:2px;letter-spacing:-0.247px;">Remote_Help_AddOn</span>
</div>
<svg style="left:1017.5999999999999px;top:750.5px;" width="18" height="18" viewBox="0 0 18 18"><path d="M7.6 3.6C5.6 2.6 3.2 3.2 3.2 5C3.2 7.4 7.3 6.6 7 9" fill="none" stroke="#fff" stroke-width="3.4" stroke-linecap="round"/><path d="M7.6 3.6C5.6 2.6 3.2 3.2 3.2 5C3.2 7.4 7.3 6.6 7 9" fill="none" stroke="#575757" stroke-width="1.7" stroke-linecap="round"/><path d="M4.6 1.4L5.2 3" stroke="#575757" stroke-width="1.3"/><path d="M2.6 12L4.4 11.6L5.6 13.8" fill="none" stroke="#fff" stroke-width="2.6"/><path d="M2.6 12L4.4 11.6L5.6 13.8" fill="none" stroke="#575757" stroke-width="1.2"/><circle cx="12" cy="11.6" r="4.9" fill="#fff"/><circle cx="12" cy="11.6" r="4.05" fill="#1f7ec5"/><rect x="11.4" y="11" width="1.25" height="3.1" fill="#fff"/><circle cx="12.02" cy="9.5" r="0.8" fill="#fff"/></svg>
<div style="left:1017px;top:746px;width:62px;height:27px;overflow:hidden;">
<span style="top:6.2px;font-size:13px;line-height:17px;color:#828282;left:24.5px;letter-spacing:-0.018px;">- Set li</span>
</div>
<div style="left:0px;top:801px;width:1080px;height:1px;background:#f0f0f0;"></div>
<div style="left:560px;top:774px;width:25px;height:27px;background:#ededed;"></div>
<div style="left:681px;top:774px;width:128px;height:27px;background:#d9d9d9;"></div>
<div style="left:19px;top:774px;width:1px;height:28px;background:#f0f0f0;"></div>
<div style="left:39px;top:774px;width:1px;height:28px;background:#f0f0f0;"></div>
<div style="left:495px;top:774px;width:1px;height:28px;background:#f0f0f0;"></div>
<div style="left:559px;top:774px;width:1px;height:28px;background:#f0f0f0;"></div>
<div style="left:584px;top:774px;width:1px;height:28px;background:#f0f0f0;"></div>
<div style="left:680px;top:774px;width:1px;height:28px;background:#f0f0f0;"></div>
<div style="left:808px;top:774px;width:1px;height:28px;background:#f0f0f0;"></div>
<div style="left:864px;top:774px;width:1px;height:28px;background:#f0f0f0;"></div>
<div style="left:1016px;top:774px;width:1px;height:28px;background:#f0f0f0;"></div>
<svg style="left:21px;top:779.2px;" width="18" height="18" viewBox="0 0 18 18"><path d="M2.2 16.2C2.2 12.8 5 11.4 9 11.4C13 11.4 15.8 12.8 15.8 16.2Z" fill="#2f86c6"/><circle cx="9" cy="6.5" r="3.9" fill="#2f86c6"/></svg>
<span style="top:780.2px;font-size:13px;line-height:17px;color:#111;left:67px;letter-spacing:0.007px;">Porter Kline</span>
<span style="top:780.2px;font-size:13px;line-height:17px;color:#111;left:243px;letter-spacing:-0.010px;">Porter.Kline@sygx2.onmicrosoft.com</span>
<span style="top:780.2px;font-size:13px;line-height:17px;color:#111;left:499.29999999999995px;letter-spacing:0.135px;">Member</span>
<svg style="left:566.5px;top:781.9000000000001px;" width="13" height="13" viewBox="0 0 13 13"><rect x="0.5" y="0.5" width="12" height="12" fill="#f7f7f7" stroke="#c6c6c6"/><path d="M3 6.6L5.4 9.4L10 2.8" fill="none" stroke="#b0b0b0" stroke-width="1.5"/></svg>
<svg style="left:587px;top:780.2px;" width="16" height="16" viewBox="0 0 16 16"><circle cx="8" cy="8" r="6.9" fill="#da5032"/><rect x="3.6" y="6.8" width="8.8" height="2.4" rx="0.4" fill="#fff"/></svg>
<span style="top:780.2px;font-size:13px;line-height:17px;color:#111;left:605.5px;letter-spacing:-0.250px;">Blocked</span>
<svg style="left:682px;top:778.5px;" width="18" height="18" viewBox="0 0 18 18"><path d="M5.5 1.8H9.4V8.2L12.6 5.3V9.6L7.5 14.6L1.9 9V4.9L5.5 8.2Z" fill="#696969" stroke="#fff" stroke-width="1.5" paint-order="stroke"/><circle cx="13.2" cy="6" r="0.6" fill="#222"/><circle cx="12" cy="11.6" r="4.9" fill="#fff"/><circle cx="12" cy="11.6" r="4.05" fill="#1f7ec5"/><rect x="11.4" y="11" width="1.25" height="3.1" fill="#fff"/><circle cx="12.02" cy="9.5" r="0.8" fill="#fff"/></svg>
<div style="left:681px;top:774px;width:127px;height:27px;overflow:hidden;">
<span style="top:6.2px;font-size:13px;line-height:17px;color:#828282;left:24px;letter-spacing:0.134px;">- Use the 'Additio</span>
</div>
<span style="top:780.2px;font-size:13px;line-height:17px;color:#111;left:811px;letter-spacing:-1.031px;">US</span>
<div style="left:865px;top:774px;width:149px;height:27px;overflow:hidden;">
<span style="top:6.2px;font-size:13px;line-height:17px;color:#111;left:2px;letter-spacing:-0.238px;">[2] Remote_Help_AddOn;I</span>
</div>
<span style="top:780.2px;font-size:13px;line-height:17px;color:#111;left:1019px;letter-spacing:0.320px;">[2]∅;∅</span>
<div style="left:0px;top:829px;width:1080px;height:1px;background:#f0f0f0;"></div>
<div style="left:560px;top:802px;width:25px;height:27px;background:#ededed;"></div>
<div style="left:681px;top:802px;width:128px;height:27px;background:#d9d9d9;"></div>
<div style="left:1017px;top:802px;width:63px;height:27px;background:#d9d9d9;"></div>
<div style="left:19px;top:802px;width:1px;height:28px;background:#f0f0f0;"></div>
<div style="left:39px;top:802px;width:1px;height:28px;background:#f0f0f0;"></div>
<div style="left:495px;top:802px;width:1px;height:28px;background:#f0f0f0;"></div>
<div style="left:559px;top:802px;width:1px;height:28px;background:#f0f0f0;"></div>
<div style="left:584px;top:802px;width:1px;height:28px;background:#f0f0f0;"></div>
<div style="left:680px;top:802px;width:1px;height:28px;background:#f0f0f0;"></div>
<div style="left:808px;top:802px;width:1px;height:28px;background:#f0f0f0;"></div>
<div style="left:864px;top:802px;width:1px;height:28px;background:#f0f0f0;"></div>
<div style="left:1016px;top:802px;width:1px;height:28px;background:#f0f0f0;"></div>
<svg style="left:21px;top:807.2px;" width="18" height="18" viewBox="0 0 18 18"><path d="M2.2 16.2C2.2 12.8 5 11.4 9 11.4C13 11.4 15.8 12.8 15.8 16.2Z" fill="#2f86c6"/><circle cx="9" cy="6.5" r="3.9" fill="#2f86c6"/></svg>
<span style="top:808.2px;font-size:13px;line-height:17px;color:#111;left:67px;letter-spacing:0.177px;">Raleigh Mills</span>
<span style="top:808.2px;font-size:13px;line-height:17px;color:#111;left:243px;letter-spacing:0.005px;">Raleigh.Mills@sygx2.onmicrosoft.com</span>
<span style="top:808.2px;font-size:13px;line-height:17px;color:#111;left:499.29999999999995px;letter-spacing:0.135px;">Member</span>
<svg style="left:566.5px;top:809.9000000000001px;" width="13" height="13" viewBox="0 0 13 13"><rect x="0.5" y="0.5" width="12" height="12" fill="#f7f7f7" stroke="#c6c6c6"/><path d="M3 6.6L5.4 9.4L10 2.8" fill="none" stroke="#b0b0b0" stroke-width="1.5"/></svg>
<svg style="left:587px;top:808.2px;" width="16" height="16" viewBox="0 0 16 16"><circle cx="8" cy="8" r="6.9" fill="#da5032"/><rect x="3.6" y="6.8" width="8.8" height="2.4" rx="0.4" fill="#fff"/></svg>
<span style="top:808.2px;font-size:13px;line-height:17px;color:#111;left:605.5px;letter-spacing:-0.250px;">Blocked</span>
<svg style="left:682px;top:806.5px;" width="18" height="18" viewBox="0 0 18 18"><path d="M5.5 1.8H9.4V8.2L12.6 5.3V9.6L7.5 14.6L1.9 9V4.9L5.5 8.2Z" fill="#696969" stroke="#fff" stroke-width="1.5" paint-order="stroke"/><circle cx="13.2" cy="6" r="0.6" fill="#222"/><circle cx="12" cy="11.6" r="4.9" fill="#fff"/><circle cx="12" cy="11.6" r="4.05" fill="#1f7ec5"/><rect x="11.4" y="11" width="1.25" height="3.1" fill="#fff"/><circle cx="12.02" cy="9.5" r="0.8" fill="#fff"/></svg>
<div style="left:681px;top:802px;width:127px;height:27px;overflow:hidden;">
<span style="top:6.2px;font-size:13px;line-height:17px;color:#828282;left:24px;letter-spacing:0.134px;">- Use the 'Additio</span>
</div>
<span style="top:808.2px;font-size:13px;line-height:17px;color:#111;left:811px;letter-spacing:-1.031px;">US</span>
<div style="left:865px;top:802px;width:149px;height:27px;overflow:hidden;">
<span style="top:6.2px;font-size:13px;line-height:17px;color:#111;left:2px;letter-spacing:-0.247px;">Remote_Help_AddOn</span>
</div>
<svg style="left:1017.5999999999999px;top:806.5px;" width="18" height="18" viewBox="0 0 18 18"><path d="M7.6 3.6C5.6 2.6 3.2 3.2 3.2 5C3.2 7.4 7.3 6.6 7 9" fill="none" stroke="#fff" stroke-width="3.4" stroke-linecap="round"/><path d="M7.6 3.6C5.6 2.6 3.2 3.2 3.2 5C3.2 7.4 7.3 6.6 7 9" fill="none" stroke="#575757" stroke-width="1.7" stroke-linecap="round"/><path d="M4.6 1.4L5.2 3" stroke="#575757" stroke-width="1.3"/><path d="M2.6 12L4.4 11.6L5.6 13.8" fill="none" stroke="#fff" stroke-width="2.6"/><path d="M2.6 12L4.4 11.6L5.6 13.8" fill="none" stroke="#575757" stroke-width="1.2"/><circle cx="12" cy="11.6" r="4.9" fill="#fff"/><circle cx="12" cy="11.6" r="4.05" fill="#1f7ec5"/><rect x="11.4" y="11" width="1.25" height="3.1" fill="#fff"/><circle cx="12.02" cy="9.5" r="0.8" fill="#fff"/></svg>
<div style="left:1017px;top:802px;width:62px;height:27px;overflow:hidden;">
<span style="top:6.2px;font-size:13px;line-height:17px;color:#828282;left:24.5px;letter-spacing:-0.018px;">- Set li</span>
</div>
<svg style="left:3px;top:779.9px;" width="14" height="14" viewBox="0 0 14 14"><circle cx="7" cy="7" r="6.2" fill="#fff" stroke="#8a8a8a" stroke-width="1.2"/><circle cx="7" cy="7" r="3.1" fill="#9c9c9c"/></svg>
<div style="left:64px;top:46px;width:1px;height:336px;background:#cfe3f7;"></div>
<div style="left:65px;top:382px;width:1px;height:432px;background:#2a7fd6;"></div>
<div style="left:239px;top:46px;width:2px;height:336px;background:#16344f;"></div>
<div style="left:239px;top:382px;width:2px;height:432px;background:#1f6fc4;"></div>
</div>
<div style="left:1858px;top:184px;width:17px;height:814px;background:#fff;"></div>
<svg style="left:1861px;top:189px;" width="10" height="6" viewBox="0 0 10 6"><path d="M0 6L5 0L10 6Z" fill="#3d4f6b"/></svg>
<div style="left:1859px;top:202px;width:14px;height:636px;background:#8c8c8c;"></div>
<svg style="left:1861px;top:986px;" width="10" height="6" viewBox="0 0 10 6"><path d="M0 0L5 6L10 0Z" fill="#3d4f6b"/></svg>
<div style="left:0px;top:184px;width:3px;height:813px;background:#fff;"></div>
<div style="left:2px;top:184px;width:1px;height:813px;background:#d6d6d6;"></div>
<div style="left:3px;top:184px;width:299px;height:813px;overflow:hidden;background:#f3fbfd;">
<div style="left:148px;top:1px;width:151px;height:44px;background:#f4f4f4;border-bottom:1px solid #dcdcdc;"></div>
<div style="left:0px;top:1px;width:148px;height:45px;background:#f3fbfd;border-radius:5px 5px 0 0;box-shadow:2px 0 4px rgba(0,0,0,0.13);"></div>
<div style="left:12px;top:43px;width:124px;height:3px;background:#9459a4;border-radius:2px;"></div>
<svg style="left:49px;top:19px;" width="11" height="10" viewBox="0 0 11 10"><g fill="#4c8f9b"><rect x="0" y="0" width="3" height="2.6" rx="0.5"/><rect x="4" y="0" width="7" height="2.6" rx="0.5"/><rect x="0" y="3.6" width="3" height="2.6" rx="0.5"/><rect x="4" y="3.6" width="7" height="2.6" rx="0.5"/><rect x="0" y="7.2" width="3" height="2.6" rx="0.5"/><rect x="4" y="7.2" width="7" height="2.6" rx="0.5"/></g></svg>
<span style="top:14.0px;font-size:15px;line-height:19px;color:#4c8f9b;font-weight:700;left:64.5px;letter-spacing:-1.153px;">Views</span>
<svg style="left:203px;top:17px;" width="10" height="12" viewBox="0 0 10 12"><path d="M0.7 0.7H6L9.3 4V11.3H0.7Z" fill="none" stroke="#666" stroke-width="1.1"/><path d="M6 0.7V4H9.3" fill="none" stroke="#666" stroke-width="0.9"/><path d="M3 9.5V6.5M5 9.5V5M7 9.5V7.5" stroke="#666" stroke-width="0.9"/></svg>
<span style="top:13.5px;font-size:15px;line-height:19px;color:#444;left:219px;letter-spacing:-1.172px;">Jobs</span>
<div style="left:8px;top:54px;width:122px;height:32px;background:#fff;border:1px solid #d9d9d9;border-radius:4px;"></div>
<span style="top:61.0px;font-size:14px;line-height:18px;color:#333;left:21.5px;letter-spacing:-0.051px;">Default</span>
<svg style="left:72px;top:67px;" width="9" height="6" viewBox="0 0 9 6"><path d="M0.8 0.8L4.5 4.6L8.2 0.8" fill="none" stroke="#444" stroke-width="1.1"/></svg>
<div style="left:138px;top:54px;width:32px;height:32px;background:#fff;border:1px solid #d9d9d9;border-radius:4px;"></div>
<svg style="left:144px;top:62px;" width="19" height="16" viewBox="0 0 19 16"><rect x="0.8" y="0.8" width="4" height="12.4" rx="1.6" fill="none" stroke="#222" stroke-width="1.3"/><rect x="6.8" y="0.8" width="4" height="12.4" rx="1.6" fill="none" stroke="#222" stroke-width="1.3"/><path d="M12.8 7V2.4A1.6 1.6 0 0 1 16.8 2.4V4" fill="none" stroke="#222" stroke-width="1.3"/><path d="M16.3 6.2L18.6 8.5L12.3 14.6L9.4 15.3L10.1 12.4Z" fill="#222"/></svg>
<div style="left:178px;top:54px;width:32px;height:32px;background:#fff;border:1px solid #d9d9d9;border-radius:4px;"></div>
<svg style="left:186px;top:61px;" width="16" height="17" viewBox="0 0 16 17"><path d="M3.2 5.2A6.2 6.2 0 1 1 2.2 11" fill="none" stroke="#222" stroke-width="1.3"/><path d="M3 1V5.6H7.6" fill="none" stroke="#222" stroke-width="1.3"/></svg>
<div style="left:218px;top:54px;width:32px;height:32px;background:#ececec;border:1px solid #e2e2e2;border-radius:4px;"></div>
<svg style="left:226px;top:62px;" width="16" height="16" viewBox="0 0 16 16"><path d="M1 2.5A1.5 1.5 0 0 1 2.5 1H11.5L15 4.5V13.5A1.5 1.5 0 0 1 13.5 15H2.5A1.5 1.5 0 0 1 1 13.5Z" fill="none" stroke="#c4c4c4" stroke-width="1.2"/><path d="M4.3 1V5.2H10.8V1M3.6 15V9.6H12.4V15" fill="none" stroke="#c4c4c4" stroke-width="1.2"/></svg>
<div style="left:258px;top:54px;width:32px;height:32px;background:#9459a4;border-radius:4px;"></div>
<svg style="left:265.5px;top:61.5px;" width="17" height="17" viewBox="0 0 17 17"><circle cx="8.5" cy="8.5" r="7.4" fill="none" stroke="#fff" stroke-width="1.4"/><path d="M8.5 4.8V12.2M4.8 8.5H12.2" stroke="#fff" stroke-width="1.5"/></svg>
<div style="left:8px;top:102px;width:32px;height:32px;background:#fff;border:1px solid #d9d9d9;border-radius:4px;"></div>
<svg style="left:16px;top:112px;" width="16" height="12" viewBox="0 0 16 12"><path d="M1 1.2H15M3.5 5.8H12.5M6 10.4H10" stroke="#222" stroke-width="1.3" stroke-linecap="round"/></svg>
<div style="left:48px;top:102px;width:242px;height:32px;background:#fff;border:1px solid #d9d9d9;border-radius:4px;"></div>
<svg style="left:59px;top:110px;" width="16" height="16" viewBox="0 0 16 16"><circle cx="6.4" cy="6.4" r="5.4" fill="none" stroke="#444" stroke-width="1.2"/><path d="M10.4 10.4L14.8 14.8" stroke="#444" stroke-width="1.3"/></svg>
<span style="top:108.5px;font-size:15px;line-height:19px;color:#777;left:83px;letter-spacing:-1.089px;">Search</span>
<div style="left:0px;top:142px;width:299px;height:42px;background:#e1f5fb;border-top:1px solid #d3ecf3;border-bottom:1px solid #cfe6ee;"></div>
<span style="top:145.5px;font-size:13px;line-height:17px;color:#5c9ba6;left:8px;letter-spacing:-0.366px;">Active view</span>
<span style="top:163.8px;font-size:14.5px;line-height:18.5px;color:#1f1f1f;font-weight:700;left:8px;letter-spacing:-0.446px;">Ytria default</span>
<svg style="left:283px;top:168px;" width="12" height="11" viewBox="0 0 12 11"><path d="M1 1L6 5.3L11 1M1 5.5L6 9.8L11 5.5" fill="none" stroke="#444" stroke-width="1.2"/></svg>
<div style="left:0px;top:184px;width:299px;height:588.5px;overflow:hidden;background:#fff;">
<div style="left:282px;top:0px;width:17px;height:589px;background:#fff;border-left:1px solid #e4e4e4;"></div>
<div style="left:287px;top:4px;width:7px;height:210px;background:#c9c9c9;"></div>
<div style="left:0px;top:0px;width:282px;height:68px;background:#f7eef8;"></div>
<div style="left:0px;top:68px;width:282px;height:1px;background:#e2e2e2;"></div>
<div style="left:9px;top:9px;width:22px;height:22px;background:#9459a4;border-radius:3px;"></div>
<svg style="left:13.5px;top:13px;" width="14" height="15" viewBox="0 0 14 15"><path d="M1.2 0.5V14.5" stroke="#fff" stroke-width="1.8"/><path d="M1.2 1.2H12.5L9.6 5.2L12.5 9.2H1.2Z" fill="#fff"/></svg>
<span style="top:8.8px;font-size:14.6px;line-height:18.6px;color:#3c3c3c;left:40.3px;letter-spacing:-0.030px;-webkit-text-stroke:0.22px #3c3c3c;">Ytria default</span>
<svg style="left:41.5px;top:38px;" width="12" height="11" viewBox="0 0 12 11"><path d="M6 0L7.7 3.8L11.8 4.2L8.7 6.9L9.6 11L6 8.8L2.4 11L3.3 6.9L0.2 4.2L4.3 3.8Z" fill="#b9b9b9"/></svg>
<svg style="left:59.5px;top:36.0px;" width="15" height="15" viewBox="0 0 15 15"><circle cx="7.5" cy="7.5" r="6.6" fill="#fff" stroke="#9459a4" stroke-width="1.4"/><path d="M3.4 11C3 7 4.2 5.4 5.3 5.4C6.6 5.4 7 8 6.6 12Z" fill="#9459a4"/><path d="M11.6 11C12 7 10.8 5.4 9.7 5.4C8.4 5.4 8 8 8.4 12Z" fill="#9459a4"/><circle cx="5.4" cy="4" r="1.1" fill="#9459a4"/><circle cx="9.6" cy="4" r="1.1" fill="#9459a4"/></svg>
<svg style="left:82px;top:39.5px;" width="11" height="9" viewBox="0 0 11 9"><path d="M0.8 0.8L4.8 4.5L0.8 8.2M6 0.8L10 4.5L6 8.2" fill="none" stroke="#9459a4" stroke-width="1.1"/></svg>
<div style="left:178px;top:36.60000000000002px;width:24px;height:23.4px;background:#fff;border:1px solid #d6d6d6;border-radius:3px;"></div>
<svg style="left:182px;top:40.5px;" width="16" height="16" viewBox="0 0 16 16"><circle cx="8" cy="8" r="7" fill="none" stroke="#9459a4" stroke-width="1.1"/><rect x="7.4" y="6.8" width="1.3" height="5" fill="#9459a4"/><circle cx="8.05" cy="4.7" r="0.9" fill="#9459a4"/></svg>
<div style="left:210px;top:36.60000000000002px;width:64px;height:23.4px;background:#fff;border:1px solid #dcc4e3;border-radius:3px;"></div>
<span style="top:40.0px;font-size:13px;line-height:17px;color:#8a4a9b;left:242px;transform:translateX(-50%);letter-spacing:-0.600px;-webkit-text-stroke:0.45px #8a4a9b;">Reapply</span>
<div style="left:0px;top:137px;width:282px;height:1px;background:#e2e2e2;"></div>
<div style="left:8px;top:78px;width:23px;height:23px;background:#fff;border:1px solid #dcc4e3;border-radius:4px;"></div>
<svg style="left:13px;top:83px;" width="14" height="13" viewBox="0 0 14 13"><rect x="0.8" y="0.8" width="12.4" height="11.4" rx="1.6" fill="none" stroke="#9459a4" stroke-width="1.3"/><path d="M0.8 4.6H13.2M0.8 8.4H13.2M5 0.8V12.2" stroke="#9459a4" stroke-width="1.2"/></svg>
<span style="top:77.8px;font-size:14.6px;line-height:18.6px;color:#3c3c3c;left:40.3px;letter-spacing:0.081px;-webkit-text-stroke:0.22px #3c3c3c;">A test</span>
<svg style="left:41.5px;top:107px;" width="12" height="11" viewBox="0 0 12 11"><path d="M6 0L7.7 3.8L11.8 4.2L8.7 6.9L9.6 11L6 8.8L2.4 11L3.3 6.9L0.2 4.2L4.3 3.8Z" fill="#b9b9b9"/></svg>
<svg style="left:60px;top:106px;" width="13" height="12" viewBox="0 0 13 12"><path d="M9 0.5L11.5 3L4.5 10L1 11.5L2.3 7.5Z" fill="#9459a4"/><circle cx="9.5" cy="7.5" r="1.6" fill="#9459a4"/><path d="M6.5 12C6.5 10 8 9.3 9.5 9.3C11 9.3 12.5 10 12.5 12Z" fill="#9459a4"/></svg>
<svg style="left:79px;top:106.5px;" width="12" height="12" viewBox="0 0 12 12"><circle cx="6" cy="6" r="5.3" fill="none" stroke="#c9a3d2" stroke-width="1"/><path d="M3.6 5.2A2.6 2.6 0 0 1 8.3 4.6M8.4 6.8A2.6 2.6 0 0 1 3.7 7.4" fill="none" stroke="#9459a4" stroke-width="1"/><path d="M7.6 3.2L8.8 4.9L6.9 5.3Z" fill="#9459a4"/><path d="M4.4 8.8L3.2 7.1L5.1 6.7Z" fill="#9459a4"/></svg>
<div style="left:178px;top:105.60000000000002px;width:24px;height:23.4px;background:#fff;border:1px solid #d6d6d6;border-radius:3px;"></div>
<svg style="left:182px;top:109.5px;" width="16" height="16" viewBox="0 0 16 16"><circle cx="8" cy="8" r="7" fill="none" stroke="#9459a4" stroke-width="1.1"/><rect x="7.4" y="6.8" width="1.3" height="5" fill="#9459a4"/><circle cx="8.05" cy="4.7" r="0.9" fill="#9459a4"/></svg>
<div style="left:210px;top:105.60000000000002px;width:64px;height:23.4px;background:#fff;border:1px solid #dcc4e3;border-radius:3px;"></div>
<span style="top:109.0px;font-size:13px;line-height:17px;color:#8a4a9b;left:242px;transform:translateX(-50%);letter-spacing:-0.106px;-webkit-text-stroke:0.45px #8a4a9b;">Apply</span>
<div style="left:0px;top:206px;width:282px;height:1px;background:#e2e2e2;"></div>
<div style="left:8px;top:147px;width:23px;height:23px;background:#fff;border:1px solid #dcc4e3;border-radius:4px;"></div>
<svg style="left:13px;top:152px;" width="14" height="13" viewBox="0 0 14 13"><rect x="0.8" y="0.8" width="12.4" height="11.4" rx="1.6" fill="none" stroke="#9459a4" stroke-width="1.3"/><path d="M0.8 4.6H13.2M0.8 8.4H13.2M5 0.8V12.2" stroke="#9459a4" stroke-width="1.2"/></svg>
<span style="top:146.8px;font-size:14.6px;line-height:18.6px;color:#3c3c3c;left:40.3px;letter-spacing:-0.204px;-webkit-text-stroke:0.22px #3c3c3c;">By license location</span>
<svg style="left:41.5px;top:176px;" width="12" height="11" viewBox="0 0 12 11"><path d="M6 0L7.7 3.8L11.8 4.2L8.7 6.9L9.6 11L6 8.8L2.4 11L3.3 6.9L0.2 4.2L4.3 3.8Z" fill="#b9b9b9"/></svg>
<svg style="left:59.5px;top:174.0px;" width="15" height="15" viewBox="0 0 15 15"><circle cx="7.5" cy="7.5" r="6.6" fill="#fff" stroke="#9459a4" stroke-width="1.4"/><path d="M3.4 11C3 7 4.2 5.4 5.3 5.4C6.6 5.4 7 8 6.6 12Z" fill="#9459a4"/><path d="M11.6 11C12 7 10.8 5.4 9.7 5.4C8.4 5.4 8 8 8.4 12Z" fill="#9459a4"/><circle cx="5.4" cy="4" r="1.1" fill="#9459a4"/><circle cx="9.6" cy="4" r="1.1" fill="#9459a4"/></svg>
<svg style="left:82px;top:175.5px;" width="12" height="12" viewBox="0 0 12 12"><circle cx="6" cy="6" r="5.3" fill="none" stroke="#c9a3d2" stroke-width="1"/><path d="M3.6 5.2A2.6 2.6 0 0 1 8.3 4.6M8.4 6.8A2.6 2.6 0 0 1 3.7 7.4" fill="none" stroke="#9459a4" stroke-width="1"/><path d="M7.6 3.2L8.8 4.9L6.9 5.3Z" fill="#9459a4"/><path d="M4.4 8.8L3.2 7.1L5.1 6.7Z" fill="#9459a4"/></svg>
<div style="left:178px;top:174.60000000000002px;width:24px;height:23.4px;background:#fff;border:1px solid #d6d6d6;border-radius:3px;"></div>
<svg style="left:182px;top:178.5px;" width="16" height="16" viewBox="0 0 16 16"><circle cx="8" cy="8" r="7" fill="none" stroke="#9459a4" stroke-width="1.1"/><rect x="7.4" y="6.8" width="1.3" height="5" fill="#9459a4"/><circle cx="8.05" cy="4.7" r="0.9" fill="#9459a4"/></svg>
<div style="left:210px;top:174.60000000000002px;width:64px;height:23.4px;background:#fff;border:1px solid #dcc4e3;border-radius:3px;"></div>
<span style="top:178.0px;font-size:13px;line-height:17px;color:#8a4a9b;left:242px;transform:translateX(-50%);letter-spacing:-0.106px;-webkit-text-stroke:0.45px #8a4a9b;">Apply</span>
<div style="left:0px;top:275px;width:282px;height:1px;background:#e2e2e2;"></div>
<div style="left:8px;top:216px;width:23px;height:23px;background:#fff;border:1px solid #dcc4e3;border-radius:4px;"></div>
<svg style="left:13px;top:221px;" width="14" height="13" viewBox="0 0 14 13"><rect x="0.8" y="0.8" width="12.4" height="11.4" rx="1.6" fill="none" stroke="#9459a4" stroke-width="1.3"/><path d="M0.8 4.6H13.2M0.8 8.4H13.2M5 0.8V12.2" stroke="#9459a4" stroke-width="1.2"/></svg>
<span style="top:215.8px;font-size:14.6px;line-height:18.6px;color:#3c3c3c;left:40.3px;letter-spacing:0.048px;-webkit-text-stroke:0.22px #3c3c3c;">Custom Attributes</span>
<svg style="left:41.5px;top:245px;" width="12" height="11" viewBox="0 0 12 11"><path d="M6 0L7.7 3.8L11.8 4.2L8.7 6.9L9.6 11L6 8.8L2.4 11L3.3 6.9L0.2 4.2L4.3 3.8Z" fill="#b9b9b9"/></svg>
<svg style="left:59.5px;top:243.0px;" width="15" height="15" viewBox="0 0 15 15"><circle cx="7.5" cy="7.5" r="6.6" fill="#fff" stroke="#9459a4" stroke-width="1.4"/><path d="M3.4 11C3 7 4.2 5.4 5.3 5.4C6.6 5.4 7 8 6.6 12Z" fill="#9459a4"/><path d="M11.6 11C12 7 10.8 5.4 9.7 5.4C8.4 5.4 8 8 8.4 12Z" fill="#9459a4"/><circle cx="5.4" cy="4" r="1.1" fill="#9459a4"/><circle cx="9.6" cy="4" r="1.1" fill="#9459a4"/></svg>
<svg style="left:82px;top:246.5px;" width="11" height="9" viewBox="0 0 11 9"><path d="M0.8 0.8L4.8 4.5L0.8 8.2M6 0.8L10 4.5L6 8.2" fill="none" stroke="#9459a4" stroke-width="1.1"/></svg>
<div style="left:178px;top:243.60000000000002px;width:24px;height:23.4px;background:#fff;border:1px solid #d6d6d6;border-radius:3px;"></div>
<svg style="left:182px;top:247.5px;" width="16" height="16" viewBox="0 0 16 16"><circle cx="8" cy="8" r="7" fill="none" stroke="#9459a4" stroke-width="1.1"/><rect x="7.4" y="6.8" width="1.3" height="5" fill="#9459a4"/><circle cx="8.05" cy="4.7" r="0.9" fill="#9459a4"/></svg>
<div style="left:210px;top:243.60000000000002px;width:64px;height:23.4px;background:#fff;border:1px solid #dcc4e3;border-radius:3px;"></div>
<span style="top:247.0px;font-size:13px;line-height:17px;color:#8a4a9b;left:242px;transform:translateX(-50%);letter-spacing:-0.106px;-webkit-text-stroke:0.45px #8a4a9b;">Apply</span>
<div style="left:0px;top:344px;width:282px;height:1px;background:#e2e2e2;"></div>
<div style="left:8px;top:285px;width:23px;height:23px;background:#fff;border:1px solid #dcc4e3;border-radius:4px;"></div>
<svg style="left:13px;top:290px;" width="14" height="13" viewBox="0 0 14 13"><rect x="0.8" y="0.8" width="12.4" height="11.4" rx="1.6" fill="none" stroke="#9459a4" stroke-width="1.3"/><path d="M0.8 4.6H13.2M0.8 8.4H13.2M5 0.8V12.2" stroke="#9459a4" stroke-width="1.2"/></svg>
<span style="top:284.8px;font-size:14.6px;line-height:18.6px;color:#3c3c3c;left:40.3px;letter-spacing:-0.209px;-webkit-text-stroke:0.22px #3c3c3c;">Domains of Email, Aliases and othe...</span>
<svg style="left:41.5px;top:314px;" width="12" height="11" viewBox="0 0 12 11"><path d="M6 0L7.7 3.8L11.8 4.2L8.7 6.9L9.6 11L6 8.8L2.4 11L3.3 6.9L0.2 4.2L4.3 3.8Z" fill="#b9b9b9"/></svg>
<svg style="left:59.5px;top:312.0px;" width="15" height="15" viewBox="0 0 15 15"><circle cx="7.5" cy="7.5" r="6.6" fill="#fff" stroke="#9459a4" stroke-width="1.4"/><path d="M3.4 11C3 7 4.2 5.4 5.3 5.4C6.6 5.4 7 8 6.6 12Z" fill="#9459a4"/><path d="M11.6 11C12 7 10.8 5.4 9.7 5.4C8.4 5.4 8 8 8.4 12Z" fill="#9459a4"/><circle cx="5.4" cy="4" r="1.1" fill="#9459a4"/><circle cx="9.6" cy="4" r="1.1" fill="#9459a4"/></svg>
<svg style="left:82px;top:313.5px;" width="12" height="12" viewBox="0 0 12 12"><circle cx="6" cy="6" r="5.3" fill="none" stroke="#c9a3d2" stroke-width="1"/><path d="M3.6 5.2A2.6 2.6 0 0 1 8.3 4.6M8.4 6.8A2.6 2.6 0 0 1 3.7 7.4" fill="none" stroke="#9459a4" stroke-width="1"/><path d="M7.6 3.2L8.8 4.9L6.9 5.3Z" fill="#9459a4"/><path d="M4.4 8.8L3.2 7.1L5.1 6.7Z" fill="#9459a4"/></svg>
<div style="left:178px;top:312.6px;width:24px;height:23.4px;background:#fff;border:1px solid #d6d6d6;border-radius:3px;"></div>
<svg style="left:182px;top:316.5px;" width="16" height="16" viewBox="0 0 16 16"><circle cx="8" cy="8" r="7" fill="none" stroke="#9459a4" stroke-width="1.1"/><rect x="7.4" y="6.8" width="1.3" height="5" fill="#9459a4"/><circle cx="8.05" cy="4.7" r="0.9" fill="#9459a4"/></svg>
<div style="left:210px;top:312.6px;width:64px;height:23.4px;background:#fff;border:1px solid #dcc4e3;border-radius:3px;"></div>
<span style="top:316.0px;font-size:13px;line-height:17px;color:#8a4a9b;left:242px;transform:translateX(-50%);letter-spacing:-0.106px;-webkit-text-stroke:0.45px #8a4a9b;">Apply</span>
<div style="left:0px;top:413px;width:282px;height:1px;background:#e2e2e2;"></div>
<div style="left:8px;top:354px;width:23px;height:23px;background:#fff;border:1px solid #dcc4e3;border-radius:4px;"></div>
<svg style="left:13px;top:359px;" width="14" height="13" viewBox="0 0 14 13"><rect x="0.8" y="0.8" width="12.4" height="11.4" rx="1.6" fill="none" stroke="#9459a4" stroke-width="1.3"/><path d="M0.8 4.6H13.2M0.8 8.4H13.2M5 0.8V12.2" stroke="#9459a4" stroke-width="1.2"/></svg>
<span style="top:353.8px;font-size:14.6px;line-height:18.6px;color:#3c3c3c;left:40.3px;letter-spacing:-0.332px;-webkit-text-stroke:0.22px #3c3c3c;">Email and smtp addresses</span>
<svg style="left:41.5px;top:383px;" width="12" height="11" viewBox="0 0 12 11"><path d="M6 0L7.7 3.8L11.8 4.2L8.7 6.9L9.6 11L6 8.8L2.4 11L3.3 6.9L0.2 4.2L4.3 3.8Z" fill="#b9b9b9"/></svg>
<svg style="left:59.5px;top:381.0px;" width="15" height="15" viewBox="0 0 15 15"><circle cx="7.5" cy="7.5" r="6.6" fill="#fff" stroke="#9459a4" stroke-width="1.4"/><path d="M3.4 11C3 7 4.2 5.4 5.3 5.4C6.6 5.4 7 8 6.6 12Z" fill="#9459a4"/><path d="M11.6 11C12 7 10.8 5.4 9.7 5.4C8.4 5.4 8 8 8.4 12Z" fill="#9459a4"/><circle cx="5.4" cy="4" r="1.1" fill="#9459a4"/><circle cx="9.6" cy="4" r="1.1" fill="#9459a4"/></svg>
<svg style="left:82px;top:384.5px;" width="11" height="9" viewBox="0 0 11 9"><path d="M0.8 0.8L4.8 4.5L0.8 8.2M6 0.8L10 4.5L6 8.2" fill="none" stroke="#9459a4" stroke-width="1.1"/></svg>
<div style="left:178px;top:381.6px;width:24px;height:23.4px;background:#fff;border:1px solid #d6d6d6;border-radius:3px;"></div>
<svg style="left:182px;top:385.5px;" width="16" height="16" viewBox="0 0 16 16"><circle cx="8" cy="8" r="7" fill="none" stroke="#9459a4" stroke-width="1.1"/><rect x="7.4" y="6.8" width="1.3" height="5" fill="#9459a4"/><circle cx="8.05" cy="4.7" r="0.9" fill="#9459a4"/></svg>
<div style="left:210px;top:381.6px;width:64px;height:23.4px;background:#fff;border:1px solid #dcc4e3;border-radius:3px;"></div>
<span style="top:385.0px;font-size:13px;line-height:17px;color:#8a4a9b;left:242px;transform:translateX(-50%);letter-spacing:-0.106px;-webkit-text-stroke:0.45px #8a4a9b;">Apply</span>
<div style="left:0px;top:482px;width:282px;height:1px;background:#e2e2e2;"></div>
<div style="left:8px;top:423px;width:23px;height:23px;background:#fff;border:1px solid #dcc4e3;border-radius:4px;"></div>
<svg style="left:13px;top:428px;" width="14" height="13" viewBox="0 0 14 13"><rect x="0.8" y="0.8" width="12.4" height="11.4" rx="1.6" fill="none" stroke="#9459a4" stroke-width="1.3"/><path d="M0.8 4.6H13.2M0.8 8.4H13.2M5 0.8V12.2" stroke="#9459a4" stroke-width="1.2"/></svg>
<span style="top:422.8px;font-size:14.6px;line-height:18.6px;color:#3c3c3c;left:40.3px;letter-spacing:-0.169px;-webkit-text-stroke:0.22px #3c3c3c;">Email, Aliases and other Mails in o...</span>
<svg style="left:41.5px;top:452px;" width="12" height="11" viewBox="0 0 12 11"><path d="M6 0L7.7 3.8L11.8 4.2L8.7 6.9L9.6 11L6 8.8L2.4 11L3.3 6.9L0.2 4.2L4.3 3.8Z" fill="#b9b9b9"/></svg>
<svg style="left:59.5px;top:450.0px;" width="15" height="15" viewBox="0 0 15 15"><circle cx="7.5" cy="7.5" r="6.6" fill="#fff" stroke="#9459a4" stroke-width="1.4"/><path d="M3.4 11C3 7 4.2 5.4 5.3 5.4C6.6 5.4 7 8 6.6 12Z" fill="#9459a4"/><path d="M11.6 11C12 7 10.8 5.4 9.7 5.4C8.4 5.4 8 8 8.4 12Z" fill="#9459a4"/><circle cx="5.4" cy="4" r="1.1" fill="#9459a4"/><circle cx="9.6" cy="4" r="1.1" fill="#9459a4"/></svg>
<svg style="left:82px;top:451.5px;" width="12" height="12" viewBox="0 0 12 12"><circle cx="6" cy="6" r="5.3" fill="none" stroke="#c9a3d2" stroke-width="1"/><path d="M3.6 5.2A2.6 2.6 0 0 1 8.3 4.6M8.4 6.8A2.6 2.6 0 0 1 3.7 7.4" fill="none" stroke="#9459a4" stroke-width="1"/><path d="M7.6 3.2L8.8 4.9L6.9 5.3Z" fill="#9459a4"/><path d="M4.4 8.8L3.2 7.1L5.1 6.7Z" fill="#9459a4"/></svg>
<div style="left:178px;top:450.6px;width:24px;height:23.4px;background:#fff;border:1px solid #d6d6d6;border-radius:3px;"></div>
<svg style="left:182px;top:454.5px;" width="16" height="16" viewBox="0 0 16 16"><circle cx="8" cy="8" r="7" fill="none" stroke="#9459a4" stroke-width="1.1"/><rect x="7.4" y="6.8" width="1.3" height="5" fill="#9459a4"/><circle cx="8.05" cy="4.7" r="0.9" fill="#9459a4"/></svg>
<div style="left:210px;top:450.6px;width:64px;height:23.4px;background:#fff;border:1px solid #dcc4e3;border-radius:3px;"></div>
<span style="top:454.0px;font-size:13px;line-height:17px;color:#8a4a9b;left:242px;transform:translateX(-50%);letter-spacing:-0.106px;-webkit-text-stroke:0.45px #8a4a9b;">Apply</span>
<div style="left:0px;top:551px;width:282px;height:1px;background:#e2e2e2;"></div>
<div style="left:8px;top:492px;width:23px;height:23px;background:#fff;border:1px solid #dcc4e3;border-radius:4px;"></div>
<svg style="left:13px;top:497px;" width="14" height="13" viewBox="0 0 14 13"><rect x="0.8" y="0.8" width="12.4" height="11.4" rx="1.6" fill="none" stroke="#9459a4" stroke-width="1.3"/><path d="M0.8 4.6H13.2M0.8 8.4H13.2M5 0.8V12.2" stroke="#9459a4" stroke-width="1.2"/></svg>
<span style="top:491.8px;font-size:14.6px;line-height:18.6px;color:#3c3c3c;left:40.3px;letter-spacing:-0.050px;-webkit-text-stroke:0.22px #3c3c3c;">Group licensing info</span>
<svg style="left:41.5px;top:521px;" width="12" height="11" viewBox="0 0 12 11"><path d="M6 0L7.7 3.8L11.8 4.2L8.7 6.9L9.6 11L6 8.8L2.4 11L3.3 6.9L0.2 4.2L4.3 3.8Z" fill="#b9b9b9"/></svg>
<svg style="left:59.5px;top:519.0px;" width="15" height="15" viewBox="0 0 15 15"><circle cx="7.5" cy="7.5" r="6.6" fill="#fff" stroke="#9459a4" stroke-width="1.4"/><path d="M3.4 11C3 7 4.2 5.4 5.3 5.4C6.6 5.4 7 8 6.6 12Z" fill="#9459a4"/><path d="M11.6 11C12 7 10.8 5.4 9.7 5.4C8.4 5.4 8 8 8.4 12Z" fill="#9459a4"/><circle cx="5.4" cy="4" r="1.1" fill="#9459a4"/><circle cx="9.6" cy="4" r="1.1" fill="#9459a4"/></svg>
<svg style="left:82px;top:522.5px;" width="11" height="9" viewBox="0 0 11 9"><path d="M0.8 0.8L4.8 4.5L0.8 8.2M6 0.8L10 4.5L6 8.2" fill="none" stroke="#9459a4" stroke-width="1.1"/></svg>
<div style="left:178px;top:519.6px;width:24px;height:23.4px;background:#fff;border:1px solid #d6d6d6;border-radius:3px;"></div>
<svg style="left:182px;top:523.5px;" width="16" height="16" viewBox="0 0 16 16"><circle cx="8" cy="8" r="7" fill="none" stroke="#9459a4" stroke-width="1.1"/><rect x="7.4" y="6.8" width="1.3" height="5" fill="#9459a4"/><circle cx="8.05" cy="4.7" r="0.9" fill="#9459a4"/></svg>
<div style="left:210px;top:519.6px;width:64px;height:23.4px;background:#fff;border:1px solid #dcc4e3;border-radius:3px;"></div>
<span style="top:523.0px;font-size:13px;line-height:17px;color:#8a4a9b;left:242px;transform:translateX(-50%);letter-spacing:-0.106px;-webkit-text-stroke:0.45px #8a4a9b;">Apply</span>
<div style="left:0px;top:620px;width:282px;height:1px;background:#e2e2e2;"></div>
<div style="left:8px;top:561px;width:23px;height:23px;background:#fff;border:1px solid #dcc4e3;border-radius:4px;"></div>
<svg style="left:13px;top:566px;" width="14" height="13" viewBox="0 0 14 13"><rect x="0.8" y="0.8" width="12.4" height="11.4" rx="1.6" fill="none" stroke="#9459a4" stroke-width="1.3"/><path d="M0.8 4.6H13.2M0.8 8.4H13.2M5 0.8V12.2" stroke="#9459a4" stroke-width="1.2"/></svg>
<span style="top:560.8px;font-size:14.6px;line-height:18.6px;color:#3c3c3c;left:40.3px;letter-spacing:0.039px;-webkit-text-stroke:0.22px #3c3c3c;">Hybrid - All users, including on-pr...</span>
</div>
<div style="left:0px;top:772.5px;width:299px;height:40.5px;background:#eefafd;border-top:1px solid #d9eef4;"></div>
<svg style="left:14px;top:787px;" width="13" height="13" viewBox="0 0 13 13"><circle cx="6.5" cy="6.5" r="2.1" fill="none" stroke="#4c8f9b" stroke-width="1"/><path d="M5.4 0.6H7.6L8 2.3L9.5 3.1L11.1 2.5L12.2 4.4L10.9 5.6V7.4L12.2 8.6L11.1 10.5L9.5 9.9L8 10.7L7.6 12.4H5.4L5 10.7L3.5 9.9L1.9 10.5L0.8 8.6L2.1 7.4V5.6L0.8 4.4L1.9 2.5L3.5 3.1L5 2.3Z" fill="none" stroke="#4c8f9b" stroke-width="1"/></svg>
<span style="top:785.5px;font-size:13px;line-height:17px;color:#4a90a4;left:33px;letter-spacing:-0.504px;">Manage Views</span>
<svg style="left:183px;top:786px;" width="15" height="14" viewBox="0 0 15 14"><circle cx="5.5" cy="3.6" r="2.9" fill="none" stroke="#4c8f9b" stroke-width="1"/><path d="M0.6 12.6C0.6 9 2.5 8 5.5 8C8.5 8 10.4 9 10.4 12.6Z" fill="none" stroke="#4c8f9b" stroke-width="1"/><path d="M10.2 1.6C11.2 2.8 11.2 4.6 10.2 5.8M12.2 0.4C13.8 2.4 13.8 5 12.2 7" fill="none" stroke="#4c8f9b" stroke-width="0.9"/></svg>
<span style="top:785.5px;font-size:13px;line-height:17px;color:#4a90a4;left:202px;letter-spacing:-0.508px;">Suggest a View</span>
</div>
<div style="left:2px;top:996.5px;width:300px;height:1px;background:#c9c9c9;"></div>
<div style="left:558px;top:150px;width:478px;height:79.5px;background:#fff;border:1px solid #cdcdcd;box-shadow:2px 2px 3px rgba(0,0,0,0.42);"></div>
<span style="top:156.5px;font-size:12px;line-height:16px;color:#4a4a4a;font-weight:700;left:570px;letter-spacing:-0.080px;">Export (Ctrl+Shift+E)</span>
<span style="top:178.0px;font-size:12px;line-height:16px;color:#666;left:570px;letter-spacing:0.051px;">Export the grid's content/data selection to various document formats.</span>
<span style="top:192.5px;font-size:12px;line-height:16px;color:#666;left:570px;letter-spacing:0.016px;">This function is grid specific and will only consider the selected data of the grid within</span>
<span style="top:207.5px;font-size:12px;line-height:16px;color:#666;left:570px;letter-spacing:0.069px;">which the export option is initiated.</span>
<div style="left:524px;top:56px;width:40px;height:40px;background:#fb1fa3;border-radius:50%;box-shadow:3px 4px 6px rgba(0,0,0,0.33);"></div>
<svg style="left:524px;top:56px;" width="40" height="40" viewBox="0 0 40 40"><path d="M20.1 9.7H23.4V30.4H20.1V13.6L14.4 17.3V14.1Z" fill="#fff"/></svg>
<div style="left:1137px;top:60px;width:430px;height:568px;background:#f0f0f0;border:1px solid #1f4a73;box-shadow:0 1px 7px rgba(0,0,0,0.12);"></div>
<div style="left:1138px;top:61px;width:428px;height:30px;background:#fff;"></div>
<svg style="left:1145.5px;top:66.5px;" width="17.0" height="17.0" viewBox="0 0 16 16"><circle cx="8" cy="8" r="7.3" fill="#fff" stroke="#9459a4" stroke-width="1.25"/><path d="M7.1 4.6C5.2 3.6 3 4.4 2.4 6.3C2.2 8.6 3.6 11 6.3 13.4L7 10.6C6.4 9.6 6.6 8.8 7.2 8.2Z" fill="#9459a4"/><path d="M8.9 4.6C10.8 3.6 13 4.4 13.6 6.3C13.8 8.6 12.4 11 9.7 13.4L9 10.6C9.6 9.6 9.4 8.8 8.8 8.2Z" fill="#9459a4"/><circle cx="5.6" cy="3.4" r="0.95" fill="#9459a4"/><circle cx="10.4" cy="3.4" r="0.95" fill="#9459a4"/><path d="M7.1 14L8 11.6L8.9 14Z" fill="#9459a4"/></svg>
<span style="top:67.5px;font-size:12px;line-height:16px;color:#000;left:1167.5px;letter-spacing:-0.224px;">Export to File ...</span>
<svg style="left:1546px;top:70px;" width="11" height="11" viewBox="0 0 11 11"><path d="M0.5 0.5L10.5 10.5M10.5 0.5L0.5 10.5" stroke="#111" stroke-width="1.1"/></svg>
<span style="top:105.5px;font-size:12px;line-height:16px;color:#000;left:1150.5px;letter-spacing:-0.192px;">Format:</span>
<div style="left:1149px;top:122px;width:407px;height:82px;background:#fff;border:1px solid #7a7a7a;border-right-color:#a9a9a9;border-bottom-color:#a9a9a9;"></div>
<div style="left:1151px;top:124px;width:403px;height:15px;background:#0078d7;"></div>
<span style="top:123.7px;font-size:12px;line-height:16px;color:#fff;left:1153px;letter-spacing:-0.070px;">Excel Workbook</span>
<span style="top:138.7px;font-size:12px;line-height:16px;color:#000;left:1153px;letter-spacing:-0.221px;">Excel 97-2003 Workbook</span>
<span style="top:153.7px;font-size:12px;line-height:16px;color:#000;left:1153px;letter-spacing:-0.007px;">Pre-Formatted Text file</span>
<span style="top:168.7px;font-size:12px;line-height:16px;color:#000;left:1153px;letter-spacing:0.010px;">HTML file</span>
<span style="top:183.7px;font-size:12px;line-height:16px;color:#000;left:1153px;letter-spacing:0.074px;">XML file</span>
<div style="left:1149px;top:231px;width:407px;height:127px;border:1px solid #dcdcdc;border-radius:7px;"></div>
<div style="left:1155px;top:229px;width:90.5px;height:5px;background:#f0f0f0;"></div>
<span style="top:222.5px;font-size:12px;line-height:16px;color:#000;left:1158px;letter-spacing:-0.181px;">Export Selection</span>
<svg style="left:1192px;top:246px;" width="13" height="13" viewBox="0 0 13 13"><rect x="0.5" y="0.5" width="12" height="12" fill="#f4f4f4" stroke="#8e8f8f"/><rect x="2" y="2" width="9" height="9" fill="#e9e9e9" stroke="#d6d6d6" stroke-width="1"/><path d="M3 6.8L5.2 9.4L10 2.6" fill="none" stroke="#4d4d4d" stroke-width="1.9"/></svg>
<span style="top:245.8px;font-size:12px;line-height:16px;color:#000;left:1210px;letter-spacing:-0.179px;">Selected rows only</span>
<svg style="left:1192px;top:276px;" width="13" height="13" viewBox="0 0 13 13"><rect x="0.5" y="0.5" width="12" height="12" fill="#f4f4f4" stroke="#8e8f8f"/><rect x="2" y="2" width="9" height="9" fill="#e9e9e9" stroke="#d6d6d6" stroke-width="1"/></svg>
<span style="top:275.8px;font-size:12px;line-height:16px;color:#000;left:1210px;letter-spacing:-0.171px;">Expand selected groups</span>
<svg style="left:1192px;top:305px;" width="13" height="13" viewBox="0 0 13 13"><rect x="0.5" y="0.5" width="12" height="12" fill="#f4f4f4" stroke="#8e8f8f"/><rect x="2" y="2" width="9" height="9" fill="#e9e9e9" stroke="#d6d6d6" stroke-width="1"/></svg>
<span style="top:304.8px;font-size:12px;line-height:16px;color:#000;left:1210px;letter-spacing:0.073px;">Children only</span>
<svg style="left:1192px;top:334px;" width="13" height="13" viewBox="0 0 13 13"><rect x="0.5" y="0.5" width="12" height="12" fill="#f4f4f4" stroke="#8e8f8f"/><rect x="2" y="2" width="9" height="9" fill="#e9e9e9" stroke="#d6d6d6" stroke-width="1"/><path d="M3 6.8L5.2 9.4L10 2.6" fill="none" stroke="#4d4d4d" stroke-width="1.9"/></svg>
<span style="top:333.8px;font-size:12px;line-height:16px;color:#000;left:1210px;letter-spacing:0.049px;">Include locked technical columns</span>
<div style="left:1149px;top:374px;width:407px;height:112px;border:1px solid #dcdcdc;border-radius:7px;"></div>
<div style="left:1155px;top:372px;width:36.5px;height:5px;background:#f0f0f0;"></div>
<span style="top:365.5px;font-size:12px;line-height:16px;color:#000;left:1158px;letter-spacing:0.117px;">Mode</span>
<svg style="left:1192.0px;top:389.5px;" width="13" height="13" viewBox="0 0 13 13"><circle cx="6.5" cy="6.5" r="6" fill="#fbfbfb" stroke="#c9a78e" stroke-width="1"/><circle cx="6.5" cy="6.5" r="4.4" fill="none" stroke="#ece6e0" stroke-width="1"/><circle cx="6.5" cy="6.5" r="2.3" fill="#2c3a5a"/></svg>
<span style="top:388.5px;font-size:12px;line-height:16px;color:#000;left:1210px;letter-spacing:-0.339px;">Create</span>
<svg style="left:1192.0px;top:414.0px;" width="13" height="13" viewBox="0 0 13 13"><circle cx="6.5" cy="6.5" r="6" fill="#fbfbfb" stroke="#c9a78e" stroke-width="1"/><circle cx="6.5" cy="6.5" r="4.4" fill="none" stroke="#ece6e0" stroke-width="1"/></svg>
<span style="top:413.7px;font-size:12px;line-height:16px;color:#000;left:1210px;letter-spacing:0.021px;">Append</span>
<svg style="left:1192.0px;top:438.2px;" width="13" height="13" viewBox="0 0 13 13"><circle cx="6.5" cy="6.5" r="6" fill="#fbfbfb" stroke="#c9a78e" stroke-width="1"/><circle cx="6.5" cy="6.5" r="4.4" fill="none" stroke="#ece6e0" stroke-width="1"/></svg>
<span style="top:437.9px;font-size:12px;line-height:16px;color:#000;left:1210px;letter-spacing:0.080px;">Blind Append (Without Column Header Match)</span>
<svg style="left:1192.0px;top:463.2px;" width="13" height="13" viewBox="0 0 13 13"><circle cx="6.5" cy="6.5" r="6" fill="#fbfbfb" stroke="#c9a78e" stroke-width="1"/><circle cx="6.5" cy="6.5" r="4.4" fill="none" stroke="#ece6e0" stroke-width="1"/></svg>
<span style="top:462.9px;font-size:12px;line-height:16px;color:#000;left:1210px;letter-spacing:0.172px;">Add Non-Contiguous</span>
<div style="left:1149px;top:507px;width:407px;height:42px;border:1px solid #dcdcdc;border-radius:7px;"></div>
<div style="left:1155px;top:505px;width:56px;height:5px;background:#f0f0f0;"></div>
<span style="top:498.5px;font-size:12px;line-height:16px;color:#000;left:1158px;letter-spacing:-0.006px;">Encoding</span>
<svg style="left:1188.8px;top:523.3px;" width="13" height="13" viewBox="0 0 13 13"><circle cx="6.5" cy="6.5" r="6" fill="#fdf6ef" stroke="#e3cdb9" stroke-width="1"/><circle cx="6.5" cy="6.5" r="4.4" fill="none" stroke="#ece6e0" stroke-width="1"/></svg>
<span style="top:523.0px;font-size:12px;line-height:16px;color:#a0a0a0;left:1207px;letter-spacing:0.121px;">Ascii output</span>
<svg style="left:1374.8px;top:523.3px;" width="13" height="13" viewBox="0 0 13 13"><circle cx="6.5" cy="6.5" r="6" fill="#fbfbfb" stroke="#c9a78e" stroke-width="1"/><circle cx="6.5" cy="6.5" r="4.4" fill="none" stroke="#ece6e0" stroke-width="1"/><circle cx="6.5" cy="6.5" r="2.3" fill="#2c3a5a"/></svg>
<span style="top:523.0px;font-size:12px;line-height:16px;color:#000;left:1393px;letter-spacing:-0.048px;">Unicode (UTF-8) output</span>
<svg style="left:1150px;top:561px;" width="13" height="13" viewBox="0 0 13 13"><rect x="0.5" y="0.5" width="12" height="12" fill="#f4f4f4" stroke="#8e8f8f"/><rect x="2" y="2" width="9" height="9" fill="#e9e9e9" stroke="#d6d6d6" stroke-width="1"/><path d="M3 6.8L5.2 9.4L10 2.6" fill="none" stroke="#4d4d4d" stroke-width="1.9"/></svg>
<span style="top:560.7px;font-size:12px;line-height:16px;color:#000;left:1168.5px;letter-spacing:-0.135px;">Once generated, open the file ...</span>
<div style="left:1199.5px;top:575px;width:6px;height:1px;background:#000;"></div>
<div style="left:1404px;top:556px;width:75px;height:23px;background:linear-gradient(#fdedb0 0%,#fbd96b 50%,#f7c84a 100%);border:1px solid #c6a24a;border-radius:3px;"></div>
<span style="top:559.5px;font-size:12px;line-height:16px;color:#000;font-weight:700;left:1441.5px;transform:translateX(-50%);letter-spacing:-0.169px;">Export</span>
<div style="left:1480px;top:556px;width:75px;height:23px;background:linear-gradient(#f3f3f3 0%,#e4e4e4 50%,#d2d2d2 100%);border:1px solid #b3b3b3;border-radius:3px;"></div>
<span style="top:559.5px;font-size:12px;line-height:16px;color:#000;left:1517.5px;transform:translateX(-50%);letter-spacing:-0.310px;">Cancel</span>
<div style="left:1149px;top:594px;width:75px;height:23px;background:linear-gradient(#f3f3f3 0%,#e4e4e4 50%,#d2d2d2 100%);border:1px solid #b3b3b3;border-radius:3px;"></div>
<span style="top:597.5px;font-size:12px;line-height:16px;color:#000;left:1186.5px;transform:translateX(-50%);letter-spacing:-0.216px;">Settings...</span>
<span style="top:597.5px;font-size:12px;line-height:16px;color:#2f6fc4;left:1250.5px;letter-spacing:-0.069px;">For more information, see our online help database...</span>
<svg style="left:1553px;top:615px;" width="11" height="11" viewBox="0 0 11 11"><g fill="#b9b9b9"><rect x="8" y="0" width="2" height="2"/><rect x="4" y="4" width="2" height="2"/><rect x="8" y="4" width="2" height="2"/><rect x="0" y="8" width="2" height="2"/><rect x="4" y="8" width="2" height="2"/><rect x="8" y="8" width="2" height="2"/></g></svg>
<div style="left:1106px;top:270px;width:40px;height:40px;background:#fb1fa3;border-radius:50%;box-shadow:3px 4px 6px rgba(0,0,0,0.33);"></div>
<span style="top:275.5px;font-size:29px;line-height:30px;color:#fff;left:1126px;transform:translateX(-50%);">2</span>
<svg style="left:1145px;top:255px;" width="50" height="90" viewBox="0 0 50 90"><g filter="drop-shadow(1.5px 2.5px 1.6px rgba(0,0,0,0.35))"><path d="M12.5 32L28 16.5" stroke="#fb1fa3" stroke-width="5" stroke-linecap="round"/><path d="M36.6 7.4L32.8 22.6L21.8 11.4Z" fill="#fb1fa3"/><path d="M10.5 57L29 71" stroke="#fb1fa3" stroke-width="5" stroke-linecap="round"/><path d="M39.6 79L23.6 78L33 64.6Z" fill="#fb1fa3"/></g></svg>
</div></body></html>
